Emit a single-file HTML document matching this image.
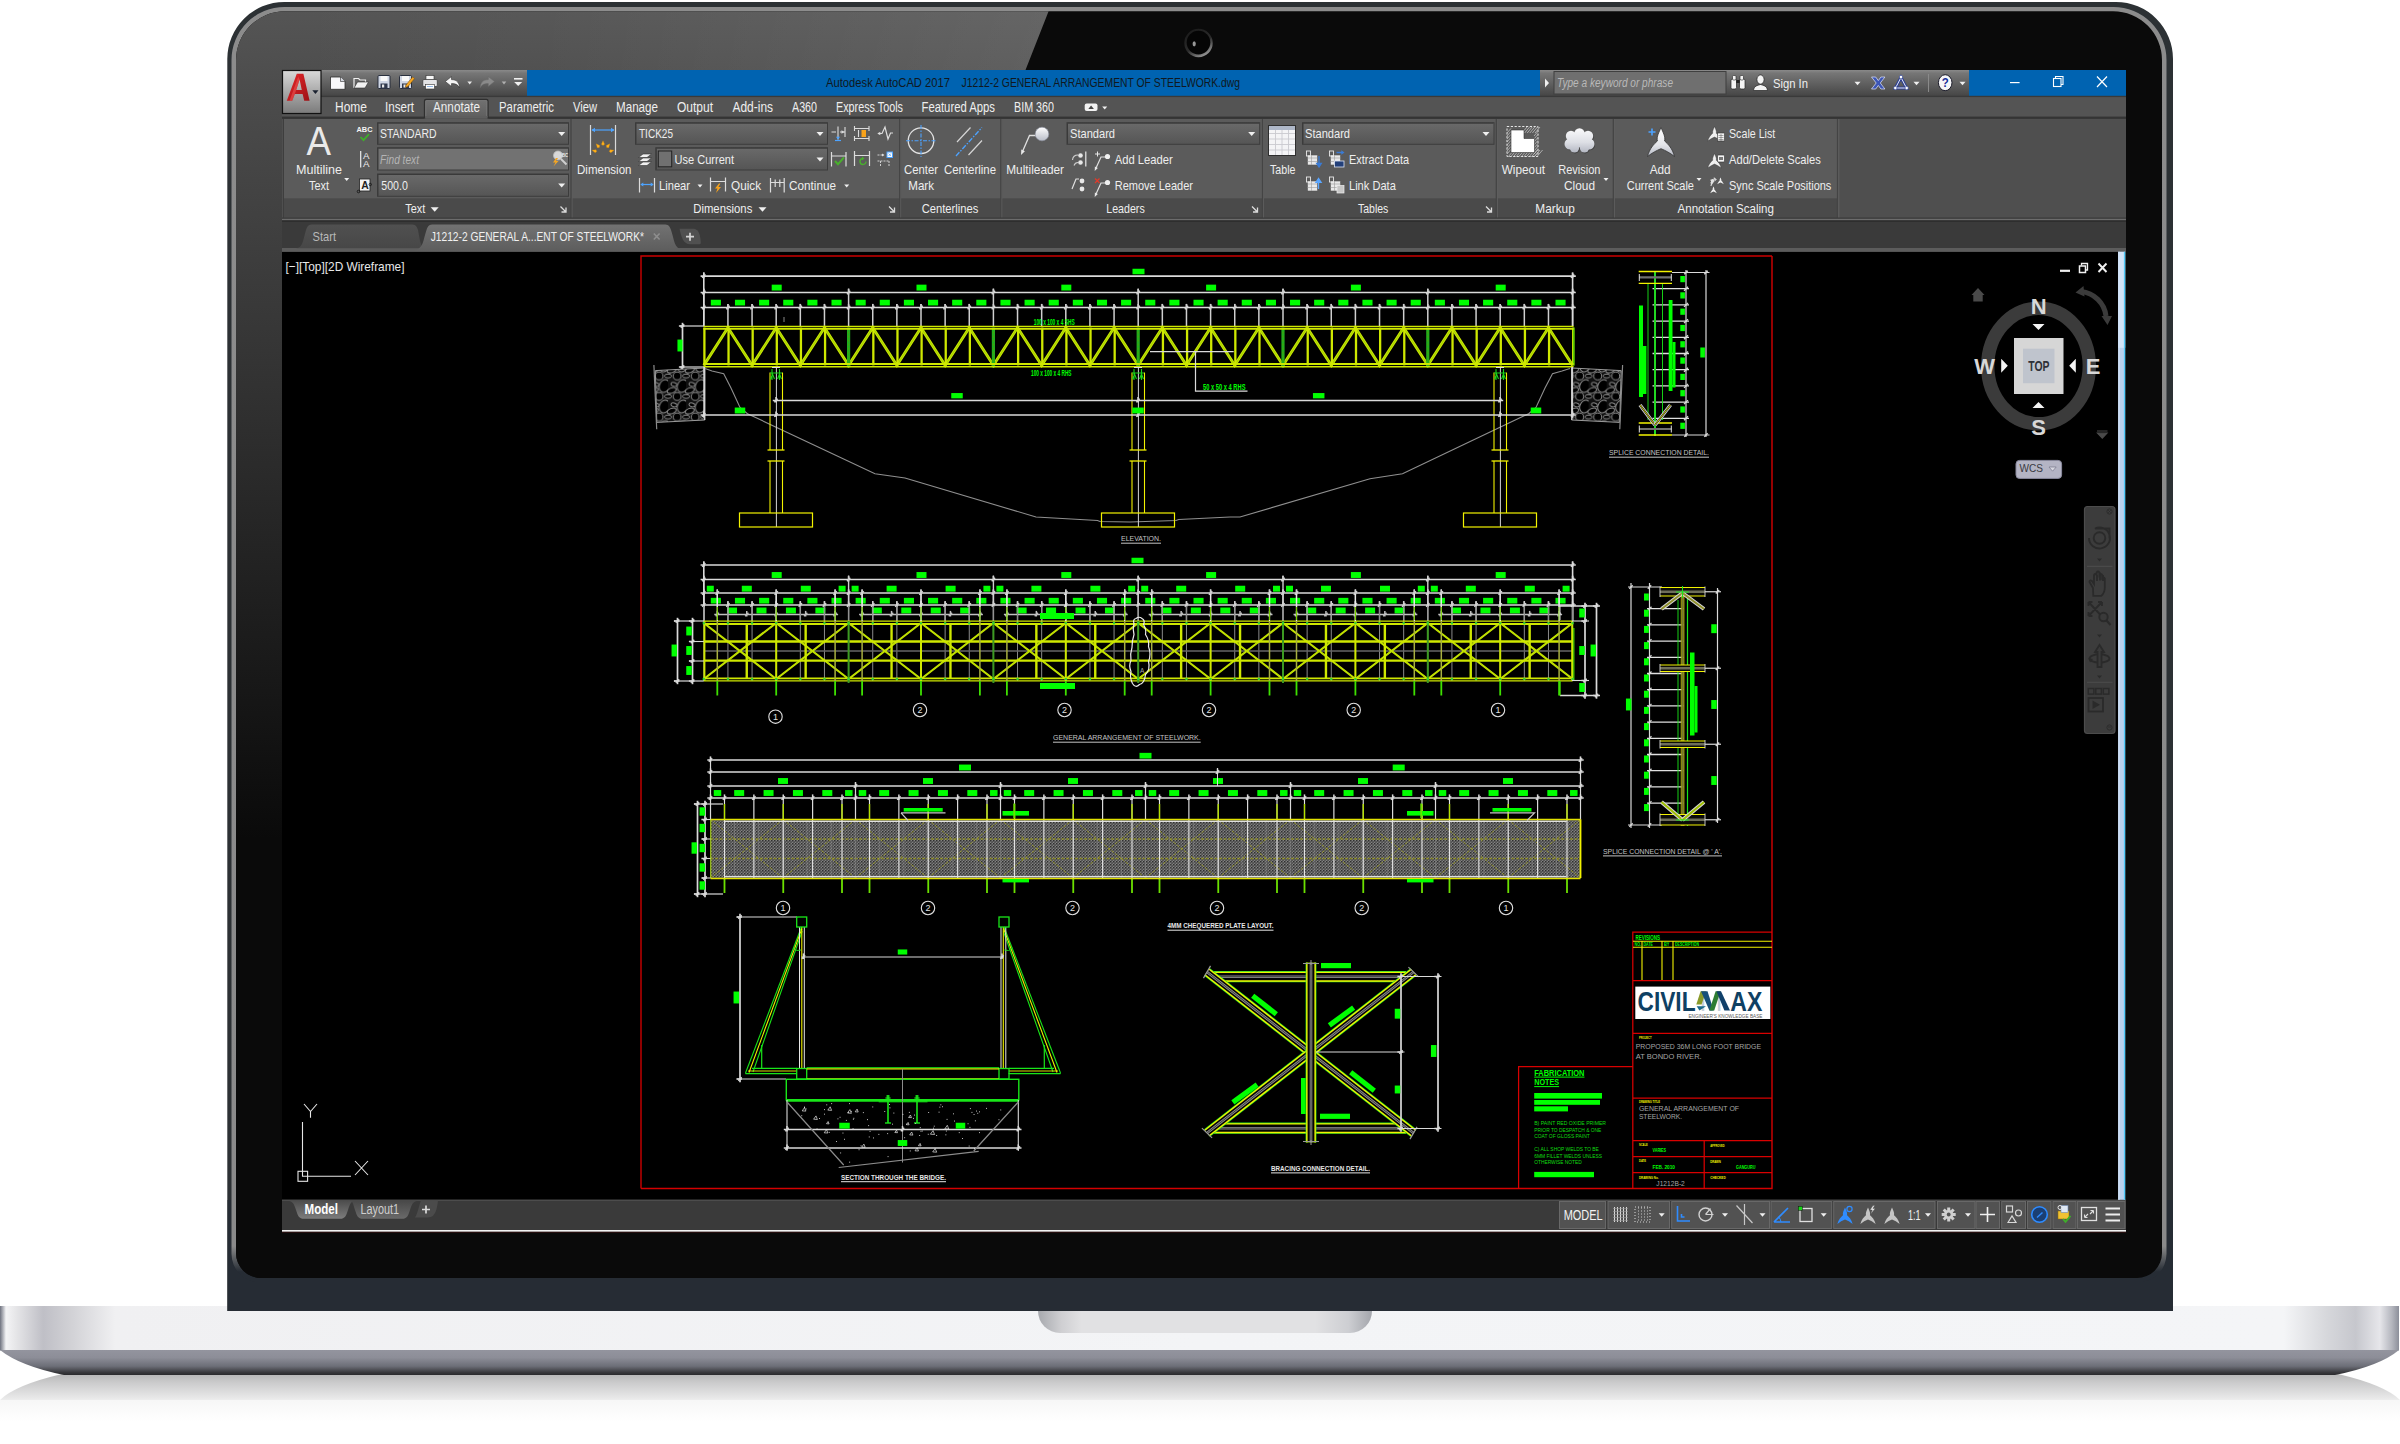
<!DOCTYPE html>
<html lang="en"><head><meta charset="utf-8"><title>Autodesk AutoCAD 2017 - J1212-2 GENERAL ARRANGEMENT OF STEELWORK.dwg</title>
<style>
html,body{margin:0;padding:0;background:#fff;}
body{width:2400px;height:1444px;overflow:hidden;}
svg{display:block;font-family:"Liberation Sans",sans-serif;}
</style></head><body>
<svg width="2400" height="1444" viewBox="0 0 2400 1444">
<defs>
<linearGradient id="gBezelL" x1="0" y1="0" x2="0" y2="1">
 <stop offset="0" stop-color="#565656"/><stop offset="0.078" stop-color="#4b4b4b"/><stop offset="0.457" stop-color="#202020"/><stop offset="0.65" stop-color="#0a0a0a"/><stop offset="1" stop-color="#0a0a0a"/>
</linearGradient>
<linearGradient id="gBaseTop" x1="0" y1="0" x2="1" y2="0">
 <stop offset="0" stop-color="#6f7380"/><stop offset="0.0025" stop-color="#f4f4f6"/><stop offset="0.006" stop-color="#e8e8ea"/><stop offset="0.018" stop-color="#bfbfc6"/><stop offset="0.03" stop-color="#d2d2d6"/><stop offset="0.048" stop-color="#f0f0f2"/>
 <stop offset="0.5" stop-color="#f3f4f6"/>
 <stop offset="0.952" stop-color="#f4f5f7"/><stop offset="0.97" stop-color="#d6d7db"/><stop offset="0.982" stop-color="#c6c7cd"/><stop offset="0.992" stop-color="#e6e6ea"/><stop offset="0.997" stop-color="#b4b6be"/><stop offset="1" stop-color="#8c8f9a"/>
</linearGradient>
<linearGradient id="gBaseBot" x1="0" y1="0" x2="0" y2="1">
 <stop offset="0" stop-color="#93949e"/><stop offset="0.3" stop-color="#8d8e98"/><stop offset="0.65" stop-color="#6c6e77"/><stop offset="0.9" stop-color="#38383c"/><stop offset="1" stop-color="#2a2a2c"/>
</linearGradient>
<linearGradient id="gRefl" x1="0" y1="0" x2="0" y2="1">
 <stop offset="0" stop-color="#b7b7b7"/><stop offset="0.13" stop-color="#cbcbcc"/><stop offset="0.385" stop-color="#ebebeb"/><stop offset="0.40" stop-color="#f7f7f7"/><stop offset="0.72" stop-color="#ffffff"/><stop offset="1" stop-color="#ffffff"/>
</linearGradient>
<linearGradient id="gNotch" x1="0" y1="0" x2="1" y2="0">
 <stop offset="0" stop-color="#a7a9ae"/><stop offset="0.07" stop-color="#cfcfd2"/><stop offset="0.13" stop-color="#e1e1e3"/><stop offset="0.83" stop-color="#e1e1e3"/><stop offset="0.93" stop-color="#cdced2"/><stop offset="1" stop-color="#a4a6ac"/>
</linearGradient>
<clipPath id="cBezel"><path d="M236,60.2 A49,49 0 0 1 285,11.2 H2113 A49,49 0 0 1 2162,60.2 V1253 A25,25 0 0 1 2137,1278 H261 A25,25 0 0 1 236,1253 Z"/></clipPath>
<linearGradient id="gBezelH" x1="0" y1="0" x2="1" y2="0"><stop offset="0" stop-color="#ffffff" stop-opacity="0"/><stop offset="0.35" stop-color="#ffffff" stop-opacity="0.02"/><stop offset="1" stop-color="#ffffff" stop-opacity="0.1"/></linearGradient>
<linearGradient id="gRing" gradientUnits="userSpaceOnUse" x1="0" y1="0" x2="0" y2="1282"><stop offset="0" stop-color="#8c8c8c"/><stop offset="0.972" stop-color="#8a8a8a"/><stop offset="0.992" stop-color="#262c34"/><stop offset="1" stop-color="#262c34"/></linearGradient>
<linearGradient id="gCam" x1="0.2" y1="0" x2="0.8" y2="1"><stop offset="0" stop-color="#1a1a1a"/><stop offset="0.55" stop-color="#2c2c2c"/><stop offset="1" stop-color="#a8a8a8"/></linearGradient>

<linearGradient id="gQat" x1="0" y1="0" x2="0" y2="1"><stop offset="0" stop-color="#8a8a8a"/><stop offset="0.12" stop-color="#767676"/><stop offset="1" stop-color="#454545"/></linearGradient>
<linearGradient id="gApp" x1="0" y1="0" x2="0" y2="1"><stop offset="0" stop-color="#d9d9d9"/><stop offset="0.5" stop-color="#a9a9a9"/><stop offset="1" stop-color="#7b7b7b"/></linearGradient>
<linearGradient id="gDrop" x1="0" y1="0" x2="0" y2="1"><stop offset="0" stop-color="#6a6a6a"/><stop offset="1" stop-color="#555555"/></linearGradient>
<linearGradient id="gTabA" x1="0" y1="0" x2="0" y2="1"><stop offset="0" stop-color="#727272"/><stop offset="1" stop-color="#5d5d5d"/></linearGradient>
<linearGradient id="gTabI" x1="0" y1="0" x2="0" y2="1"><stop offset="0" stop-color="#505050"/><stop offset="1" stop-color="#474747"/></linearGradient>
<linearGradient id="gMod" x1="0" y1="0" x2="0" y2="1"><stop offset="0" stop-color="#4c4c4c"/><stop offset="1" stop-color="#7d7d7d"/></linearGradient>
<linearGradient id="gLay" x1="0" y1="0" x2="0" y2="1"><stop offset="0" stop-color="#484848"/><stop offset="1" stop-color="#6a6a6a"/></linearGradient>
<linearGradient id="gBall" x1="0" y1="0" x2="0" y2="1"><stop offset="0" stop-color="#ffffff"/><stop offset="1" stop-color="#b9bdc8"/></linearGradient>
<linearGradient id="gCloud" gradientUnits="userSpaceOnUse" x1="0" y1="128" x2="0" y2="154"><stop offset="0" stop-color="#fbfbfc"/><stop offset="0.55" stop-color="#dddfe5"/><stop offset="1" stop-color="#aeb2be"/></linearGradient>
<linearGradient id="gAnn" gradientUnits="userSpaceOnUse" x1="0" y1="-15" x2="0" y2="14"><stop offset="0" stop-color="#ffffff"/><stop offset="0.6" stop-color="#e4e5ea"/><stop offset="1" stop-color="#b4b8c4"/></linearGradient>
<linearGradient id="gRedA" x1="0" y1="0" x2="1" y2="1"><stop offset="0" stop-color="#e8262a"/><stop offset="1" stop-color="#9c1216"/></linearGradient>

<pattern id="pStone" width="18.05" height="20.5" patternUnits="userSpaceOnUse" patternTransform="translate(650 366)">
 <rect width="18.05" height="20.5" fill="#101010"/>
 <g fill="#000" stroke="#909090" stroke-width="0.95">
 <ellipse cx="3.65" cy="4" rx="4.6" ry="2.6" transform="rotate(-20 3.65 4)"/><ellipse cx="21.7" cy="4" rx="4.6" ry="2.6" transform="rotate(-20 21.7 4)"/>
 <ellipse cx="5.85" cy="18.4" rx="3" ry="1.8" transform="rotate(15 5.85 18.4)"/><ellipse cx="5.85" cy="-2.1" rx="3" ry="1.8" transform="rotate(15 5.85 -2.1)"/>
 <ellipse cx="0" cy="10" rx="3.5" ry="1.9"/><ellipse cx="18.05" cy="10" rx="3.5" ry="1.9"/>
 <circle cx="9.1" cy="10" r="3.9"/>
 <ellipse cx="14.4" cy="20" rx="5" ry="6.5" transform="rotate(20 14.4 20)"/><ellipse cx="14.4" cy="-0.5" rx="5" ry="6.5" transform="rotate(20 14.4 -0.5)"/>
 </g>
</pattern>
<pattern id="pCheq" width="3" height="3" patternUnits="userSpaceOnUse">
 <rect width="3" height="3" fill="#565656"/><path d="M0,3 L3,0" stroke="#929292" stroke-width="0.7"/><path d="M0,0 L1.5,1.5" stroke="#242424" stroke-width="0.8"/>
</pattern>
</defs>
<g id="frame"><path d="M62,1374 H2338 Q2385,1385 2400,1400 V1440 H0 V1400 Q15,1385 62,1374 Z" fill="url(#gRefl)"/>
<rect x="0" y="1306" width="2399" height="44.5" fill="url(#gBaseTop)" />
<path d="M0,1350 H2399 Q2380,1366 2335,1375 H64 Q20,1366 0,1350 Z" fill="url(#gBaseBot)"/>
<path d="M227.3,1311 V59 A57,57 0 0 1 284.3,2 H2116 A57,57 0 0 1 2173,59 V1311 Z" fill="#2c3134"/>
<rect x="227.6" y="1200" width="1945.4" height="111" fill="#262c34" />
<path d="M231.5,1254 V60 A53,53 0 0 1 284.5,7 H2113.5 A53,53 0 0 1 2166.5,60 V1254 A28,28 0 0 1 2138.5,1282 H259.5 A28,28 0 0 1 231.5,1254 Z" fill="#262c34"/>
<path d="M231.5,1254 V60 A53,53 0 0 1 284.5,7 H2113.5 A53,53 0 0 1 2166.5,60 V1254 A28,28 0 0 1 2138.5,1282 H259.5 A28,28 0 0 1 231.5,1254 Z" fill="url(#gRing)"/>
<g clip-path="url(#cBezel)">
<rect x="230" y="0" width="1940" height="1290" fill="#0a0a0a" />
<path d="M230,0 H1053 L1025.5,70 H282 V1290 H230 Z" fill="url(#gBezelL)"/>
<path d="M282,0 H1053 L1025.5,70 H282 Z" fill="url(#gBezelH)"/>
</g>
<path d="M1038,1311 H1372 V1311 A22,22 0 0 1 1350,1333 H1060 A22,22 0 0 1 1038,1311 Z" fill="url(#gNotch)"/>
<circle cx="1198.5" cy="43" r="14.2" fill="url(#gCam)"/><circle cx="1198.5" cy="42.6" r="11.8" fill="#050505"/><ellipse cx="1194.2" cy="43.8" rx="1.6" ry="2.6" fill="#c8c8c8" opacity="0.75"/></g><g id="ui"><rect x="282" y="70" width="1844" height="1162" fill="#000000" /><rect x="282" y="70" width="1844" height="26.5" fill="#0063b1" /><rect x="320.5" y="70" width="206.5" height="26.3" fill="url(#gQat)" /><rect x="1540" y="70" width="429" height="26.3" fill="url(#gQat)" /><text x="826" y="87" font-size="13.5" fill="#101820" textLength="124" lengthAdjust="spacingAndGlyphs">Autodesk AutoCAD 2017</text><text x="961.5" y="87" font-size="13.5" fill="#101820" textLength="278.5" lengthAdjust="spacingAndGlyphs">J1212-2 GENERAL ARRANGEMENT OF STEELWORK.dwg</text><path d="M1545,78.5 l4,4.5 l-4,4.5 z" fill="#f0f0f0"/><rect x="1554" y="71.5" width="172" height="22.5" fill="#6f6f6f" stroke="#3f3f3f" stroke-width="1"/><text x="1557" y="87.3" font-size="12.5" fill="#b9b9b9" textLength="116" lengthAdjust="spacingAndGlyphs" font-style="italic">Type a keyword or phrase</text><text x="1773" y="87.7" font-size="13.5" fill="#eeeeee" textLength="35" lengthAdjust="spacingAndGlyphs">Sign In</text><path d="M1854.5,81.75 h6 l-3,3.5 z" fill="#f0f0f0"/><path d="M1913.5,81.75 h6 l-3,3.5 z" fill="#f0f0f0"/><path d="M1959.5,81.75 h6 l-3,3.5 z" fill="#f0f0f0"/><line x1="1928.5" y1="74" x2="1928.5" y2="92" stroke="#8a8a8a" stroke-width="1" /><line x1="2010" y1="82.6" x2="2019.6" y2="82.6" stroke="#ffffff" stroke-width="1.2" /><rect x="2053.5" y="78.5" width="7.5" height="8" fill="none" stroke="#fff" stroke-width="1.1"/><path d="M2055.5,78.5 v-2 h7.5 v8 h-2" fill="none" stroke="#fff" stroke-width="1.1"/><path d="M2097,76.5 l10,10.5 M2107,76.5 l-10,10.5" stroke="#fff" stroke-width="1.2" fill="none"/><rect x="282" y="96.3" width="1844" height="22" fill="#545454" /><rect x="282" y="95.8" width="1844" height="1.3" fill="#3a3a3a" /><rect x="282" y="116.6" width="1844" height="1.7" fill="#343434" /><path d="M424.5,118.5 V101 a1.5,1.5 0 0 1 1.5,-1.5 H486.5 a1.5,1.5 0 0 1 1.5,1.5 V118.5 Z" fill="url(#gTabA)" stroke="#2f2f2f" stroke-width="1.3"/><path d="M425.8,117 V101.3 a0.8,0.8 0 0 1 0.8,-0.8 H486 a0.8,0.8 0 0 1 0.8,0.8 V117" fill="none" stroke="#7a7a7a" stroke-width="0.8"/><rect x="425.2" y="116" width="62.3" height="3" fill="#5d5d5d" /><text x="335" y="112" font-size="14" fill="#eeeeee" textLength="32" lengthAdjust="spacingAndGlyphs">Home</text><text x="385" y="112" font-size="14" fill="#eeeeee" textLength="29" lengthAdjust="spacingAndGlyphs">Insert</text><text x="433" y="112" font-size="14" fill="#eeeeee" textLength="47" lengthAdjust="spacingAndGlyphs">Annotate</text><text x="499" y="112" font-size="14" fill="#eeeeee" textLength="55" lengthAdjust="spacingAndGlyphs">Parametric</text><text x="573" y="112" font-size="14" fill="#eeeeee" textLength="24" lengthAdjust="spacingAndGlyphs">View</text><text x="616" y="112" font-size="14" fill="#eeeeee" textLength="42" lengthAdjust="spacingAndGlyphs">Manage</text><text x="677" y="112" font-size="14" fill="#eeeeee" textLength="36" lengthAdjust="spacingAndGlyphs">Output</text><text x="732.5" y="112" font-size="14" fill="#eeeeee" textLength="40.5" lengthAdjust="spacingAndGlyphs">Add-ins</text><text x="792" y="112" font-size="14" fill="#eeeeee" textLength="25" lengthAdjust="spacingAndGlyphs">A360</text><text x="836" y="112" font-size="14" fill="#eeeeee" textLength="67" lengthAdjust="spacingAndGlyphs">Express Tools</text><text x="921.5" y="112" font-size="14" fill="#eeeeee" textLength="73.5" lengthAdjust="spacingAndGlyphs">Featured Apps</text><text x="1014" y="112" font-size="14" fill="#eeeeee" textLength="40" lengthAdjust="spacingAndGlyphs">BIM 360</text><rect x="1084.7" y="103.5" width="12.8" height="7.5" rx="2" fill="#f2f2f2"/><path d="M1088.3,109 h5.6 l-2.8,-3.6 z" fill="#444"/><path d="M1102.2,106.5 h5 l-2.5,3 z" fill="#f0f0f0"/><rect x="282" y="118.5" width="1844" height="100" fill="#4f4f4f" /><rect x="284" y="119" width="287" height="79.5" fill="#5b5b5b" /><rect x="284" y="198.5" width="287" height="19.5" fill="#4a4a4a" /><line x1="571" y1="119" x2="571" y2="218" stroke="#444444" stroke-width="1.2" /><line x1="572.3" y1="119" x2="572.3" y2="218" stroke="#676767" stroke-width="0.8" /><rect x="572.5" y="119" width="327.2" height="79.5" fill="#5b5b5b" /><rect x="572.5" y="198.5" width="327.2" height="19.5" fill="#4a4a4a" /><line x1="899.7" y1="119" x2="899.7" y2="218" stroke="#444444" stroke-width="1.2" /><line x1="901" y1="119" x2="901" y2="218" stroke="#676767" stroke-width="0.8" /><rect x="901.2" y="119" width="99.6" height="79.5" fill="#5b5b5b" /><rect x="901.2" y="198.5" width="99.6" height="19.5" fill="#4a4a4a" /><line x1="1000.8" y1="119" x2="1000.8" y2="218" stroke="#444444" stroke-width="1.2" /><line x1="1002.1" y1="119" x2="1002.1" y2="218" stroke="#676767" stroke-width="0.8" /><rect x="1002.3" y="119" width="260.2" height="79.5" fill="#5b5b5b" /><rect x="1002.3" y="198.5" width="260.2" height="19.5" fill="#4a4a4a" /><line x1="1262.5" y1="119" x2="1262.5" y2="218" stroke="#444444" stroke-width="1.2" /><line x1="1263.8" y1="119" x2="1263.8" y2="218" stroke="#676767" stroke-width="0.8" /><rect x="1264" y="119" width="232.3" height="79.5" fill="#5b5b5b" /><rect x="1264" y="198.5" width="232.3" height="19.5" fill="#4a4a4a" /><line x1="1496.3" y1="119" x2="1496.3" y2="218" stroke="#444444" stroke-width="1.2" /><line x1="1497.6" y1="119" x2="1497.6" y2="218" stroke="#676767" stroke-width="0.8" /><rect x="1497.8" y="119" width="115.5" height="79.5" fill="#5b5b5b" /><rect x="1497.8" y="198.5" width="115.5" height="19.5" fill="#4a4a4a" /><line x1="1613.3" y1="119" x2="1613.3" y2="218" stroke="#444444" stroke-width="1.2" /><line x1="1614.6" y1="119" x2="1614.6" y2="218" stroke="#676767" stroke-width="0.8" /><rect x="1614.8" y="119" width="222.7" height="79.5" fill="#5b5b5b" /><rect x="1614.8" y="198.5" width="222.7" height="19.5" fill="#4a4a4a" /><line x1="1837.5" y1="119" x2="1837.5" y2="218" stroke="#444444" stroke-width="1.2" /><line x1="1838.8" y1="119" x2="1838.8" y2="218" stroke="#676767" stroke-width="0.8" /><line x1="283.5" y1="119" x2="283.5" y2="218" stroke="#3e3e3e" stroke-width="1" /><rect x="282" y="217.5" width="1844" height="1.2" fill="#3a3a3a" /><rect x="282" y="218.7" width="1844" height="1.6" fill="#6c6c6c" /><rect x="282" y="220.3" width="1844" height="1.2" fill="#444444" /><text x="306.5" y="155" font-size="41" fill="#e9e9e9" textLength="24.5" lengthAdjust="spacingAndGlyphs">A</text><text x="296" y="174.3" font-size="13.5" fill="#eeeeee" textLength="46" lengthAdjust="spacingAndGlyphs">Multiline</text><text x="309" y="190.2" font-size="13.5" fill="#eeeeee" textLength="20" lengthAdjust="spacingAndGlyphs">Text</text><path d="M344.2,178 h5 l-2.5,3 z" fill="#f0f0f0"/><rect x="377.5" y="122.7" width="191" height="21.6" fill="url(#gDrop)" stroke="#3c3c3c" stroke-width="1"/><path d="M378,143.8 V123.2 H568" stroke="#3a3a3a" stroke-width="1" fill="none"/><rect x="377.5" y="147.7" width="191" height="22.3" fill="#727272" stroke="#3c3c3c" stroke-width="1"/><path d="M378,169.5 V148.2 H568" stroke="#3a3a3a" stroke-width="1" fill="none"/><rect x="377.5" y="174" width="191" height="22.3" fill="url(#gDrop)" stroke="#3c3c3c" stroke-width="1"/><path d="M378,195.8 V174.5 H568" stroke="#3a3a3a" stroke-width="1" fill="none"/><text x="380" y="137.7" font-size="13.5" fill="#eeeeee" textLength="56.5" lengthAdjust="spacingAndGlyphs">STANDARD</text><text x="380" y="163.5" font-size="13" fill="#b4b4b4" textLength="39" lengthAdjust="spacingAndGlyphs" font-style="italic">Find text</text><text x="381.3" y="189.7" font-size="13.5" fill="#eeeeee" textLength="26.5" lengthAdjust="spacingAndGlyphs">500.0</text><path d="M558.2,132 h7 l-3.5,4 z" fill="#f0f0f0"/><path d="M558.2,183.5 h7 l-3.5,4 z" fill="#f0f0f0"/><text x="356.5" y="132" font-size="7" fill="#f4f4f4" textLength="16" lengthAdjust="spacingAndGlyphs" font-weight="bold">ABC</text><path d="M360.5,137 l3,3.2 l5.5,-6" stroke="#3fae2a" stroke-width="1.8" fill="none"/><line x1="360.7" y1="151" x2="360.7" y2="167.5" stroke="#ededed" stroke-width="1.2" /><text x="363" y="158.5" font-size="8.5" fill="#ededed" textLength="6.5" lengthAdjust="spacingAndGlyphs">A</text><text x="363" y="167" font-size="8.5" fill="#ededed" textLength="6.5" lengthAdjust="spacingAndGlyphs">A</text><rect x="359.5" y="179" width="10.5" height="12" fill="#f4f4f4" stroke="#222" stroke-width="0.8"/><text x="361.2" y="189.3" font-size="10.5" fill="#222" textLength="7.5" lengthAdjust="spacingAndGlyphs" font-weight="bold">A</text><circle cx="358.5" cy="191.5" r="1.3" fill="none" stroke="#111" stroke-width="0.8"/><circle cx="370.3" cy="184.5" r="1.2" fill="none" stroke="#111" stroke-width="0.8"/><circle cx="558" cy="155.5" r="4.5" fill="#d8d8d8" stroke="#bbb" stroke-width="0.8"/><path d="M561,159 l5.5,5.5" stroke="#cfcfcf" stroke-width="2"/><path d="M556,158 l-3,4.5 h2.5 l-2,4 l5,-5.5 h-2.5 l2,-3 z" fill="#f5a623"/><text x="562" y="156.5" font-size="5.5" fill="#eee" textLength="6" lengthAdjust="spacingAndGlyphs" font-weight="bold">BC</text><text x="405.3" y="212.7" font-size="13.5" fill="#eeeeee" textLength="20" lengthAdjust="spacingAndGlyphs">Text</text><path d="M430.7,207.25 h8 l-4,4.5 z" fill="#f0f0f0"/><path d="M560.5,206.5 l5,5 M566,207.5 v4.5 h-4.5" stroke="#dcdcdc" stroke-width="1.3" fill="none"/><path d="M590.5,125 V155 M615.5,125 V155" stroke="#d9d9d9" stroke-width="1.2"/><path d="M592,130 H614" stroke="#4da3ff" stroke-width="1.2"/><path d="M591.5,130 l3.5,-2.2 v4.4 z M614.5,130 l-3.5,-2.2 v4.4 z" fill="#4da3ff"/><path d="M0,-2.8 L1.6,0.8 L0,2 L-1.6,0.8 Z" fill="#ffb11b" stroke="#d98a00" stroke-width="0.3" transform="translate(603,143.5) rotate(0)"/><path d="M0,-2.8 L1.6,0.8 L0,2 L-1.6,0.8 Z" fill="#ffb11b" stroke="#d98a00" stroke-width="0.3" transform="translate(598,146) rotate(-40)"/><path d="M0,-2.8 L1.6,0.8 L0,2 L-1.6,0.8 Z" fill="#ffb11b" stroke="#d98a00" stroke-width="0.3" transform="translate(608,146) rotate(40)"/><path d="M0,-2.8 L1.6,0.8 L0,2 L-1.6,0.8 Z" fill="#ffb11b" stroke="#d98a00" stroke-width="0.3" transform="translate(594.8,151) rotate(-75)"/><path d="M0,-2.8 L1.6,0.8 L0,2 L-1.6,0.8 Z" fill="#ffb11b" stroke="#d98a00" stroke-width="0.3" transform="translate(611.2,151) rotate(75)"/><text x="577" y="174.3" font-size="13.5" fill="#eeeeee" textLength="54.5" lengthAdjust="spacingAndGlyphs">Dimension</text><rect x="635.5" y="122.7" width="192" height="21.6" fill="url(#gDrop)" stroke="#3c3c3c" stroke-width="1"/><path d="M636,143.8 V123.2 H827" stroke="#3a3a3a" stroke-width="1" fill="none"/><text x="639" y="137.7" font-size="13.5" fill="#eeeeee" textLength="34" lengthAdjust="spacingAndGlyphs">TICK25</text><path d="M816.5,132 h7 l-3.5,4 z" fill="#f0f0f0"/><rect x="655.8" y="147.7" width="171.7" height="22.3" fill="url(#gDrop)" stroke="#3c3c3c" stroke-width="1"/><path d="M656.3,169.5 V148.2 H827" stroke="#3a3a3a" stroke-width="1" fill="none"/><path d="M816.5,157.5 h7 l-3.5,4 z" fill="#f0f0f0"/><rect x="658.3" y="151" width="13.4" height="15.8" fill="#707070" stroke="#222" stroke-width="1"/><text x="674.5" y="163.5" font-size="13.5" fill="#eeeeee" textLength="59.5" lengthAdjust="spacingAndGlyphs">Use Current</text><path d="M638.5,157.5 l4.5,-3.5 h8.5 l-4.5,3.5 z" fill="#efefef" stroke="#333" stroke-width="0.6"/><path d="M638.5,161.5 l4.5,-3.5 h8.5 l-4.5,3.5 z" fill="#efefef" stroke="#333" stroke-width="0.6"/><path d="M638.5,165.5 l4.5,-3.5 h8.5 l-4.5,3.5 z" fill="#efefef" stroke="#333" stroke-width="0.6"/><path d="M639.5,178 V192.5 M654.5,178 V192.5" stroke="#dcdcdc" stroke-width="1.2"/><path d="M641,184.5 H653" stroke="#4da3ff" stroke-width="1.2"/><path d="M640.3,184.5 l3,-2 v4 z M653.7,184.5 l-3,-2 v4 z" fill="#4da3ff"/><text x="659" y="189.7" font-size="13.5" fill="#eeeeee" textLength="31" lengthAdjust="spacingAndGlyphs">Linear</text><path d="M697.5,184.5 h5 l-2.5,3 z" fill="#f0f0f0"/><path d="M710.5,177.5 V191.5 M725.5,177.5 V191.5 M711,181.5 H725" stroke="#dcdcdc" stroke-width="1.2" fill="none"/><path d="M719,183.5 l-4,5 h2.5 l-1.5,4.5 l5,-6 h-2.6 l2,-3.5 z" fill="#f7a21b"/><text x="731" y="189.7" font-size="13.5" fill="#eeeeee" textLength="30" lengthAdjust="spacingAndGlyphs">Quick</text><path d="M770.5,178 V192.5 M784.2,178 V192.5 M775.2,179.5 V187 M779.8,179.5 V187 M771,182.5 H784" stroke="#dcdcdc" stroke-width="1.2" fill="none"/><text x="789" y="189.7" font-size="13.5" fill="#eeeeee" textLength="47" lengthAdjust="spacingAndGlyphs">Continue</text><path d="M844.2,184.5 h5 l-2.5,3 z" fill="#f0f0f0"/><path d="M831.5,132 H836 M838,126.5 V139.5 M845,127 V137 M840,132 H845" stroke="#dcdcdc" stroke-width="1.1" fill="none"/><path d="M844.5,132 l-3,-1.8 v3.6z" fill="#dcdcdc"/><path d="M835,140.5 h6" stroke="#4da3ff" stroke-width="1.2"/><path d="M838,139.8 l-2,-3 h4z" fill="#4da3ff"/><path d="M854.5,126 V131 M869,126 V131 M854.5,136 V141 M869,136 V141 M855,128.5 H868.5 M855,138.5 H868.5" stroke="#dcdcdc" stroke-width="1.1" fill="none"/><rect x="861.5" y="130" width="4.5" height="7" fill="#f7a21b"/><path d="M858.5,130 v7" stroke="#dcdcdc" stroke-width="1.1"/><path d="M878,133.5 h4 l3,-6.5 l3,12 l2.5,-6 h2.5" stroke="#dcdcdc" stroke-width="1.2" fill="none"/><path d="M877.3,133.5 l3,-1.8 v3.6z" fill="#dcdcdc"/><path d="M831.5,152 V166.5 M846,152 V166.5 M832,156 H845.5" stroke="#dcdcdc" stroke-width="1.2" fill="none"/><path d="M835,161 l3,3.2 l6,-6.8" stroke="#49b02c" stroke-width="2" fill="none"/><path d="M854.5,151 V166 M869.5,151 V166 M855,155.5 H869" stroke="#dcdcdc" stroke-width="1.2" fill="none"/><path d="M866,161.5 a3,3 0 1 1 -3,-3" stroke="#49b02c" stroke-width="1.4" fill="none"/><path d="M862,156.5 l2.5,2 l-2.5,2z" fill="#49b02c"/><path d="M877.5,155 H884 M877.5,161 H889.5 M880.5,161 V167 M889,161 V167" stroke="#cfcfcf" stroke-width="1" stroke-dasharray="2 1" fill="none"/><path d="M884.5,155 l-2.5,-1.6 v3.2z" fill="#dcdcdc"/><rect x="887" y="152" width="5.5" height="5.5" fill="#fff" stroke="#4da3ff" stroke-width="1"/><path d="M888.5,153.5 l2.5,2.5 M891,153.5 l-2.5,2.5" stroke="#4da3ff" stroke-width="0.7"/><text x="693.3" y="212.7" font-size="13.5" fill="#eeeeee" textLength="59" lengthAdjust="spacingAndGlyphs">Dimensions</text><path d="M758.5,207.25 h8 l-4,4.5 z" fill="#f0f0f0"/><path d="M889,206.5 l5,5 M894.5,207.5 v4.5 h-4.5" stroke="#dcdcdc" stroke-width="1.3" fill="none"/><circle cx="921" cy="140.7" r="12.8" fill="none" stroke="#e2e2e2" stroke-width="1.3"/><path d="M906,140.7 H936 M921,125 V157" stroke="#4da3ff" stroke-width="1.1" stroke-dasharray="4 1.5 1.5 1.5" fill="none"/><text x="904" y="174.3" font-size="13.5" fill="#eeeeee" textLength="34" lengthAdjust="spacingAndGlyphs">Center</text><text x="908.3" y="190.2" font-size="13.5" fill="#eeeeee" textLength="25.7" lengthAdjust="spacingAndGlyphs">Mark</text><path d="M957,142 L970.5,127.5 M968.5,155 L982,140.5" stroke="#d5d5d5" stroke-width="1.2"/><path d="M956,156 L982,127.5" stroke="#4da3ff" stroke-width="1.3" stroke-dasharray="5 1.5 1.5 1.5"/><text x="944" y="174.3" font-size="13.5" fill="#eeeeee" textLength="52" lengthAdjust="spacingAndGlyphs">Centerline</text><text x="921.7" y="212.7" font-size="13.5" fill="#eeeeee" textLength="56.6" lengthAdjust="spacingAndGlyphs">Centerlines</text><path d="M1037,135.5 H1029.5 L1022.5,151.5" stroke="#e0e0e0" stroke-width="1.3" fill="none"/><path d="M1021,155 l0.3,-5.5 l3.6,1.8 z" fill="#e8e8e8"/><circle cx="1042" cy="134" r="6.8" fill="url(#gBall)" stroke="#8e93a3" stroke-width="0.6"/><text x="1006.3" y="174.3" font-size="13.5" fill="#eeeeee" textLength="57.7" lengthAdjust="spacingAndGlyphs">Multileader</text><rect x="1067" y="122.7" width="192.7" height="21.6" fill="url(#gDrop)" stroke="#3c3c3c" stroke-width="1"/><path d="M1067.5,143.8 V123.2 H1259.2" stroke="#3a3a3a" stroke-width="1" fill="none"/><text x="1070" y="137.7" font-size="13.5" fill="#eeeeee" textLength="45" lengthAdjust="spacingAndGlyphs">Standard</text><path d="M1248.2,132 h7 l-3.5,4 z" fill="#f0f0f0"/><circle cx="1080.5" cy="155.5" r="2.3" fill="#e8e8e8"/><circle cx="1080.5" cy="162.5" r="2.3" fill="#e8e8e8"/><path d="M1085.8,151.5 V166.5" stroke="#e8e8e8" stroke-width="1.2"/><path d="M1078,155 q-5,0 -5.5,5 M1078,162.5 q-3,0 -4,3" stroke="#d0d0d0" stroke-width="1.1" fill="none"/><circle cx="1082" cy="181" r="2.4" fill="#e8e8e8"/><circle cx="1082" cy="189" r="2.4" fill="#e8e8e8"/><path d="M1079,179 h-3 l-4,10" stroke="#e0e0e0" stroke-width="1.2" fill="none"/><path d="M1106,157 h-5 l-5,11" stroke="#e0e0e0" stroke-width="1.2" fill="none"/><path d="M1094.7,171 l0.2,-4.5 l3,1.4z" fill="#e8e8e8"/><circle cx="1107.5" cy="156.5" r="2.6" fill="#f0f0f0"/><path d="M1095,154 h5 M1097.5,151.5 v5" stroke="#e8e8e8" stroke-width="1"/><text x="1114.7" y="163.5" font-size="13.5" fill="#eeeeee" textLength="58" lengthAdjust="spacingAndGlyphs">Add Leader</text><path d="M1106,183 h-5 l-5,11" stroke="#e0e0e0" stroke-width="1.2" fill="none"/><path d="M1094.7,197 l0.2,-4.5 l3,1.4z" fill="#e8e8e8"/><circle cx="1107.5" cy="182.5" r="2.6" fill="#f0f0f0"/><path d="M1095,178.5 l4.5,4.5 M1099.5,178.5 l-4.5,4.5" stroke="#e03a2a" stroke-width="1.2"/><text x="1114.7" y="189.7" font-size="13.5" fill="#eeeeee" textLength="78.3" lengthAdjust="spacingAndGlyphs">Remove Leader</text><text x="1106.3" y="212.7" font-size="13.5" fill="#eeeeee" textLength="38.4" lengthAdjust="spacingAndGlyphs">Leaders</text><path d="M1252,206.5 l5,5 M1257.5,207.5 v4.5 h-4.5" stroke="#dcdcdc" stroke-width="1.3" fill="none"/><rect x="1268.5" y="125.5" width="27" height="30" fill="#f4f4f6" stroke="#2e2e2e" stroke-width="1"/><rect x="1269" y="126" width="26" height="4" fill="#aeb7c8"/><path d="M1269,133.5 H1295 M1269,139 H1295 M1269,144.5 H1295 M1269,150 H1295 M1275.5,130 V155 M1282,130 V155 M1288.5,130 V155" stroke="#c9c9cf" stroke-width="0.9" fill="none"/><text x="1270" y="174.3" font-size="13.5" fill="#eeeeee" textLength="25.5" lengthAdjust="spacingAndGlyphs">Table</text><rect x="1302.5" y="122.7" width="191.5" height="21.6" fill="url(#gDrop)" stroke="#3c3c3c" stroke-width="1"/><path d="M1303,143.8 V123.2 H1493.5" stroke="#3a3a3a" stroke-width="1" fill="none"/><text x="1305" y="137.7" font-size="13.5" fill="#eeeeee" textLength="45" lengthAdjust="spacingAndGlyphs">Standard</text><path d="M1482.5,132 h7 l-3.5,4 z" fill="#f0f0f0"/><rect x="1307.5" y="155" width="10" height="10" fill="#e9e9e9" stroke="#555" stroke-width="0.6"/><path d="M1307.5,158 h10 M1307.5,161.5 h10 M1311.5,155 v10" stroke="#9a9a9a" stroke-width="0.6"/><rect x="1306.5" y="151" width="4" height="5" fill="none" stroke="#e8e8e8" stroke-width="0.9"/><path d="M1319.0,156 v10 M1319.0,167 l-2.3,-3.5 h4.6z" stroke="#3a7bd5" stroke-width="1.3" fill="#3a7bd5"/><rect x="1330.5" y="155" width="10" height="10" fill="#e9e9e9" stroke="#555" stroke-width="0.6"/><path d="M1330.5,158 h10 M1330.5,161.5 h10 M1334.5,155 v10" stroke="#9a9a9a" stroke-width="0.6"/><rect x="1329.5" y="151" width="4" height="5" fill="none" stroke="#e8e8e8" stroke-width="0.9"/><path d="M1336.5,152.5 h6" stroke="#3a7bd5" stroke-width="1.4"/><path d="M1344.5,152.5 l-3.2,-2.2 v4.4z" fill="#3a7bd5"/><rect x="1334.5" y="161" width="9.5" height="6" fill="#23407a" stroke="#dfe6f5" stroke-width="0.8"/><rect x="1307.5" y="181" width="10" height="10" fill="#e9e9e9" stroke="#555" stroke-width="0.6"/><path d="M1307.5,184 h10 M1307.5,187.5 h10 M1311.5,181 v10" stroke="#9a9a9a" stroke-width="0.6"/><rect x="1306.5" y="177" width="4" height="5" fill="none" stroke="#e8e8e8" stroke-width="0.9"/><path d="M1318.5,189 v-8 M1318.5,178.5 l-2.6,3.8 h5.2z" stroke="#5aa6ff" stroke-width="1.3" fill="#5aa6ff"/><rect x="1330.5" y="181" width="10" height="10" fill="#e9e9e9" stroke="#555" stroke-width="0.6"/><path d="M1330.5,184 h10 M1330.5,187.5 h10 M1334.5,181 v10" stroke="#9a9a9a" stroke-width="0.6"/><rect x="1329.5" y="177" width="4" height="5" fill="none" stroke="#e8e8e8" stroke-width="0.9"/><rect x="1337.0" y="185.5" width="7" height="7.5" fill="#c7c7c7" stroke="#eee" stroke-width="0.7"/><text x="1349" y="163.5" font-size="13.5" fill="#eeeeee" textLength="60" lengthAdjust="spacingAndGlyphs">Extract Data</text><text x="1349" y="189.7" font-size="13.5" fill="#eeeeee" textLength="46.8" lengthAdjust="spacingAndGlyphs">Link Data</text><text x="1358" y="212.7" font-size="13.5" fill="#eeeeee" textLength="30.3" lengthAdjust="spacingAndGlyphs">Tables</text><path d="M1486,206.5 l5,5 M1491.5,207.5 v4.5 h-4.5" stroke="#dcdcdc" stroke-width="1.3" fill="none"/><rect x="1507" y="126.5" width="31" height="30" fill="none" stroke="#e6e6e6" stroke-width="1" stroke-dasharray="2.2 1.6"/><path d="M1508,157 l6,-7" stroke="#cfcfcf" stroke-width="0.7"/><path d="M1510.6,157 l6,-7" stroke="#cfcfcf" stroke-width="0.7"/><path d="M1513.2,157 l6,-7" stroke="#cfcfcf" stroke-width="0.7"/><path d="M1515.8,157 l6,-7" stroke="#cfcfcf" stroke-width="0.7"/><path d="M1518.4,157 l6,-7" stroke="#cfcfcf" stroke-width="0.7"/><path d="M1521,157 l6,-7" stroke="#cfcfcf" stroke-width="0.7"/><path d="M1523.6,157 l6,-7" stroke="#cfcfcf" stroke-width="0.7"/><path d="M1526.2,157 l6,-7" stroke="#cfcfcf" stroke-width="0.7"/><path d="M1528.8,157 l6,-7" stroke="#cfcfcf" stroke-width="0.7"/><path d="M1531.4,157 l6,-7" stroke="#cfcfcf" stroke-width="0.7"/><path d="M1534,157 l6,-7" stroke="#cfcfcf" stroke-width="0.7"/><path d="M1536.6,157 l6,-7" stroke="#cfcfcf" stroke-width="0.7"/><path d="M1522,133 l5,-6" stroke="#cfcfcf" stroke-width="0.7"/><path d="M1524.6,133 l5,-6" stroke="#cfcfcf" stroke-width="0.7"/><path d="M1527.2,133 l5,-6" stroke="#cfcfcf" stroke-width="0.7"/><path d="M1529.8,133 l5,-6" stroke="#cfcfcf" stroke-width="0.7"/><path d="M1532.4,133 l5,-6" stroke="#cfcfcf" stroke-width="0.7"/><path d="M1535,133 l5,-6" stroke="#cfcfcf" stroke-width="0.7"/><path d="M1507,133 l4,-4.6 M1534,136 l4,-4.6" stroke="#cfcfcf" stroke-width="0.7"/><path d="M1507,136 l4,-4.6 M1534,139 l4,-4.6" stroke="#cfcfcf" stroke-width="0.7"/><path d="M1507,139 l4,-4.6 M1534,142 l4,-4.6" stroke="#cfcfcf" stroke-width="0.7"/><path d="M1507,142 l4,-4.6 M1534,145 l4,-4.6" stroke="#cfcfcf" stroke-width="0.7"/><path d="M1507,145 l4,-4.6 M1534,148 l4,-4.6" stroke="#cfcfcf" stroke-width="0.7"/><path d="M1507,148 l4,-4.6 M1534,151 l4,-4.6" stroke="#cfcfcf" stroke-width="0.7"/><path d="M1507,151 l4,-4.6 M1534,154 l4,-4.6" stroke="#cfcfcf" stroke-width="0.7"/><path d="M1507,154 l4,-4.6 M1534,157 l4,-4.6" stroke="#cfcfcf" stroke-width="0.7"/><path d="M1511,130 H1524 V138.5 H1534.5 V152.5 H1511 Z" fill="#ffffff" stroke="#333" stroke-width="0.6"/><text x="1501.7" y="174.3" font-size="13.5" fill="#eeeeee" textLength="43.3" lengthAdjust="spacingAndGlyphs">Wipeout</text><g fill="#3f3f3f" transform="translate(0.6,0.8)"><circle cx="1571" cy="136" r="5.2"/><circle cx="1579.5" cy="133.5" r="5.2"/><circle cx="1588" cy="136" r="5.2"/><circle cx="1570" cy="144" r="5.5"/><circle cx="1589" cy="144" r="5.5"/><circle cx="1574.5" cy="148" r="4.6"/><circle cx="1584.5" cy="148" r="4.6"/><circle cx="1579.5" cy="141" r="6.5"/></g><g fill="url(#gCloud)"><circle cx="1571" cy="136" r="5.2"/><circle cx="1579.5" cy="133.5" r="5.2"/><circle cx="1588" cy="136" r="5.2"/><circle cx="1570" cy="144" r="5.5"/><circle cx="1589" cy="144" r="5.5"/><circle cx="1574.5" cy="148" r="4.6"/><circle cx="1584.5" cy="148" r="4.6"/><circle cx="1579.5" cy="141" r="6.5"/></g><text x="1558.3" y="174.3" font-size="13.5" fill="#eeeeee" textLength="42.2" lengthAdjust="spacingAndGlyphs">Revision</text><text x="1564" y="190.2" font-size="13.5" fill="#eeeeee" textLength="31" lengthAdjust="spacingAndGlyphs">Cloud</text><path d="M1603.5,178 h5 l-2.5,3 z" fill="#f0f0f0"/><text x="1535.3" y="212.7" font-size="13.5" fill="#eeeeee" textLength="39.4" lengthAdjust="spacingAndGlyphs">Markup</text><g transform="translate(1661,142.5) scale(1)"><path d="M0,-15 C2,-10 4.6,-6 3.6,-1.5 C7,1.5 11.5,6 13.5,14 C9,10.5 4.5,8 0,6.2 C-4.5,8 -9,10.5 -13.5,14 C-11.5,6 -7,1.5 -3.6,-1.5 C-4.6,-6 -2,-10 0,-15 Z" fill="url(#gAnn)" stroke="#333" stroke-width="0.8"/></g><path d="M1648.5,132 h7 M1652,128.5 v7" stroke="#4da3ff" stroke-width="1.6"/><text x="1649.7" y="174.3" font-size="13.5" fill="#eeeeee" textLength="21" lengthAdjust="spacingAndGlyphs">Add</text><text x="1626.7" y="190.2" font-size="13.5" fill="#eeeeee" textLength="67.3" lengthAdjust="spacingAndGlyphs">Current Scale</text><path d="M1696.5,178 h5 l-2.5,3 z" fill="#f0f0f0"/><g transform="translate(1714.5,134) scale(0.5)"><path d="M0,-15 C2,-10 4.6,-6 3.6,-1.5 C7,1.5 11.5,6 13.5,14 C9,10.5 4.5,8 0,6.2 C-4.5,8 -9,10.5 -13.5,14 C-11.5,6 -7,1.5 -3.6,-1.5 C-4.6,-6 -2,-10 0,-15 Z" fill="#f0f0f0" stroke="#2a2a2a" stroke-width="0.8"/></g><rect x="1717.5" y="133" width="7" height="8" fill="#f4f4f4" stroke="#333" stroke-width="0.6"/><path d="M1718.5,135.5 h5 M1718.5,137.5 h5 M1718.5,139.5 h5 M1721,134 v7" stroke="#555" stroke-width="0.5"/><g transform="translate(1714.5,161) scale(0.5)"><path d="M0,-15 C2,-10 4.6,-6 3.6,-1.5 C7,1.5 11.5,6 13.5,14 C9,10.5 4.5,8 0,6.2 C-4.5,8 -9,10.5 -13.5,14 C-11.5,6 -7,1.5 -3.6,-1.5 C-4.6,-6 -2,-10 0,-15 Z" fill="#f0f0f0" stroke="#2a2a2a" stroke-width="0.8"/></g><rect x="1717.5" y="155" width="7" height="7" rx="1" fill="#f4f4f4" stroke="#333" stroke-width="0.6"/><path d="M1719,157 h4 v3 h-4z" fill="#777"/><g transform="translate(1720.5,181) scale(0.24)"><path d="M0,-15 C2,-10 4.6,-6 3.6,-1.5 C7,1.5 11.5,6 13.5,14 C9,10.5 4.5,8 0,6.2 C-4.5,8 -9,10.5 -13.5,14 C-11.5,6 -7,1.5 -3.6,-1.5 C-4.6,-6 -2,-10 0,-15 Z" fill="#f0f0f0" stroke="none" stroke-width="0.8"/></g><g transform="translate(1713.5,190) scale(0.24)"><path d="M0,-15 C2,-10 4.6,-6 3.6,-1.5 C7,1.5 11.5,6 13.5,14 C9,10.5 4.5,8 0,6.2 C-4.5,8 -9,10.5 -13.5,14 C-11.5,6 -7,1.5 -3.6,-1.5 C-4.6,-6 -2,-10 0,-15 Z" fill="#f0f0f0" stroke="none" stroke-width="0.8"/></g><path d="M1711,186 v-6.5 h4.5 M1716.5,179.5 l-2.5,-1.8 v3.6z" stroke="#e0e0e0" stroke-width="0.9" fill="#e0e0e0" stroke-dasharray="1.5 1"/><text x="1729" y="137.7" font-size="13.5" fill="#eeeeee" textLength="46.3" lengthAdjust="spacingAndGlyphs">Scale List</text><text x="1729" y="163.5" font-size="13.5" fill="#eeeeee" textLength="91.8" lengthAdjust="spacingAndGlyphs">Add/Delete Scales</text><text x="1729" y="189.7" font-size="13.5" fill="#eeeeee" textLength="102.3" lengthAdjust="spacingAndGlyphs">Sync Scale Positions</text><text x="1677.5" y="212.7" font-size="13.5" fill="#eeeeee" textLength="96.5" lengthAdjust="spacingAndGlyphs">Annotation Scaling</text><rect x="282" y="221.5" width="1844" height="30.3" fill="#3a3a3a" /><rect x="282" y="248" width="1844" height="3.8" fill="#5c5c5c" /><path d="M296,248.3 C303,248 303,240 306,230 C307.5,225.5 309,224.6 313,224.6 H411 C415,224.6 416.5,225.5 418,230 C420,240 420,248 426,248.3 Z" fill="url(#gTabI)"/><text x="312.6" y="241" font-size="13.5" fill="#b9b9b9" textLength="23.4" lengthAdjust="spacingAndGlyphs">Start</text><path d="M414,251 C424,248 423,240 426.5,230 C428,225.5 429.5,224.6 433.5,224.6 H664 C668,224.6 669.5,225.5 671,230 C674.5,240 673.5,248 683.5,251 Z" fill="url(#gTabA)"/><text x="430.7" y="241" font-size="13.5" fill="#f2f2f2" textLength="213.3" lengthAdjust="spacingAndGlyphs">J1212-2 GENERAL A...ENT OF STEELWORK*</text><path d="M653.8,233.5 l5.8,6 M659.6,233.5 l-5.8,6" stroke="#8e8e8e" stroke-width="1.6"/><path d="M679.5,228.7 H694 C699,229 700.5,236 700.8,243 Q700.8,244.3 699,244.3 H690 C683,244 681,236 679.5,228.7 Z" fill="#505050"/><path d="M686,236.7 h8 M690,232.7 v8" stroke="#d5d5d5" stroke-width="1.7"/><rect x="282.5" y="70.5" width="38.5" height="43" fill="url(#gApp)" stroke="#111" stroke-width="1.2"/><path d="M286.8,100.8 L296.8,73.8 H303.4 L309.6,100.8 H304.2 L302.6,94 H294.8 L292.2,100.8 Z M296.2,90 H301.8 L299.6,79.5 Z" fill="url(#gRedA)" fill-rule="evenodd"/><path d="M296.8,73.8 L299.6,79.5 L296.2,90 L294.8,94 L292.2,100.8 H289.5 L298.5,76 Z" fill="#f05a55" opacity="0.55"/><path d="M312.3,90.3 h6.2 l-3.1,3.6z" fill="#1b2230"/><path d="M330.5,77 H340.5 L345,81.5 V89.3 H330.5 Z" fill="#f7f7f9" stroke="#2c2c2c" stroke-width="0.8"/><path d="M340.5,77 V81.5 H345" fill="#d5d8e0" stroke="#2c2c2c" stroke-width="0.6"/><path d="M354,88 V78.5 H358.5 L360,80 H365.5 V82" fill="none" stroke="#f0f0f0" stroke-width="1.2"/><path d="M354,88 L357.5,82 H368.5 L365,88 Z" fill="#f2f2f2" stroke="#2c2c2c" stroke-width="0.6"/><rect x="378" y="75.5" width="12" height="13" rx="1" fill="#cfd6e4" stroke="#1d2433" stroke-width="0.9"/><rect x="380.5" y="76" width="7" height="5" fill="#f9f9f9"/><rect x="380.5" y="83.5" width="7" height="5" fill="#30394d"/><rect x="382" y="84.5" width="2.2" height="3" fill="#e9e9e9"/><rect x="399.5" y="75.5" width="12" height="13" rx="1" fill="#cfd6e4" stroke="#1d2433" stroke-width="0.9"/><rect x="402.0" y="76" width="7" height="5" fill="#f9f9f9"/><rect x="402.0" y="83.5" width="7" height="5" fill="#30394d"/><rect x="403.5" y="84.5" width="2.2" height="3" fill="#e9e9e9"/><path d="M406,85 l6.5,-8 l2,1.6 l-6.5,8 l-2.6,0.8z" fill="#f5a623" stroke="#7a4b00" stroke-width="0.5"/><rect x="426" y="75.5" width="8" height="4.5" fill="#f8f8f8" stroke="#333" stroke-width="0.6"/><rect x="422.8" y="79.5" width="14.5" height="7" rx="1.2" fill="#e4e4e6" stroke="#333" stroke-width="0.7"/><rect x="425.5" y="84.5" width="9" height="4.5" fill="#fdfdfd" stroke="#333" stroke-width="0.6"/><path d="M427,86.5 h6" stroke="#7aa7e0" stroke-width="0.8"/><path d="M445.3,81.5 L451.5,76.5 V79.6 C457,79.6 459.5,83 459.5,88 C458,84.8 456,83.6 451.5,83.6 V86.5 Z" fill="#f4f4f4" stroke="#333" stroke-width="0.6"/><path d="M467.4,81.6 h4.6 l-2.3,2.8 z" fill="#e8e8e8"/><path d="M494.5,81.5 L488.3,76.5 V79.6 C482.8,79.6 480.3,83 480.3,88 C481.8,84.8 483.8,83.6 488.3,83.6 V86.5 Z" fill="#8a8a8a" stroke="#666" stroke-width="0.5"/><path d="M501.7,81.6 h4.6 l-2.3,2.8 z" fill="#b0b0b0"/><path d="M514,78.8 h8.5" stroke="#f0f0f0" stroke-width="1.6"/><path d="M514.2,81.9 h8 l-4,4.2 z" fill="#f0f0f0"/><rect x="1731" y="79" width="5.5" height="10" rx="1.5" fill="#f4f4f4" stroke="#222" stroke-width="0.7"/><rect x="1739.5" y="79" width="5.5" height="10" rx="1.5" fill="#f4f4f4" stroke="#222" stroke-width="0.7"/><rect x="1732.5" y="75.5" width="3.5" height="4.5" rx="1" fill="#f4f4f4" stroke="#222" stroke-width="0.6"/><rect x="1740" y="75.5" width="3.5" height="4.5" rx="1" fill="#f4f4f4" stroke="#222" stroke-width="0.6"/><rect x="1736.3" y="80" width="3.4" height="3" fill="#222"/><path d="M1753.5,90.5 C1754,86 1757,85.5 1760.5,84.5 C1764,85.5 1767,86 1767.5,90.5 Z" fill="#f4f4f4" stroke="#222" stroke-width="0.7"/><ellipse cx="1760.5" cy="79.5" rx="3.6" ry="4.6" fill="#f4f4f4" stroke="#222" stroke-width="0.7"/><path d="M1871.5,77 h4.2 l2.6,3.6 l2.6,-3.6 h4 l-4.6,6 l4.6,6 h-4 l-2.6,-3.6 l-2.6,3.6 h-4.2 l4.7,-6z" fill="#3c55b5" stroke="#dfe5fb" stroke-width="0.7"/><path d="M1901,77.5 L1895.5,88 H1906.5 Z" fill="none" stroke="#2c3f93" stroke-width="3"/><path d="M1901,77.5 L1895.5,88 H1906.5 Z" fill="none" stroke="#e8ecfb" stroke-width="1"/><circle cx="1901" cy="77" r="1.7" fill="#fff" stroke="#2c3f93" stroke-width="0.6"/><circle cx="1895.3" cy="88" r="1.7" fill="#fff" stroke="#2c3f93" stroke-width="0.6"/><circle cx="1906.7" cy="88" r="1.7" fill="#fff" stroke="#2c3f93" stroke-width="0.6"/><ellipse cx="1945.2" cy="82.7" rx="6.8" ry="8" fill="#f6f6f8" stroke="#1c1c2a" stroke-width="1"/><text x="1941.7" y="87.3" font-size="13" fill="#16309a" textLength="7" lengthAdjust="spacingAndGlyphs" font-weight="bold">?</text><text x="285.5" y="271.2" font-size="13.5" fill="#e8e8e8" textLength="119" lengthAdjust="spacingAndGlyphs">[−][Top][2D Wireframe]</text><rect x="282" y="1199.7" width="1844" height="30.5" fill="#3a3a3a" /><rect x="282" y="1199.7" width="1844" height="1" fill="#555555" /><rect x="282" y="1230" width="1844" height="1.8" fill="#f4f4f4" /><rect x="282" y="1231.8" width="1844" height="0.8" fill="#3a1515" /><path d="M286,1200.5 C293,1200.5 294,1204 296,1210 C298,1216 299,1218.8 304,1218.8 H340 C345,1218.8 346,1216 348,1210 C350,1204 351,1200.5 356,1200.5 Z" fill="url(#gMod)"/><path d="M349,1200.5 C353,1200.5 353,1204 355,1210 C357,1216 358,1218.8 363,1218.8 H402 C407,1218.8 408,1216 410,1210 C412,1204 413,1200.5 420,1200.5 Z" fill="url(#gLay)"/><path d="M421,1200.5 H438 C437,1208 436,1217.5 428,1217.5 H415 C418,1213 419,1205 421,1200.5 Z" fill="#4b4b4b"/><text x="304.5" y="1213.7" font-size="14" fill="#ffffff" textLength="33.5" lengthAdjust="spacingAndGlyphs" font-weight="bold">Model</text><text x="360.4" y="1213.7" font-size="14" fill="#cfcfcf" textLength="38.6" lengthAdjust="spacingAndGlyphs">Layout1</text><path d="M422,1209.5 h8 M426,1205.5 v8" stroke="#dadada" stroke-width="1.7"/><rect x="1559.5" y="1201.5" width="46.0" height="27" fill="#525252" stroke="#686868" stroke-width="1"/><rect x="1608" y="1201.5" width="61.5" height="27" fill="#525252" stroke="#686868" stroke-width="1"/><rect x="1671.7" y="1201.5" width="97.79999999999995" height="27" fill="#525252" stroke="#686868" stroke-width="1"/><rect x="1771" y="1201.5" width="60.700000000000045" height="27" fill="#525252" stroke="#686868" stroke-width="1"/><rect x="1833.7" y="1201.5" width="101.29999999999995" height="27" fill="#525252" stroke="#686868" stroke-width="1"/><rect x="1937.5" y="1201.5" width="37.5" height="27" fill="#525252" stroke="#686868" stroke-width="1"/><rect x="1976" y="1201.5" width="23.5" height="27" fill="#525252" stroke="#686868" stroke-width="1"/><rect x="2001.7" y="1201.5" width="23.799999999999955" height="27" fill="#525252" stroke="#686868" stroke-width="1"/><rect x="2027.5" y="1201.5" width="23.5" height="27" fill="#525252" stroke="#686868" stroke-width="1"/><rect x="2053" y="1201.5" width="23" height="27" fill="#525252" stroke="#686868" stroke-width="1"/><rect x="2077.5" y="1201.5" width="47.5" height="27" fill="#525252" stroke="#686868" stroke-width="1"/><text x="1563.7" y="1219.5" font-size="14" fill="#f2f2f2" textLength="39" lengthAdjust="spacingAndGlyphs">MODEL</text><line x1="1614.5" y1="1207" x2="1614.5" y2="1222" stroke="#d8d8d8" stroke-width="1" /><line x1="1617.5" y1="1207" x2="1617.5" y2="1222" stroke="#d8d8d8" stroke-width="1" /><line x1="1620.5" y1="1207" x2="1620.5" y2="1222" stroke="#d8d8d8" stroke-width="1" /><line x1="1623.5" y1="1207" x2="1623.5" y2="1222" stroke="#d8d8d8" stroke-width="1" /><line x1="1626.5" y1="1207" x2="1626.5" y2="1222" stroke="#d8d8d8" stroke-width="1" /><line x1="1613" y1="1208.5" x2="1628" y2="1208.5" stroke="#9a9a9a" stroke-width="0.6" /><line x1="1613" y1="1211.5" x2="1628" y2="1211.5" stroke="#9a9a9a" stroke-width="0.6" /><line x1="1613" y1="1214.5" x2="1628" y2="1214.5" stroke="#9a9a9a" stroke-width="0.6" /><line x1="1613" y1="1217.5" x2="1628" y2="1217.5" stroke="#9a9a9a" stroke-width="0.6" /><line x1="1613" y1="1220.5" x2="1628" y2="1220.5" stroke="#9a9a9a" stroke-width="0.6" /><rect x="1635" y="1207" width="15" height="15" fill="none" stroke="#d0d0d0" stroke-width="1.1" stroke-dasharray="1 2"/><line x1="1638.5" y1="1207.5" x2="1638.5" y2="1222" stroke="#c8c8c8" stroke-width="1" stroke-dasharray="1 2"/><line x1="1641.5" y1="1207.5" x2="1641.5" y2="1222" stroke="#c8c8c8" stroke-width="1" stroke-dasharray="1 2"/><line x1="1644.5" y1="1207.5" x2="1644.5" y2="1222" stroke="#c8c8c8" stroke-width="1" stroke-dasharray="1 2"/><line x1="1647.5" y1="1207.5" x2="1647.5" y2="1222" stroke="#c8c8c8" stroke-width="1" stroke-dasharray="1 2"/><path d="M1658.7,1213.25 h6 l-3,3.5 z" fill="#f0f0f0"/><path d="M1677.5,1206 V1221 H1690 M1681.5,1214 v3 h3" stroke="#2f8cff" stroke-width="1.6" fill="none"/><circle cx="1705.5" cy="1214.5" r="6.5" fill="none" stroke="#d0d0d0" stroke-width="1.4"/><path d="M1705.5,1214.5 h8 M1705.5,1214.5 l5,-6" stroke="#d0d0d0" stroke-width="1.2"/><path d="M1722,1213.25 h6 l-3,3.5 z" fill="#f0f0f0"/><path d="M1744.5,1204 V1225 M1736.5,1205.5 L1752.5,1223" stroke="#c8c8c8" stroke-width="1.2"/><path d="M1759.5,1213.25 h6 l-3,3.5 z" fill="#f0f0f0"/><path d="M1774,1222 H1790 M1774,1222 L1788,1208" stroke="#2f8cff" stroke-width="1.7" fill="none"/><path d="M1781,1222 a8,8 0 0 0 -2.5,-5.2" stroke="#2f8cff" stroke-width="1" fill="none"/><rect x="1800" y="1208.5" width="12" height="13" fill="none" stroke="#e0e0e0" stroke-width="1.3"/><rect x="1798.3" y="1206.3" width="4" height="4" fill="#19d419" stroke="#0a0a0a" stroke-width="0.5"/><path d="M1820.7,1213.25 h6 l-3,3.5 z" fill="#f0f0f0"/><g transform="translate(1845,1216) scale(0.566667)"><path d="M0,-15 C2,-10 4.6,-6 3.6,-1.5 C7,1.5 11.5,6 13.5,14 C9,10.5 4.5,8 0,6.2 C-4.5,8 -9,10.5 -13.5,14 C-11.5,6 -7,1.5 -3.6,-1.5 C-4.6,-6 -2,-10 0,-15 Z" fill="#2f8cff" stroke="none" stroke-width="1"/></g><circle cx="1849.5" cy="1209" r="2.6" fill="#525252" stroke="#2f8cff" stroke-width="1.2"/><g transform="translate(1868,1216) scale(0.566667)"><path d="M0,-15 C2,-10 4.6,-6 3.6,-1.5 C7,1.5 11.5,6 13.5,14 C9,10.5 4.5,8 0,6.2 C-4.5,8 -9,10.5 -13.5,14 C-11.5,6 -7,1.5 -3.6,-1.5 C-4.6,-6 -2,-10 0,-15 Z" fill="#c4c4c4" stroke="none" stroke-width="1"/></g><path d="M1873,1205.5 l-3,4.5 h2.3 l-1.6,4 l4.5,-5.5 h-2.3 l1.8,-3z" fill="#e8e8e8" stroke="#525252" stroke-width="0.4"/><g transform="translate(1892,1216) scale(0.566667)"><path d="M0,-15 C2,-10 4.6,-6 3.6,-1.5 C7,1.5 11.5,6 13.5,14 C9,10.5 4.5,8 0,6.2 C-4.5,8 -9,10.5 -13.5,14 C-11.5,6 -7,1.5 -3.6,-1.5 C-4.6,-6 -2,-10 0,-15 Z" fill="#c4c4c4" stroke="none" stroke-width="1"/></g><text x="1908" y="1219.5" font-size="14" fill="#f2f2f2" textLength="12.5" lengthAdjust="spacingAndGlyphs">1:1</text><path d="M1925,1213.25 h6 l-3,3.5 z" fill="#f0f0f0"/><circle cx="1948.7" cy="1214.5" r="4.6" fill="#d0d0d0"/><rect x="-1.5" y="-7" width="3" height="3.4" fill="#d0d0d0" transform="translate(1948.7,1214.5) rotate(0)"/><rect x="-1.5" y="-7" width="3" height="3.4" fill="#d0d0d0" transform="translate(1948.7,1214.5) rotate(45)"/><rect x="-1.5" y="-7" width="3" height="3.4" fill="#d0d0d0" transform="translate(1948.7,1214.5) rotate(90)"/><rect x="-1.5" y="-7" width="3" height="3.4" fill="#d0d0d0" transform="translate(1948.7,1214.5) rotate(135)"/><rect x="-1.5" y="-7" width="3" height="3.4" fill="#d0d0d0" transform="translate(1948.7,1214.5) rotate(180)"/><rect x="-1.5" y="-7" width="3" height="3.4" fill="#d0d0d0" transform="translate(1948.7,1214.5) rotate(225)"/><rect x="-1.5" y="-7" width="3" height="3.4" fill="#d0d0d0" transform="translate(1948.7,1214.5) rotate(270)"/><rect x="-1.5" y="-7" width="3" height="3.4" fill="#d0d0d0" transform="translate(1948.7,1214.5) rotate(315)"/><circle cx="1948.7" cy="1214.5" r="1.9" fill="#525252"/><path d="M1965,1213.25 h6 l-3,3.5 z" fill="#f0f0f0"/><path d="M1980,1214.5 h15 M1987.5,1207 v15" stroke="#f0f0f0" stroke-width="1.6"/><rect x="2006.5" y="1206" width="6" height="6" fill="none" stroke="#d8d8d8" stroke-width="1.2"/><circle cx="2018.5" cy="1213" r="3" fill="none" stroke="#d8d8d8" stroke-width="1.2"/><path d="M2008,1222.5 l4,-6.5 l4,6.5z" fill="none" stroke="#d8d8d8" stroke-width="1.2"/><circle cx="2039.5" cy="1214.5" r="7.8" fill="#1b3f73" stroke="#2f8cff" stroke-width="1.6"/><path d="M2037,1217.5 l5.5,-5" stroke="#2f8cff" stroke-width="1.4"/><rect x="2058" y="1211" width="11" height="8" fill="#f1c232" stroke="#8a6d0a" stroke-width="0.5"/><rect x="2061" y="1205.5" width="7" height="7" fill="#dfe8f5" stroke="#6d87b0" stroke-width="0.6"/><circle cx="2060" cy="1207.5" r="2" fill="none" stroke="#e8e8e8" stroke-width="1"/><path d="M2063,1219 l2.5,2.8 l5,-6" stroke="#3fae2a" stroke-width="1.8" fill="none"/><rect x="2081.5" y="1207.5" width="15" height="13" fill="none" stroke="#e0e0e0" stroke-width="1.3"/><path d="M2084.5,1217.5 l3.5,-3.5 M2084.5,1217.5 v-3 M2084.5,1217.5 h3 M2093.5,1210.5 l-3.5,3.5 M2093.5,1210.5 v3 M2093.5,1210.5 h-3" stroke="#e0e0e0" stroke-width="1.1" fill="none"/><path d="M2105.5,1208.5 h14.5 M2105.5,1214.5 h14.5 M2105.5,1220.5 h14.5" stroke="#ededed" stroke-width="2"/><rect x="2118.2" y="251.8" width="7" height="948" fill="#bad0ec" /><rect x="2118.2" y="251.8" width="7" height="96" fill="#d3e4f8" /><rect x="2118.2" y="251.8" width="1.4" height="948" fill="#d2e4fb" /><rect x="2123.9" y="251.8" width="1.3" height="948" fill="#52ccfb" /></g><g id="drawing"><g shape-rendering="auto"><path d="M1772,256 H641 V1188.5" fill="none" stroke="#cc0000" stroke-width="1.4"/><path d="M641,1188.5 H1772 V256" fill="none" stroke="#d40000" stroke-width="1.4"/><path d="M1632.8,1189 V932 H1772 M1632.8,980.5 H1772 M1632.8,1033.4 H1772 M1632.8,1098 H1772 M1632.8,1140.6 H1772 M1632.8,1156.6 H1772 M1632.8,1172.6 H1772 M1704.2,1140.6 V1189 M1518.6,1189 V1066.6 H1632.8" fill="none" stroke="#d80000" stroke-width="1.25"/><text x="1635.5" y="939.5" font-size="6.5" fill="#00ff00" textLength="24.5" lengthAdjust="spacingAndGlyphs" font-weight="bold">REVISIONS</text><path d="M1633,941.3 H1772 M1633,947.2 H1772 M1642,941.3 V980 M1662,941.3 V980 M1673,941.3 V980" fill="none" stroke="#f2f200" stroke-width="1.1"/><text x="1634.5" y="946.3" font-size="4.5" fill="#00ff00" textLength="6.5" lengthAdjust="spacingAndGlyphs" font-weight="bold">NO.</text><text x="1643.5" y="946.3" font-size="4.5" fill="#00ff00" textLength="9.5" lengthAdjust="spacingAndGlyphs" font-weight="bold">DATE</text><text x="1664" y="946.3" font-size="4.5" fill="#00ff00" textLength="5.5" lengthAdjust="spacingAndGlyphs" font-weight="bold">BY</text><text x="1675" y="946.3" font-size="4.5" fill="#00ff00" textLength="24" lengthAdjust="spacingAndGlyphs" font-weight="bold">DESCRIPTION</text><rect x="1635.3" y="986.6" width="135" height="32.4" fill="#ffffff" /><text y="1010.6" font-size="27.8" font-weight="bold" fill="#0f4063"><tspan x="1637.5" textLength="58" lengthAdjust="spacingAndGlyphs">CIVIL</tspan><tspan x="1699.6" font-weight="normal" fill="#c3cfda" textLength="23" lengthAdjust="spacingAndGlyphs">M</tspan><tspan x="1730.3" textLength="32" lengthAdjust="spacingAndGlyphs">AX</tspan></text><path d="M1696.3,1004.4 L1700.6,991.2 H1706 L1701.6,1004.4 Z" fill="#8a9a2a"/><path d="M1696.7,1006.2 H1706 L1699.4,1010.6 Z" fill="#1a6a8c"/><path d="M1701,991.2 H1707.5 L1713.7,1010.6 H1709.4 Z" fill="#17507a"/><path d="M1709.4,1010.6 L1715.6,991.2 H1720.6 L1714.2,1010.6 Z" fill="#2d7d32"/><path d="M1716.5,991.2 H1721 L1730,1010.6 H1724.4 Z" fill="#10406a"/><text x="1688.4" y="1017.6" font-size="5.2" fill="#5a5a5a" textLength="74" lengthAdjust="spacingAndGlyphs">ENGINEER'S KNOWLEDGE BASE</text><text x="1639" y="1039.2" font-size="3.6" fill="#f2f200" textLength="12.6" lengthAdjust="spacingAndGlyphs" font-weight="bold">PROJECT</text><text x="1635.7" y="1048.9" font-size="7.2" fill="#a6a6a6" textLength="125.4" lengthAdjust="spacingAndGlyphs">PROPOSED 36M LONG  FOOT  BRIDGE</text><text x="1635.7" y="1058.6" font-size="7.2" fill="#a6a6a6" textLength="66" lengthAdjust="spacingAndGlyphs">AT   BONDO  RIVER.</text><text x="1639" y="1103" font-size="3.6" fill="#f2f200" textLength="21" lengthAdjust="spacingAndGlyphs" font-weight="bold">DRAWING TITLE</text><text x="1638.9" y="1110.6" font-size="7.2" fill="#a6a6a6" textLength="100.2" lengthAdjust="spacingAndGlyphs">GENERAL   ARRANGEMENT OF</text><text x="1638.9" y="1118.9" font-size="7.2" fill="#a6a6a6" textLength="43.1" lengthAdjust="spacingAndGlyphs">STEELWORK.</text><text x="1639" y="1145.6" font-size="3.6" fill="#f2f200" textLength="8.7" lengthAdjust="spacingAndGlyphs" font-weight="bold">SCALE</text><text x="1710.2" y="1146.8" font-size="3.6" fill="#f2f200" textLength="14.4" lengthAdjust="spacingAndGlyphs" font-weight="bold">APPROVED</text><text x="1639" y="1161.6" font-size="3.6" fill="#f2f200" textLength="7" lengthAdjust="spacingAndGlyphs" font-weight="bold">DATE</text><text x="1710.2" y="1162.8" font-size="3.6" fill="#f2f200" textLength="10.6" lengthAdjust="spacingAndGlyphs" font-weight="bold">DRAWN</text><text x="1639" y="1178.5" font-size="3.6" fill="#f2f200" textLength="19.5" lengthAdjust="spacingAndGlyphs" font-weight="bold">DRAWING No.</text><text x="1710.2" y="1178.8" font-size="3.6" fill="#f2f200" textLength="15.5" lengthAdjust="spacingAndGlyphs" font-weight="bold">CHECKED</text><text x="1652.6" y="1152.3" font-size="5" fill="#00ff00" textLength="13.4" lengthAdjust="spacingAndGlyphs" font-weight="bold">VARIES</text><text x="1652.6" y="1168.5" font-size="5" fill="#00ff00" textLength="22.3" lengthAdjust="spacingAndGlyphs" font-weight="bold">FEB.  2010</text><text x="1736" y="1169.4" font-size="5" fill="#00ff00" textLength="19.4" lengthAdjust="spacingAndGlyphs" font-weight="bold">GANGURU</text><text x="1656.3" y="1185.6" font-size="7.4" fill="#a6a6a6" textLength="28.5" lengthAdjust="spacingAndGlyphs">J1212B-2</text><text x="1534.2" y="1075.7" font-size="8.6" fill="#00ff00" textLength="50.3" lengthAdjust="spacingAndGlyphs" font-weight="bold">FABRICATION</text><line x1="1534.2" y1="1077.1" x2="1584.5" y2="1077.1" stroke="#00ff00" stroke-width="1" /><text x="1534.2" y="1084.6" font-size="8.6" fill="#00ff00" textLength="24.9" lengthAdjust="spacingAndGlyphs" font-weight="bold">NOTES</text><line x1="1534.2" y1="1086.6" x2="1559.1" y2="1086.6" stroke="#00ff00" stroke-width="1" /><rect x="1534.2" y="1093" width="67.8" height="5.6" fill="#00ff00" /><rect x="1534.2" y="1100" width="65.8" height="4.8" fill="#00ff00" /><rect x="1534.2" y="1106.3" width="33.8" height="5.1" fill="#00ff00" /><rect x="1534.2" y="1171.9" width="59.8" height="5.3" fill="#00ff00" /><text x="1534.2" y="1124.6" font-size="5.9" fill="#10dc10" textLength="71.8" lengthAdjust="spacingAndGlyphs">B) PAINT RED OXIDE   PRIMER</text><text x="1534.2" y="1131.9" font-size="5.9" fill="#10dc10" textLength="67.2" lengthAdjust="spacingAndGlyphs">PRIOR TO DESPATCH &amp; ONE</text><text x="1534.2" y="1138.3" font-size="5.9" fill="#10dc10" textLength="55.6" lengthAdjust="spacingAndGlyphs">COAT OF GLOSS PAINT</text><text x="1534.2" y="1151.3" font-size="5.9" fill="#10dc10" textLength="64.7" lengthAdjust="spacingAndGlyphs">C) ALL SHOP WELDS TO BE</text><text x="1534.2" y="1157.7" font-size="5.9" fill="#10dc10" textLength="67.8" lengthAdjust="spacingAndGlyphs">6MM FILLET WELDS UNLESS</text><text x="1534.2" y="1164.3" font-size="5.9" fill="#10dc10" textLength="47.6" lengthAdjust="spacingAndGlyphs">OTHERWISE NOTED</text><line x1="700.6" y1="276.2" x2="1575.8" y2="276.2" stroke="#dadada" stroke-width="1.7" /><line x1="703.8" y1="272.6" x2="703.8" y2="278.2" stroke="#dadada" stroke-width="1.5" /><path d="M702.1,277.9 L705.5,274.5" stroke="#dadada" stroke-width="1.3"/><line x1="1572.6" y1="272.6" x2="1572.6" y2="278.2" stroke="#dadada" stroke-width="1.5" /><path d="M1570.9,277.9 L1574.3,274.5" stroke="#dadada" stroke-width="1.3"/><rect x="1132.5" y="268.75" width="12" height="5.5" fill="#00ff00"/><line x1="700.6" y1="292.5" x2="1575.8" y2="292.5" stroke="#dadada" stroke-width="1.7" /><line x1="703.8" y1="288.9" x2="703.8" y2="294.5" stroke="#dadada" stroke-width="1.5" /><path d="M702.1,294.2 L705.5,290.8" stroke="#dadada" stroke-width="1.3"/><line x1="848.6" y1="288.9" x2="848.6" y2="294.5" stroke="#dadada" stroke-width="1.5" /><path d="M846.9,294.2 L850.3,290.8" stroke="#dadada" stroke-width="1.3"/><line x1="993.4" y1="288.9" x2="993.4" y2="294.5" stroke="#dadada" stroke-width="1.5" /><path d="M991.7,294.2 L995.1,290.8" stroke="#dadada" stroke-width="1.3"/><line x1="1138.2" y1="288.9" x2="1138.2" y2="294.5" stroke="#dadada" stroke-width="1.5" /><path d="M1136.5,294.2 L1139.9,290.8" stroke="#dadada" stroke-width="1.3"/><line x1="1283" y1="288.9" x2="1283" y2="294.5" stroke="#dadada" stroke-width="1.5" /><path d="M1281.3,294.2 L1284.7,290.8" stroke="#dadada" stroke-width="1.3"/><line x1="1427.8" y1="288.9" x2="1427.8" y2="294.5" stroke="#dadada" stroke-width="1.5" /><path d="M1426.1,294.2 L1429.5,290.8" stroke="#dadada" stroke-width="1.3"/><line x1="1572.6" y1="288.9" x2="1572.6" y2="294.5" stroke="#dadada" stroke-width="1.5" /><path d="M1570.9,294.2 L1574.3,290.8" stroke="#dadada" stroke-width="1.3"/><rect x="771.7" y="284.65" width="10" height="5.9" fill="#00ff00"/><rect x="916.5" y="284.65" width="10" height="5.9" fill="#00ff00"/><rect x="1061.3" y="284.65" width="10" height="5.9" fill="#00ff00"/><rect x="1206.1" y="284.65" width="10" height="5.9" fill="#00ff00"/><rect x="1350.9" y="284.65" width="10" height="5.9" fill="#00ff00"/><rect x="1495.7" y="284.65" width="10" height="5.9" fill="#00ff00"/><line x1="700.6" y1="307.5" x2="1575.8" y2="307.5" stroke="#dadada" stroke-width="1.7" /><line x1="703.8" y1="303.9" x2="703.8" y2="309.5" stroke="#dadada" stroke-width="1.5" /><path d="M702.1,309.2 L705.5,305.8" stroke="#dadada" stroke-width="1.3"/><line x1="727.933" y1="303.9" x2="727.933" y2="309.5" stroke="#dadada" stroke-width="1.5" /><path d="M726.233,309.2 L729.633,305.8" stroke="#dadada" stroke-width="1.3"/><line x1="752.067" y1="303.9" x2="752.067" y2="309.5" stroke="#dadada" stroke-width="1.5" /><path d="M750.367,309.2 L753.767,305.8" stroke="#dadada" stroke-width="1.3"/><line x1="776.2" y1="303.9" x2="776.2" y2="309.5" stroke="#dadada" stroke-width="1.5" /><path d="M774.5,309.2 L777.9,305.8" stroke="#dadada" stroke-width="1.3"/><line x1="800.333" y1="303.9" x2="800.333" y2="309.5" stroke="#dadada" stroke-width="1.5" /><path d="M798.633,309.2 L802.033,305.8" stroke="#dadada" stroke-width="1.3"/><line x1="824.467" y1="303.9" x2="824.467" y2="309.5" stroke="#dadada" stroke-width="1.5" /><path d="M822.767,309.2 L826.167,305.8" stroke="#dadada" stroke-width="1.3"/><line x1="848.6" y1="303.9" x2="848.6" y2="309.5" stroke="#dadada" stroke-width="1.5" /><path d="M846.9,309.2 L850.3,305.8" stroke="#dadada" stroke-width="1.3"/><line x1="872.733" y1="303.9" x2="872.733" y2="309.5" stroke="#dadada" stroke-width="1.5" /><path d="M871.033,309.2 L874.433,305.8" stroke="#dadada" stroke-width="1.3"/><line x1="896.867" y1="303.9" x2="896.867" y2="309.5" stroke="#dadada" stroke-width="1.5" /><path d="M895.167,309.2 L898.567,305.8" stroke="#dadada" stroke-width="1.3"/><line x1="921" y1="303.9" x2="921" y2="309.5" stroke="#dadada" stroke-width="1.5" /><path d="M919.3,309.2 L922.7,305.8" stroke="#dadada" stroke-width="1.3"/><line x1="945.133" y1="303.9" x2="945.133" y2="309.5" stroke="#dadada" stroke-width="1.5" /><path d="M943.433,309.2 L946.833,305.8" stroke="#dadada" stroke-width="1.3"/><line x1="969.267" y1="303.9" x2="969.267" y2="309.5" stroke="#dadada" stroke-width="1.5" /><path d="M967.567,309.2 L970.967,305.8" stroke="#dadada" stroke-width="1.3"/><line x1="993.4" y1="303.9" x2="993.4" y2="309.5" stroke="#dadada" stroke-width="1.5" /><path d="M991.7,309.2 L995.1,305.8" stroke="#dadada" stroke-width="1.3"/><line x1="1017.53" y1="303.9" x2="1017.53" y2="309.5" stroke="#dadada" stroke-width="1.5" /><path d="M1015.83,309.2 L1019.23,305.8" stroke="#dadada" stroke-width="1.3"/><line x1="1041.67" y1="303.9" x2="1041.67" y2="309.5" stroke="#dadada" stroke-width="1.5" /><path d="M1039.97,309.2 L1043.37,305.8" stroke="#dadada" stroke-width="1.3"/><line x1="1065.8" y1="303.9" x2="1065.8" y2="309.5" stroke="#dadada" stroke-width="1.5" /><path d="M1064.1,309.2 L1067.5,305.8" stroke="#dadada" stroke-width="1.3"/><line x1="1089.93" y1="303.9" x2="1089.93" y2="309.5" stroke="#dadada" stroke-width="1.5" /><path d="M1088.23,309.2 L1091.63,305.8" stroke="#dadada" stroke-width="1.3"/><line x1="1114.07" y1="303.9" x2="1114.07" y2="309.5" stroke="#dadada" stroke-width="1.5" /><path d="M1112.37,309.2 L1115.77,305.8" stroke="#dadada" stroke-width="1.3"/><line x1="1138.2" y1="303.9" x2="1138.2" y2="309.5" stroke="#dadada" stroke-width="1.5" /><path d="M1136.5,309.2 L1139.9,305.8" stroke="#dadada" stroke-width="1.3"/><line x1="1162.33" y1="303.9" x2="1162.33" y2="309.5" stroke="#dadada" stroke-width="1.5" /><path d="M1160.63,309.2 L1164.03,305.8" stroke="#dadada" stroke-width="1.3"/><line x1="1186.47" y1="303.9" x2="1186.47" y2="309.5" stroke="#dadada" stroke-width="1.5" /><path d="M1184.77,309.2 L1188.17,305.8" stroke="#dadada" stroke-width="1.3"/><line x1="1210.6" y1="303.9" x2="1210.6" y2="309.5" stroke="#dadada" stroke-width="1.5" /><path d="M1208.9,309.2 L1212.3,305.8" stroke="#dadada" stroke-width="1.3"/><line x1="1234.73" y1="303.9" x2="1234.73" y2="309.5" stroke="#dadada" stroke-width="1.5" /><path d="M1233.03,309.2 L1236.43,305.8" stroke="#dadada" stroke-width="1.3"/><line x1="1258.87" y1="303.9" x2="1258.87" y2="309.5" stroke="#dadada" stroke-width="1.5" /><path d="M1257.17,309.2 L1260.57,305.8" stroke="#dadada" stroke-width="1.3"/><line x1="1283" y1="303.9" x2="1283" y2="309.5" stroke="#dadada" stroke-width="1.5" /><path d="M1281.3,309.2 L1284.7,305.8" stroke="#dadada" stroke-width="1.3"/><line x1="1307.13" y1="303.9" x2="1307.13" y2="309.5" stroke="#dadada" stroke-width="1.5" /><path d="M1305.43,309.2 L1308.83,305.8" stroke="#dadada" stroke-width="1.3"/><line x1="1331.27" y1="303.9" x2="1331.27" y2="309.5" stroke="#dadada" stroke-width="1.5" /><path d="M1329.57,309.2 L1332.97,305.8" stroke="#dadada" stroke-width="1.3"/><line x1="1355.4" y1="303.9" x2="1355.4" y2="309.5" stroke="#dadada" stroke-width="1.5" /><path d="M1353.7,309.2 L1357.1,305.8" stroke="#dadada" stroke-width="1.3"/><line x1="1379.53" y1="303.9" x2="1379.53" y2="309.5" stroke="#dadada" stroke-width="1.5" /><path d="M1377.83,309.2 L1381.23,305.8" stroke="#dadada" stroke-width="1.3"/><line x1="1403.67" y1="303.9" x2="1403.67" y2="309.5" stroke="#dadada" stroke-width="1.5" /><path d="M1401.97,309.2 L1405.37,305.8" stroke="#dadada" stroke-width="1.3"/><line x1="1427.8" y1="303.9" x2="1427.8" y2="309.5" stroke="#dadada" stroke-width="1.5" /><path d="M1426.1,309.2 L1429.5,305.8" stroke="#dadada" stroke-width="1.3"/><line x1="1451.93" y1="303.9" x2="1451.93" y2="309.5" stroke="#dadada" stroke-width="1.5" /><path d="M1450.23,309.2 L1453.63,305.8" stroke="#dadada" stroke-width="1.3"/><line x1="1476.07" y1="303.9" x2="1476.07" y2="309.5" stroke="#dadada" stroke-width="1.5" /><path d="M1474.37,309.2 L1477.77,305.8" stroke="#dadada" stroke-width="1.3"/><line x1="1500.2" y1="303.9" x2="1500.2" y2="309.5" stroke="#dadada" stroke-width="1.5" /><path d="M1498.5,309.2 L1501.9,305.8" stroke="#dadada" stroke-width="1.3"/><line x1="1524.33" y1="303.9" x2="1524.33" y2="309.5" stroke="#dadada" stroke-width="1.5" /><path d="M1522.63,309.2 L1526.03,305.8" stroke="#dadada" stroke-width="1.3"/><line x1="1548.47" y1="303.9" x2="1548.47" y2="309.5" stroke="#dadada" stroke-width="1.5" /><path d="M1546.77,309.2 L1550.17,305.8" stroke="#dadada" stroke-width="1.3"/><line x1="1572.6" y1="303.9" x2="1572.6" y2="309.5" stroke="#dadada" stroke-width="1.5" /><path d="M1570.9,309.2 L1574.3,305.8" stroke="#dadada" stroke-width="1.3"/><rect x="710.817" y="299.75" width="10.1" height="5.7" fill="#00ff00"/><rect x="734.95" y="299.75" width="10.1" height="5.7" fill="#00ff00"/><rect x="759.083" y="299.75" width="10.1" height="5.7" fill="#00ff00"/><rect x="783.217" y="299.75" width="10.1" height="5.7" fill="#00ff00"/><rect x="807.35" y="299.75" width="10.1" height="5.7" fill="#00ff00"/><rect x="831.483" y="299.75" width="10.1" height="5.7" fill="#00ff00"/><rect x="855.617" y="299.75" width="10.1" height="5.7" fill="#00ff00"/><rect x="879.75" y="299.75" width="10.1" height="5.7" fill="#00ff00"/><rect x="903.883" y="299.75" width="10.1" height="5.7" fill="#00ff00"/><rect x="928.017" y="299.75" width="10.1" height="5.7" fill="#00ff00"/><rect x="952.15" y="299.75" width="10.1" height="5.7" fill="#00ff00"/><rect x="976.283" y="299.75" width="10.1" height="5.7" fill="#00ff00"/><rect x="1000.42" y="299.75" width="10.1" height="5.7" fill="#00ff00"/><rect x="1024.55" y="299.75" width="10.1" height="5.7" fill="#00ff00"/><rect x="1048.68" y="299.75" width="10.1" height="5.7" fill="#00ff00"/><rect x="1072.82" y="299.75" width="10.1" height="5.7" fill="#00ff00"/><rect x="1096.95" y="299.75" width="10.1" height="5.7" fill="#00ff00"/><rect x="1121.08" y="299.75" width="10.1" height="5.7" fill="#00ff00"/><rect x="1145.22" y="299.75" width="10.1" height="5.7" fill="#00ff00"/><rect x="1169.35" y="299.75" width="10.1" height="5.7" fill="#00ff00"/><rect x="1193.48" y="299.75" width="10.1" height="5.7" fill="#00ff00"/><rect x="1217.62" y="299.75" width="10.1" height="5.7" fill="#00ff00"/><rect x="1241.75" y="299.75" width="10.1" height="5.7" fill="#00ff00"/><rect x="1265.88" y="299.75" width="10.1" height="5.7" fill="#00ff00"/><rect x="1290.02" y="299.75" width="10.1" height="5.7" fill="#00ff00"/><rect x="1314.15" y="299.75" width="10.1" height="5.7" fill="#00ff00"/><rect x="1338.28" y="299.75" width="10.1" height="5.7" fill="#00ff00"/><rect x="1362.42" y="299.75" width="10.1" height="5.7" fill="#00ff00"/><rect x="1386.55" y="299.75" width="10.1" height="5.7" fill="#00ff00"/><rect x="1410.68" y="299.75" width="10.1" height="5.7" fill="#00ff00"/><rect x="1434.82" y="299.75" width="10.1" height="5.7" fill="#00ff00"/><rect x="1458.95" y="299.75" width="10.1" height="5.7" fill="#00ff00"/><rect x="1483.08" y="299.75" width="10.1" height="5.7" fill="#00ff00"/><rect x="1507.22" y="299.75" width="10.1" height="5.7" fill="#00ff00"/><rect x="1531.35" y="299.75" width="10.1" height="5.7" fill="#00ff00"/><rect x="1555.48" y="299.75" width="10.1" height="5.7" fill="#00ff00"/><line x1="703.8" y1="288.5" x2="703.8" y2="326" stroke="#cfcfcf" stroke-width="1.5" /><line x1="727.933" y1="304" x2="727.933" y2="326" stroke="#cfcfcf" stroke-width="1.5" /><line x1="752.067" y1="304" x2="752.067" y2="326" stroke="#cfcfcf" stroke-width="1.5" /><line x1="776.2" y1="304" x2="776.2" y2="326" stroke="#cfcfcf" stroke-width="1.5" /><line x1="800.333" y1="304" x2="800.333" y2="326" stroke="#cfcfcf" stroke-width="1.5" /><line x1="824.467" y1="304" x2="824.467" y2="326" stroke="#cfcfcf" stroke-width="1.5" /><line x1="848.6" y1="288.5" x2="848.6" y2="326" stroke="#cfcfcf" stroke-width="1.5" /><line x1="872.733" y1="304" x2="872.733" y2="326" stroke="#cfcfcf" stroke-width="1.5" /><line x1="896.867" y1="304" x2="896.867" y2="326" stroke="#cfcfcf" stroke-width="1.5" /><line x1="921" y1="304" x2="921" y2="326" stroke="#cfcfcf" stroke-width="1.5" /><line x1="945.133" y1="304" x2="945.133" y2="326" stroke="#cfcfcf" stroke-width="1.5" /><line x1="969.267" y1="304" x2="969.267" y2="326" stroke="#cfcfcf" stroke-width="1.5" /><line x1="993.4" y1="288.5" x2="993.4" y2="326" stroke="#cfcfcf" stroke-width="1.5" /><line x1="1017.53" y1="304" x2="1017.53" y2="326" stroke="#cfcfcf" stroke-width="1.5" /><line x1="1041.67" y1="304" x2="1041.67" y2="326" stroke="#cfcfcf" stroke-width="1.5" /><line x1="1065.8" y1="304" x2="1065.8" y2="326" stroke="#cfcfcf" stroke-width="1.5" /><line x1="1089.93" y1="304" x2="1089.93" y2="326" stroke="#cfcfcf" stroke-width="1.5" /><line x1="1114.07" y1="304" x2="1114.07" y2="326" stroke="#cfcfcf" stroke-width="1.5" /><line x1="1138.2" y1="288.5" x2="1138.2" y2="326" stroke="#cfcfcf" stroke-width="1.5" /><line x1="1162.33" y1="304" x2="1162.33" y2="326" stroke="#cfcfcf" stroke-width="1.5" /><line x1="1186.47" y1="304" x2="1186.47" y2="326" stroke="#cfcfcf" stroke-width="1.5" /><line x1="1210.6" y1="304" x2="1210.6" y2="326" stroke="#cfcfcf" stroke-width="1.5" /><line x1="1234.73" y1="304" x2="1234.73" y2="326" stroke="#cfcfcf" stroke-width="1.5" /><line x1="1258.87" y1="304" x2="1258.87" y2="326" stroke="#cfcfcf" stroke-width="1.5" /><line x1="1283" y1="288.5" x2="1283" y2="326" stroke="#cfcfcf" stroke-width="1.5" /><line x1="1307.13" y1="304" x2="1307.13" y2="326" stroke="#cfcfcf" stroke-width="1.5" /><line x1="1331.27" y1="304" x2="1331.27" y2="326" stroke="#cfcfcf" stroke-width="1.5" /><line x1="1355.4" y1="304" x2="1355.4" y2="326" stroke="#cfcfcf" stroke-width="1.5" /><line x1="1379.53" y1="304" x2="1379.53" y2="326" stroke="#cfcfcf" stroke-width="1.5" /><line x1="1403.67" y1="304" x2="1403.67" y2="326" stroke="#cfcfcf" stroke-width="1.5" /><line x1="1427.8" y1="288.5" x2="1427.8" y2="326" stroke="#cfcfcf" stroke-width="1.5" /><line x1="1451.93" y1="304" x2="1451.93" y2="326" stroke="#cfcfcf" stroke-width="1.5" /><line x1="1476.07" y1="304" x2="1476.07" y2="326" stroke="#cfcfcf" stroke-width="1.5" /><line x1="1500.2" y1="304" x2="1500.2" y2="326" stroke="#cfcfcf" stroke-width="1.5" /><line x1="1524.33" y1="304" x2="1524.33" y2="326" stroke="#cfcfcf" stroke-width="1.5" /><line x1="1548.47" y1="304" x2="1548.47" y2="326" stroke="#cfcfcf" stroke-width="1.5" /><line x1="1572.6" y1="288.5" x2="1572.6" y2="326" stroke="#cfcfcf" stroke-width="1.5" /><line x1="703.8" y1="272.5" x2="703.8" y2="326" stroke="#dadada" stroke-width="1.6" /><line x1="1572.6" y1="272.5" x2="1572.6" y2="326" stroke="#dadada" stroke-width="1.6" /><path d="M703.8,365.4 L727.933,327.6 L752.067,365.4 L776.2,327.6 L800.333,365.4 L824.467,327.6 L848.6,365.4 L872.733,327.6 L896.867,365.4 L921,327.6 L945.133,365.4 L969.267,327.6 L993.4,365.4 L1017.53,327.6 L1041.67,365.4 L1065.8,327.6 L1089.93,365.4 L1114.07,327.6 L1138.2,365.4 L1162.33,327.6 L1186.47,365.4 L1210.6,327.6 L1234.73,365.4 L1258.87,327.6 L1283,365.4 L1307.13,327.6 L1331.27,365.4 L1355.4,327.6 L1379.53,365.4 L1403.67,327.6 L1427.8,365.4 L1451.93,327.6 L1476.07,365.4 L1500.2,327.6 L1524.33,365.4 L1548.47,327.6 L1572.6,365.4" fill="none" stroke="#cfe800" stroke-width="2.9" stroke-linejoin="miter"/><path d="M703.8,365.4 L727.933,327.6 L752.067,365.4 L776.2,327.6 L800.333,365.4 L824.467,327.6 L848.6,365.4 L872.733,327.6 L896.867,365.4 L921,327.6 L945.133,365.4 L969.267,327.6 L993.4,365.4 L1017.53,327.6 L1041.67,365.4 L1065.8,327.6 L1089.93,365.4 L1114.07,327.6 L1138.2,365.4 L1162.33,327.6 L1186.47,365.4 L1210.6,327.6 L1234.73,365.4 L1258.87,327.6 L1283,365.4 L1307.13,327.6 L1331.27,365.4 L1355.4,327.6 L1379.53,365.4 L1403.67,327.6 L1427.8,365.4 L1451.93,327.6 L1476.07,365.4 L1500.2,327.6 L1524.33,365.4 L1548.47,327.6 L1572.6,365.4" fill="none" stroke="#a6d400" stroke-width="1.1"/><line x1="704.4" y1="327.6" x2="704.4" y2="365.4" stroke="#cfe800" stroke-width="2.3" /><line x1="728.533" y1="327.6" x2="728.533" y2="365.4" stroke="#cfe800" stroke-width="2.3" /><line x1="752.667" y1="327.6" x2="752.667" y2="365.4" stroke="#cfe800" stroke-width="2.3" /><line x1="776.8" y1="327.6" x2="776.8" y2="365.4" stroke="#cfe800" stroke-width="2.3" /><line x1="800.933" y1="327.6" x2="800.933" y2="365.4" stroke="#cfe800" stroke-width="2.3" /><line x1="825.067" y1="327.6" x2="825.067" y2="365.4" stroke="#cfe800" stroke-width="2.3" /><line x1="848.6" y1="327.6" x2="848.6" y2="367.4" stroke="#1fae1f" stroke-width="3.2" /><line x1="848.6" y1="327.6" x2="848.6" y2="365.4" stroke="#5a9a00" stroke-width="0.8" stroke-dasharray="2 2"/><line x1="873.333" y1="327.6" x2="873.333" y2="365.4" stroke="#cfe800" stroke-width="2.3" /><line x1="897.467" y1="327.6" x2="897.467" y2="365.4" stroke="#cfe800" stroke-width="2.3" /><line x1="921.6" y1="327.6" x2="921.6" y2="365.4" stroke="#cfe800" stroke-width="2.3" /><line x1="945.733" y1="327.6" x2="945.733" y2="365.4" stroke="#cfe800" stroke-width="2.3" /><line x1="969.867" y1="327.6" x2="969.867" y2="365.4" stroke="#cfe800" stroke-width="2.3" /><line x1="993.4" y1="327.6" x2="993.4" y2="367.4" stroke="#1fae1f" stroke-width="3.2" /><line x1="993.4" y1="327.6" x2="993.4" y2="365.4" stroke="#5a9a00" stroke-width="0.8" stroke-dasharray="2 2"/><line x1="1018.13" y1="327.6" x2="1018.13" y2="365.4" stroke="#cfe800" stroke-width="2.3" /><line x1="1042.27" y1="327.6" x2="1042.27" y2="365.4" stroke="#cfe800" stroke-width="2.3" /><line x1="1066.4" y1="327.6" x2="1066.4" y2="365.4" stroke="#cfe800" stroke-width="2.3" /><line x1="1090.53" y1="327.6" x2="1090.53" y2="365.4" stroke="#cfe800" stroke-width="2.3" /><line x1="1114.67" y1="327.6" x2="1114.67" y2="365.4" stroke="#cfe800" stroke-width="2.3" /><line x1="1138.2" y1="327.6" x2="1138.2" y2="367.4" stroke="#1fae1f" stroke-width="3.2" /><line x1="1138.2" y1="327.6" x2="1138.2" y2="365.4" stroke="#5a9a00" stroke-width="0.8" stroke-dasharray="2 2"/><line x1="1162.93" y1="327.6" x2="1162.93" y2="365.4" stroke="#cfe800" stroke-width="2.3" /><line x1="1187.07" y1="327.6" x2="1187.07" y2="365.4" stroke="#cfe800" stroke-width="2.3" /><line x1="1211.2" y1="327.6" x2="1211.2" y2="365.4" stroke="#cfe800" stroke-width="2.3" /><line x1="1235.33" y1="327.6" x2="1235.33" y2="365.4" stroke="#cfe800" stroke-width="2.3" /><line x1="1259.47" y1="327.6" x2="1259.47" y2="365.4" stroke="#cfe800" stroke-width="2.3" /><line x1="1283" y1="327.6" x2="1283" y2="367.4" stroke="#1fae1f" stroke-width="3.2" /><line x1="1283" y1="327.6" x2="1283" y2="365.4" stroke="#5a9a00" stroke-width="0.8" stroke-dasharray="2 2"/><line x1="1307.73" y1="327.6" x2="1307.73" y2="365.4" stroke="#cfe800" stroke-width="2.3" /><line x1="1331.87" y1="327.6" x2="1331.87" y2="365.4" stroke="#cfe800" stroke-width="2.3" /><line x1="1356" y1="327.6" x2="1356" y2="365.4" stroke="#cfe800" stroke-width="2.3" /><line x1="1380.13" y1="327.6" x2="1380.13" y2="365.4" stroke="#cfe800" stroke-width="2.3" /><line x1="1404.27" y1="327.6" x2="1404.27" y2="365.4" stroke="#cfe800" stroke-width="2.3" /><line x1="1427.8" y1="327.6" x2="1427.8" y2="367.4" stroke="#1fae1f" stroke-width="3.2" /><line x1="1427.8" y1="327.6" x2="1427.8" y2="365.4" stroke="#5a9a00" stroke-width="0.8" stroke-dasharray="2 2"/><line x1="1452.53" y1="327.6" x2="1452.53" y2="365.4" stroke="#cfe800" stroke-width="2.3" /><line x1="1476.67" y1="327.6" x2="1476.67" y2="365.4" stroke="#cfe800" stroke-width="2.3" /><line x1="1500.8" y1="327.6" x2="1500.8" y2="365.4" stroke="#cfe800" stroke-width="2.3" /><line x1="1524.93" y1="327.6" x2="1524.93" y2="365.4" stroke="#cfe800" stroke-width="2.3" /><line x1="1549.07" y1="327.6" x2="1549.07" y2="365.4" stroke="#cfe800" stroke-width="2.3" /><line x1="1573.2" y1="327.6" x2="1573.2" y2="365.4" stroke="#cfe800" stroke-width="2.3" /><line x1="1573.8" y1="327.6" x2="1573.8" y2="365.4" stroke="#4bd000" stroke-width="1.4" /><line x1="703.3" y1="326.4" x2="1573.6" y2="326.4" stroke="#cfe800" stroke-width="1.3" /><line x1="703.3" y1="328.8" x2="1573.6" y2="328.8" stroke="#cfe800" stroke-width="1.9" /><line x1="703.3" y1="364" x2="1573.6" y2="364" stroke="#cfe800" stroke-width="1.9" /><line x1="703.3" y1="366.8" x2="1573.6" y2="366.8" stroke="#cfe800" stroke-width="1.4" /><line x1="682.5" y1="322.8" x2="682.5" y2="370.2" stroke="#dadada" stroke-width="1.7" /><line x1="678.9" y1="326" x2="684.5" y2="326" stroke="#dadada" stroke-width="1.5" /><path d="M680.8,327.7 L684.2,324.3" stroke="#dadada" stroke-width="1.3"/><line x1="678.9" y1="367" x2="684.5" y2="367" stroke="#dadada" stroke-width="1.5" /><path d="M680.8,368.7 L684.2,365.3" stroke="#dadada" stroke-width="1.3"/><line x1="680" y1="326" x2="703.8" y2="326" stroke="#dadada" stroke-width="1.2" /><line x1="680" y1="367" x2="703.8" y2="367" stroke="#dadada" stroke-width="1.2" /><rect x="677.45" y="339.55" width="5.1" height="11.9" fill="#00ff00"/><path d="M655.3,370.6 L704.8,368 L704.8,420 L656.8,422.4 Z" fill="url(#pStone)" stroke="#9a9a9a" stroke-width="1"/><path d="M1571.6,368 L1621.2,370.6 L1619.7,422.4 L1571.6,420 Z" fill="url(#pStone)" stroke="#9a9a9a" stroke-width="1"/><line x1="653.9" y1="365" x2="656.7" y2="429.2" stroke="#8a8a8a" stroke-width="1.2" /><line x1="1622.6" y1="365" x2="1619.8" y2="429.2" stroke="#8a8a8a" stroke-width="1.2" /><line x1="704.6" y1="367" x2="704.6" y2="420" stroke="#d0d0d0" stroke-width="1.3" /><line x1="1571.8" y1="367" x2="1571.8" y2="420" stroke="#d0d0d0" stroke-width="1.3" /><path d="M705,368.5 L712,371 L723.7,373.7 L731,388 L740,407.5 L747.5,413.7 L875,473.7 L905,478 L1036,517 L1097.5,520.5 L1100,521.5 L1130,522 L1176,520.5 L1178.7,519.5 L1230,517 L1240,517 L1370,478.7 L1402.5,473.7 L1528.7,413.7 L1536,407.5 L1545,388 L1552.5,373.7 L1562,371 L1570,368.5" fill="none" stroke="#8f8f8f" stroke-width="1.1"/><line x1="776.4" y1="367" x2="776.4" y2="527" stroke="#d4d4d4" stroke-width="1" /><line x1="770" y1="372.5" x2="770" y2="450" stroke="#f2f200" stroke-width="1.1" /><line x1="770" y1="461" x2="770" y2="513" stroke="#f2f200" stroke-width="1.1" /><line x1="782.5" y1="372.5" x2="782.5" y2="450" stroke="#f2f200" stroke-width="1.1" /><line x1="782.5" y1="461" x2="782.5" y2="513" stroke="#f2f200" stroke-width="1.1" /><line x1="767.5" y1="450" x2="784.5" y2="450" stroke="#f2f200" stroke-width="1.3" /><line x1="767.5" y1="461" x2="784.5" y2="461" stroke="#f2f200" stroke-width="1.3" /><rect x="739.5" y="513" width="73" height="14" fill="none" stroke="#f2f200" stroke-width="1.2"/><path d="M772,369 V380 M779.5,369 V380 M770,373 H782 M770.5,379 l2,-5 l2,5 M777.5,379 l2,-5 l2,5" stroke="#19d419" stroke-width="1.1" fill="none"/><line x1="772" y1="367.5" x2="780" y2="367.5" stroke="#dadada" stroke-width="1" /><line x1="1138.4" y1="367" x2="1138.4" y2="527" stroke="#d4d4d4" stroke-width="1" /><line x1="1132" y1="372.5" x2="1132" y2="450" stroke="#f2f200" stroke-width="1.1" /><line x1="1132" y1="461" x2="1132" y2="513" stroke="#f2f200" stroke-width="1.1" /><line x1="1144.5" y1="372.5" x2="1144.5" y2="450" stroke="#f2f200" stroke-width="1.1" /><line x1="1144.5" y1="461" x2="1144.5" y2="513" stroke="#f2f200" stroke-width="1.1" /><line x1="1129.5" y1="450" x2="1146.5" y2="450" stroke="#f2f200" stroke-width="1.3" /><line x1="1129.5" y1="461" x2="1146.5" y2="461" stroke="#f2f200" stroke-width="1.3" /><rect x="1101.5" y="513" width="73" height="14" fill="none" stroke="#f2f200" stroke-width="1.2"/><path d="M1134,369 V380 M1141.5,369 V380 M1132,373 H1144 M1132.5,379 l2,-5 l2,5 M1139.5,379 l2,-5 l2,5" stroke="#19d419" stroke-width="1.1" fill="none"/><line x1="1134" y1="367.5" x2="1142" y2="367.5" stroke="#dadada" stroke-width="1" /><line x1="1500.4" y1="367" x2="1500.4" y2="527" stroke="#d4d4d4" stroke-width="1" /><line x1="1494" y1="372.5" x2="1494" y2="450" stroke="#f2f200" stroke-width="1.1" /><line x1="1494" y1="461" x2="1494" y2="513" stroke="#f2f200" stroke-width="1.1" /><line x1="1506.5" y1="372.5" x2="1506.5" y2="450" stroke="#f2f200" stroke-width="1.1" /><line x1="1506.5" y1="461" x2="1506.5" y2="513" stroke="#f2f200" stroke-width="1.1" /><line x1="1491.5" y1="450" x2="1508.5" y2="450" stroke="#f2f200" stroke-width="1.3" /><line x1="1491.5" y1="461" x2="1508.5" y2="461" stroke="#f2f200" stroke-width="1.3" /><rect x="1463.5" y="513" width="73" height="14" fill="none" stroke="#f2f200" stroke-width="1.2"/><path d="M1496,369 V380 M1503.5,369 V380 M1494,373 H1506 M1494.5,379 l2,-5 l2,5 M1501.5,379 l2,-5 l2,5" stroke="#19d419" stroke-width="1.1" fill="none"/><line x1="1496" y1="367.5" x2="1504" y2="367.5" stroke="#dadada" stroke-width="1" /><line x1="772.8" y1="400.5" x2="1503.2" y2="400.5" stroke="#dadada" stroke-width="1.7" /><line x1="776" y1="396.9" x2="776" y2="402.5" stroke="#dadada" stroke-width="1.5" /><path d="M774.3,402.2 L777.7,398.8" stroke="#dadada" stroke-width="1.3"/><line x1="1138" y1="396.9" x2="1138" y2="402.5" stroke="#dadada" stroke-width="1.5" /><path d="M1136.3,402.2 L1139.7,398.8" stroke="#dadada" stroke-width="1.3"/><line x1="1500" y1="396.9" x2="1500" y2="402.5" stroke="#dadada" stroke-width="1.5" /><path d="M1498.3,402.2 L1501.7,398.8" stroke="#dadada" stroke-width="1.3"/><rect x="951.25" y="393.05" width="11.5" height="5.3" fill="#00ff00"/><rect x="1312.95" y="393.05" width="11.5" height="5.3" fill="#00ff00"/><line x1="700.6" y1="415" x2="1575.8" y2="415" stroke="#dadada" stroke-width="1.7" /><line x1="703.8" y1="411.4" x2="703.8" y2="417" stroke="#dadada" stroke-width="1.5" /><path d="M702.1,416.7 L705.5,413.3" stroke="#dadada" stroke-width="1.3"/><line x1="776" y1="411.4" x2="776" y2="417" stroke="#dadada" stroke-width="1.5" /><path d="M774.3,416.7 L777.7,413.3" stroke="#dadada" stroke-width="1.3"/><line x1="1138" y1="411.4" x2="1138" y2="417" stroke="#dadada" stroke-width="1.5" /><path d="M1136.3,416.7 L1139.7,413.3" stroke="#dadada" stroke-width="1.3"/><line x1="1500" y1="411.4" x2="1500" y2="417" stroke="#dadada" stroke-width="1.5" /><path d="M1498.3,416.7 L1501.7,413.3" stroke="#dadada" stroke-width="1.3"/><line x1="1572.6" y1="411.4" x2="1572.6" y2="417" stroke="#dadada" stroke-width="1.5" /><path d="M1570.9,416.7 L1574.3,413.3" stroke="#dadada" stroke-width="1.3"/><rect x="734.75" y="407.55" width="10.5" height="5.9" fill="#00ff00"/><rect x="1132.25" y="407.55" width="11.5" height="5.9" fill="#00ff00"/><rect x="1530.75" y="407.55" width="10.5" height="5.9" fill="#00ff00"/><line x1="703.8" y1="367" x2="703.8" y2="418" stroke="#dadada" stroke-width="1" /><line x1="1572.6" y1="367" x2="1572.6" y2="418" stroke="#dadada" stroke-width="1" /><path d="M1150,351.7 H1233.7 M1195.5,351.7 V391.2 H1247.5" fill="none" stroke="#dadada" stroke-width="1.2"/><text x="1203" y="390" font-size="8.4" fill="#00ff00" textLength="42.5" lengthAdjust="spacingAndGlyphs" font-weight="bold">50 x 50 x 4 RHS</text><text x="1033.7" y="325" font-size="8.4" fill="#00ff00" textLength="41" lengthAdjust="spacingAndGlyphs" font-weight="bold">100 x 100 x 4 SHS</text><text x="1031" y="376.2" font-size="8.4" fill="#00ff00" textLength="40.5" lengthAdjust="spacingAndGlyphs" font-weight="bold">100 x 100 x 4 RHS</text><line x1="784" y1="317" x2="784" y2="322" stroke="#888" stroke-width="1" /><text x="1121" y="541" font-size="8" fill="#c4c4c4" textLength="40" lengthAdjust="spacingAndGlyphs">ELEVATION.</text><line x1="1121" y1="543.2" x2="1161" y2="543.2" stroke="#c4c4c4" stroke-width="1" /><line x1="1686" y1="270" x2="1686" y2="437" stroke="#dadada" stroke-width="1.2" /><line x1="1706" y1="270" x2="1706" y2="437" stroke="#dadada" stroke-width="1.2" /><line x1="1672" y1="272.5" x2="1709.5" y2="272.5" stroke="#dadada" stroke-width="1.2" /><line x1="1672" y1="435" x2="1709.5" y2="435" stroke="#dadada" stroke-width="1.2" /><path d="M1684.3,274.2 L1687.7,270.8" stroke="#dadada" stroke-width="1.3"/><path d="M1704.3,274.2 L1707.7,270.8" stroke="#dadada" stroke-width="1.3"/><path d="M1684.3,436.7 L1687.7,433.3" stroke="#dadada" stroke-width="1.3"/><path d="M1704.3,436.7 L1707.7,433.3" stroke="#dadada" stroke-width="1.3"/><line x1="1652.5" y1="288.7" x2="1689" y2="288.7" stroke="#e0e0e0" stroke-width="1.3" /><path d="M1684,290.7 L1688,286.7" stroke="#dadada" stroke-width="1.3"/><line x1="1652.5" y1="304.9" x2="1689" y2="304.9" stroke="#e0e0e0" stroke-width="1.3" /><path d="M1684,306.9 L1688,302.9" stroke="#dadada" stroke-width="1.3"/><line x1="1652.5" y1="321.1" x2="1689" y2="321.1" stroke="#e0e0e0" stroke-width="1.3" /><path d="M1684,323.1 L1688,319.1" stroke="#dadada" stroke-width="1.3"/><line x1="1652.5" y1="337.3" x2="1689" y2="337.3" stroke="#e0e0e0" stroke-width="1.3" /><path d="M1684,339.3 L1688,335.3" stroke="#dadada" stroke-width="1.3"/><line x1="1652.5" y1="353.5" x2="1689" y2="353.5" stroke="#e0e0e0" stroke-width="1.3" /><path d="M1684,355.5 L1688,351.5" stroke="#dadada" stroke-width="1.3"/><line x1="1652.5" y1="369.7" x2="1689" y2="369.7" stroke="#e0e0e0" stroke-width="1.3" /><path d="M1684,371.7 L1688,367.7" stroke="#dadada" stroke-width="1.3"/><line x1="1652.5" y1="385.9" x2="1689" y2="385.9" stroke="#e0e0e0" stroke-width="1.3" /><path d="M1684,387.9 L1688,383.9" stroke="#dadada" stroke-width="1.3"/><line x1="1652.5" y1="402.1" x2="1689" y2="402.1" stroke="#e0e0e0" stroke-width="1.3" /><path d="M1684,404.1 L1688,400.1" stroke="#dadada" stroke-width="1.3"/><line x1="1652.5" y1="418.3" x2="1689" y2="418.3" stroke="#e0e0e0" stroke-width="1.3" /><path d="M1684,420.3 L1688,416.3" stroke="#dadada" stroke-width="1.3"/><rect x="1680.3" y="276" width="4.6" height="6.2" fill="#00ff00" /><rect x="1680.3" y="292.3" width="4.6" height="6.2" fill="#00ff00" /><rect x="1680.3" y="308.6" width="4.6" height="6.2" fill="#00ff00" /><rect x="1680.3" y="324.9" width="4.6" height="6.2" fill="#00ff00" /><rect x="1680.3" y="341.2" width="4.6" height="6.2" fill="#00ff00" /><rect x="1680.3" y="357.5" width="4.6" height="6.2" fill="#00ff00" /><rect x="1680.3" y="373.8" width="4.6" height="6.2" fill="#00ff00" /><rect x="1680.3" y="390.1" width="4.6" height="6.2" fill="#00ff00" /><rect x="1680.3" y="406.4" width="4.6" height="6.2" fill="#00ff00" /><rect x="1680.3" y="422.7" width="4.6" height="6.2" fill="#00ff00" /><rect x="1700.3" y="347.5" width="4.6" height="10" fill="#00ff00" /><rect x="1639" y="305.5" width="4" height="91.5" fill="#00ff00" /><rect x="1643" y="346" width="3.4" height="48" fill="#00ff00" /><rect x="1668.7" y="300" width="3.8" height="91" fill="#00ff00" /><rect x="1672.5" y="342" width="3" height="45.5" fill="#00ff00" /><line x1="1655" y1="271" x2="1655" y2="436" stroke="#22d822" stroke-width="2" /><line x1="1648" y1="283" x2="1648" y2="420" stroke="#19e619" stroke-width="0.9" /><line x1="1662.5" y1="283" x2="1662.5" y2="420" stroke="#19e619" stroke-width="0.9" /><path d="M1638.7,271.5 H1672 M1638.7,283.3 H1672" fill="none" stroke="#f2f200" stroke-width="1.3"/><path d="M1639,277.4 H1671.5" fill="none" stroke="#707070" stroke-width="2.2"/><path d="M1639.3,274 V281 M1671.3,274 V281" fill="none" stroke="#e0e0e0" stroke-width="1"/><path d="M1638.7,423 H1672 M1638.7,435 H1672" fill="none" stroke="#f2f200" stroke-width="1.3"/><path d="M1639,429 H1671.5" fill="none" stroke="#707070" stroke-width="2.2"/><path d="M1639.3,425.5 V432.5 M1671.3,425.5 V432.5" fill="none" stroke="#e0e0e0" stroke-width="1"/><line x1="1640" y1="405" x2="1655" y2="425" stroke="#e0e0e0" stroke-width="3.6" /><line x1="1640" y1="405" x2="1655" y2="425" stroke="#111" stroke-width="1.8" /><line x1="1640" y1="405" x2="1655" y2="425" stroke="#f2f200" stroke-width="0.8" /><line x1="1670.5" y1="405" x2="1655" y2="425" stroke="#e0e0e0" stroke-width="3.6" /><line x1="1670.5" y1="405" x2="1655" y2="425" stroke="#111" stroke-width="1.8" /><line x1="1670.5" y1="405" x2="1655" y2="425" stroke="#f2f200" stroke-width="0.8" /><text x="1609" y="455" font-size="8" fill="#c4c4c4" textLength="100" lengthAdjust="spacingAndGlyphs">SPLICE  CONNECTION DETAIL.</text><line x1="1609" y1="457.2" x2="1709" y2="457.2" stroke="#c4c4c4" stroke-width="1" /><line x1="700.6" y1="565" x2="1575.8" y2="565" stroke="#dadada" stroke-width="1.7" /><line x1="703.8" y1="561.4" x2="703.8" y2="567" stroke="#dadada" stroke-width="1.5" /><path d="M702.1,566.7 L705.5,563.3" stroke="#dadada" stroke-width="1.3"/><line x1="1572.6" y1="561.4" x2="1572.6" y2="567" stroke="#dadada" stroke-width="1.5" /><path d="M1570.9,566.7 L1574.3,563.3" stroke="#dadada" stroke-width="1.3"/><rect x="1131.5" y="557.75" width="12" height="5.5" fill="#00ff00"/><line x1="700.6" y1="579.5" x2="1575.8" y2="579.5" stroke="#dadada" stroke-width="1.7" /><line x1="703.8" y1="575.9" x2="703.8" y2="581.5" stroke="#dadada" stroke-width="1.5" /><path d="M702.1,581.2 L705.5,577.8" stroke="#dadada" stroke-width="1.3"/><line x1="848.6" y1="575.9" x2="848.6" y2="581.5" stroke="#dadada" stroke-width="1.5" /><path d="M846.9,581.2 L850.3,577.8" stroke="#dadada" stroke-width="1.3"/><line x1="993.4" y1="575.9" x2="993.4" y2="581.5" stroke="#dadada" stroke-width="1.5" /><path d="M991.7,581.2 L995.1,577.8" stroke="#dadada" stroke-width="1.3"/><line x1="1138.2" y1="575.9" x2="1138.2" y2="581.5" stroke="#dadada" stroke-width="1.5" /><path d="M1136.5,581.2 L1139.9,577.8" stroke="#dadada" stroke-width="1.3"/><line x1="1283" y1="575.9" x2="1283" y2="581.5" stroke="#dadada" stroke-width="1.5" /><path d="M1281.3,581.2 L1284.7,577.8" stroke="#dadada" stroke-width="1.3"/><line x1="1427.8" y1="575.9" x2="1427.8" y2="581.5" stroke="#dadada" stroke-width="1.5" /><path d="M1426.1,581.2 L1429.5,577.8" stroke="#dadada" stroke-width="1.3"/><line x1="1572.6" y1="575.9" x2="1572.6" y2="581.5" stroke="#dadada" stroke-width="1.5" /><path d="M1570.9,581.2 L1574.3,577.8" stroke="#dadada" stroke-width="1.3"/><rect x="771.7" y="572.05" width="10" height="5.9" fill="#00ff00"/><rect x="916.5" y="572.05" width="10" height="5.9" fill="#00ff00"/><rect x="1061.3" y="572.05" width="10" height="5.9" fill="#00ff00"/><rect x="1206.1" y="572.05" width="10" height="5.9" fill="#00ff00"/><rect x="1350.9" y="572.05" width="10" height="5.9" fill="#00ff00"/><rect x="1495.7" y="572.05" width="10" height="5.9" fill="#00ff00"/><rect x="706.8" y="585.75" width="7" height="5.9" fill="#00ff00"/><rect x="741.8" y="585.75" width="10" height="5.9" fill="#00ff00"/><rect x="800.8" y="585.75" width="10" height="5.9" fill="#00ff00"/><rect x="838.6" y="585.75" width="7" height="5.9" fill="#00ff00"/><rect x="727.025" y="607.55" width="10" height="5.9" fill="#00ff00"/><rect x="756.475" y="607.55" width="10" height="5.9" fill="#00ff00"/><rect x="785.925" y="607.55" width="10" height="5.9" fill="#00ff00"/><rect x="815.375" y="607.55" width="10" height="5.9" fill="#00ff00"/><rect x="851.6" y="585.75" width="7" height="5.9" fill="#00ff00"/><rect x="886.6" y="585.75" width="10" height="5.9" fill="#00ff00"/><rect x="945.6" y="585.75" width="10" height="5.9" fill="#00ff00"/><rect x="983.4" y="585.75" width="7" height="5.9" fill="#00ff00"/><rect x="871.825" y="607.55" width="10" height="5.9" fill="#00ff00"/><rect x="901.275" y="607.55" width="10" height="5.9" fill="#00ff00"/><rect x="930.725" y="607.55" width="10" height="5.9" fill="#00ff00"/><rect x="960.175" y="607.55" width="10" height="5.9" fill="#00ff00"/><rect x="996.4" y="585.75" width="7" height="5.9" fill="#00ff00"/><rect x="1031.4" y="585.75" width="10" height="5.9" fill="#00ff00"/><rect x="1090.4" y="585.75" width="10" height="5.9" fill="#00ff00"/><rect x="1128.2" y="585.75" width="7" height="5.9" fill="#00ff00"/><rect x="1016.62" y="607.55" width="10" height="5.9" fill="#00ff00"/><rect x="1046.08" y="607.55" width="10" height="5.9" fill="#00ff00"/><rect x="1075.53" y="607.55" width="10" height="5.9" fill="#00ff00"/><rect x="1104.97" y="607.55" width="10" height="5.9" fill="#00ff00"/><rect x="1141.2" y="585.75" width="7" height="5.9" fill="#00ff00"/><rect x="1176.2" y="585.75" width="10" height="5.9" fill="#00ff00"/><rect x="1235.2" y="585.75" width="10" height="5.9" fill="#00ff00"/><rect x="1273" y="585.75" width="7" height="5.9" fill="#00ff00"/><rect x="1161.42" y="607.55" width="10" height="5.9" fill="#00ff00"/><rect x="1190.87" y="607.55" width="10" height="5.9" fill="#00ff00"/><rect x="1220.32" y="607.55" width="10" height="5.9" fill="#00ff00"/><rect x="1249.77" y="607.55" width="10" height="5.9" fill="#00ff00"/><rect x="1286" y="585.75" width="7" height="5.9" fill="#00ff00"/><rect x="1321" y="585.75" width="10" height="5.9" fill="#00ff00"/><rect x="1380" y="585.75" width="10" height="5.9" fill="#00ff00"/><rect x="1417.8" y="585.75" width="7" height="5.9" fill="#00ff00"/><rect x="1306.22" y="607.55" width="10" height="5.9" fill="#00ff00"/><rect x="1335.67" y="607.55" width="10" height="5.9" fill="#00ff00"/><rect x="1365.12" y="607.55" width="10" height="5.9" fill="#00ff00"/><rect x="1394.58" y="607.55" width="10" height="5.9" fill="#00ff00"/><rect x="1430.8" y="585.75" width="7" height="5.9" fill="#00ff00"/><rect x="1465.8" y="585.75" width="10" height="5.9" fill="#00ff00"/><rect x="1524.8" y="585.75" width="10" height="5.9" fill="#00ff00"/><rect x="1562.6" y="585.75" width="7" height="5.9" fill="#00ff00"/><rect x="1451.02" y="607.55" width="10" height="5.9" fill="#00ff00"/><rect x="1480.47" y="607.55" width="10" height="5.9" fill="#00ff00"/><rect x="1509.92" y="607.55" width="10" height="5.9" fill="#00ff00"/><rect x="1539.38" y="607.55" width="10" height="5.9" fill="#00ff00"/><line x1="700.6" y1="593" x2="1575.8" y2="593" stroke="#dadada" stroke-width="1.7" /><line x1="703.8" y1="589.4" x2="703.8" y2="595" stroke="#dadada" stroke-width="1.5" /><path d="M702.1,594.7 L705.5,591.3" stroke="#dadada" stroke-width="1.3"/><line x1="717.3" y1="589.4" x2="717.3" y2="595" stroke="#dadada" stroke-width="1.5" /><path d="M715.6,594.7 L719,591.3" stroke="#dadada" stroke-width="1.3"/><line x1="776.2" y1="589.4" x2="776.2" y2="595" stroke="#dadada" stroke-width="1.5" /><path d="M774.5,594.7 L777.9,591.3" stroke="#dadada" stroke-width="1.3"/><line x1="835.1" y1="589.4" x2="835.1" y2="595" stroke="#dadada" stroke-width="1.5" /><path d="M833.4,594.7 L836.8,591.3" stroke="#dadada" stroke-width="1.3"/><line x1="848.6" y1="589.4" x2="848.6" y2="595" stroke="#dadada" stroke-width="1.5" /><path d="M846.9,594.7 L850.3,591.3" stroke="#dadada" stroke-width="1.3"/><line x1="862.1" y1="589.4" x2="862.1" y2="595" stroke="#dadada" stroke-width="1.5" /><path d="M860.4,594.7 L863.8,591.3" stroke="#dadada" stroke-width="1.3"/><line x1="921" y1="589.4" x2="921" y2="595" stroke="#dadada" stroke-width="1.5" /><path d="M919.3,594.7 L922.7,591.3" stroke="#dadada" stroke-width="1.3"/><line x1="979.9" y1="589.4" x2="979.9" y2="595" stroke="#dadada" stroke-width="1.5" /><path d="M978.2,594.7 L981.6,591.3" stroke="#dadada" stroke-width="1.3"/><line x1="993.4" y1="589.4" x2="993.4" y2="595" stroke="#dadada" stroke-width="1.5" /><path d="M991.7,594.7 L995.1,591.3" stroke="#dadada" stroke-width="1.3"/><line x1="1006.9" y1="589.4" x2="1006.9" y2="595" stroke="#dadada" stroke-width="1.5" /><path d="M1005.2,594.7 L1008.6,591.3" stroke="#dadada" stroke-width="1.3"/><line x1="1065.8" y1="589.4" x2="1065.8" y2="595" stroke="#dadada" stroke-width="1.5" /><path d="M1064.1,594.7 L1067.5,591.3" stroke="#dadada" stroke-width="1.3"/><line x1="1124.7" y1="589.4" x2="1124.7" y2="595" stroke="#dadada" stroke-width="1.5" /><path d="M1123,594.7 L1126.4,591.3" stroke="#dadada" stroke-width="1.3"/><line x1="1138.2" y1="589.4" x2="1138.2" y2="595" stroke="#dadada" stroke-width="1.5" /><path d="M1136.5,594.7 L1139.9,591.3" stroke="#dadada" stroke-width="1.3"/><line x1="1151.7" y1="589.4" x2="1151.7" y2="595" stroke="#dadada" stroke-width="1.5" /><path d="M1150,594.7 L1153.4,591.3" stroke="#dadada" stroke-width="1.3"/><line x1="1210.6" y1="589.4" x2="1210.6" y2="595" stroke="#dadada" stroke-width="1.5" /><path d="M1208.9,594.7 L1212.3,591.3" stroke="#dadada" stroke-width="1.3"/><line x1="1269.5" y1="589.4" x2="1269.5" y2="595" stroke="#dadada" stroke-width="1.5" /><path d="M1267.8,594.7 L1271.2,591.3" stroke="#dadada" stroke-width="1.3"/><line x1="1283" y1="589.4" x2="1283" y2="595" stroke="#dadada" stroke-width="1.5" /><path d="M1281.3,594.7 L1284.7,591.3" stroke="#dadada" stroke-width="1.3"/><line x1="1296.5" y1="589.4" x2="1296.5" y2="595" stroke="#dadada" stroke-width="1.5" /><path d="M1294.8,594.7 L1298.2,591.3" stroke="#dadada" stroke-width="1.3"/><line x1="1355.4" y1="589.4" x2="1355.4" y2="595" stroke="#dadada" stroke-width="1.5" /><path d="M1353.7,594.7 L1357.1,591.3" stroke="#dadada" stroke-width="1.3"/><line x1="1414.3" y1="589.4" x2="1414.3" y2="595" stroke="#dadada" stroke-width="1.5" /><path d="M1412.6,594.7 L1416,591.3" stroke="#dadada" stroke-width="1.3"/><line x1="1427.8" y1="589.4" x2="1427.8" y2="595" stroke="#dadada" stroke-width="1.5" /><path d="M1426.1,594.7 L1429.5,591.3" stroke="#dadada" stroke-width="1.3"/><line x1="1441.3" y1="589.4" x2="1441.3" y2="595" stroke="#dadada" stroke-width="1.5" /><path d="M1439.6,594.7 L1443,591.3" stroke="#dadada" stroke-width="1.3"/><line x1="1500.2" y1="589.4" x2="1500.2" y2="595" stroke="#dadada" stroke-width="1.5" /><path d="M1498.5,594.7 L1501.9,591.3" stroke="#dadada" stroke-width="1.3"/><line x1="1559.1" y1="589.4" x2="1559.1" y2="595" stroke="#dadada" stroke-width="1.5" /><path d="M1557.4,594.7 L1560.8,591.3" stroke="#dadada" stroke-width="1.3"/><line x1="1572.6" y1="589.4" x2="1572.6" y2="595" stroke="#dadada" stroke-width="1.5" /><path d="M1570.9,594.7 L1574.3,591.3" stroke="#dadada" stroke-width="1.3"/><line x1="700.6" y1="605" x2="1575.8" y2="605" stroke="#dadada" stroke-width="1.7" /><line x1="703.8" y1="601.4" x2="703.8" y2="607" stroke="#dadada" stroke-width="1.5" /><path d="M702.1,606.7 L705.5,603.3" stroke="#dadada" stroke-width="1.3"/><line x1="727.933" y1="601.4" x2="727.933" y2="607" stroke="#dadada" stroke-width="1.5" /><path d="M726.233,606.7 L729.633,603.3" stroke="#dadada" stroke-width="1.3"/><line x1="752.067" y1="601.4" x2="752.067" y2="607" stroke="#dadada" stroke-width="1.5" /><path d="M750.367,606.7 L753.767,603.3" stroke="#dadada" stroke-width="1.3"/><line x1="776.2" y1="601.4" x2="776.2" y2="607" stroke="#dadada" stroke-width="1.5" /><path d="M774.5,606.7 L777.9,603.3" stroke="#dadada" stroke-width="1.3"/><line x1="800.333" y1="601.4" x2="800.333" y2="607" stroke="#dadada" stroke-width="1.5" /><path d="M798.633,606.7 L802.033,603.3" stroke="#dadada" stroke-width="1.3"/><line x1="824.467" y1="601.4" x2="824.467" y2="607" stroke="#dadada" stroke-width="1.5" /><path d="M822.767,606.7 L826.167,603.3" stroke="#dadada" stroke-width="1.3"/><line x1="848.6" y1="601.4" x2="848.6" y2="607" stroke="#dadada" stroke-width="1.5" /><path d="M846.9,606.7 L850.3,603.3" stroke="#dadada" stroke-width="1.3"/><line x1="872.733" y1="601.4" x2="872.733" y2="607" stroke="#dadada" stroke-width="1.5" /><path d="M871.033,606.7 L874.433,603.3" stroke="#dadada" stroke-width="1.3"/><line x1="896.867" y1="601.4" x2="896.867" y2="607" stroke="#dadada" stroke-width="1.5" /><path d="M895.167,606.7 L898.567,603.3" stroke="#dadada" stroke-width="1.3"/><line x1="921" y1="601.4" x2="921" y2="607" stroke="#dadada" stroke-width="1.5" /><path d="M919.3,606.7 L922.7,603.3" stroke="#dadada" stroke-width="1.3"/><line x1="945.133" y1="601.4" x2="945.133" y2="607" stroke="#dadada" stroke-width="1.5" /><path d="M943.433,606.7 L946.833,603.3" stroke="#dadada" stroke-width="1.3"/><line x1="969.267" y1="601.4" x2="969.267" y2="607" stroke="#dadada" stroke-width="1.5" /><path d="M967.567,606.7 L970.967,603.3" stroke="#dadada" stroke-width="1.3"/><line x1="993.4" y1="601.4" x2="993.4" y2="607" stroke="#dadada" stroke-width="1.5" /><path d="M991.7,606.7 L995.1,603.3" stroke="#dadada" stroke-width="1.3"/><line x1="1017.53" y1="601.4" x2="1017.53" y2="607" stroke="#dadada" stroke-width="1.5" /><path d="M1015.83,606.7 L1019.23,603.3" stroke="#dadada" stroke-width="1.3"/><line x1="1041.67" y1="601.4" x2="1041.67" y2="607" stroke="#dadada" stroke-width="1.5" /><path d="M1039.97,606.7 L1043.37,603.3" stroke="#dadada" stroke-width="1.3"/><line x1="1065.8" y1="601.4" x2="1065.8" y2="607" stroke="#dadada" stroke-width="1.5" /><path d="M1064.1,606.7 L1067.5,603.3" stroke="#dadada" stroke-width="1.3"/><line x1="1089.93" y1="601.4" x2="1089.93" y2="607" stroke="#dadada" stroke-width="1.5" /><path d="M1088.23,606.7 L1091.63,603.3" stroke="#dadada" stroke-width="1.3"/><line x1="1114.07" y1="601.4" x2="1114.07" y2="607" stroke="#dadada" stroke-width="1.5" /><path d="M1112.37,606.7 L1115.77,603.3" stroke="#dadada" stroke-width="1.3"/><line x1="1138.2" y1="601.4" x2="1138.2" y2="607" stroke="#dadada" stroke-width="1.5" /><path d="M1136.5,606.7 L1139.9,603.3" stroke="#dadada" stroke-width="1.3"/><line x1="1162.33" y1="601.4" x2="1162.33" y2="607" stroke="#dadada" stroke-width="1.5" /><path d="M1160.63,606.7 L1164.03,603.3" stroke="#dadada" stroke-width="1.3"/><line x1="1186.47" y1="601.4" x2="1186.47" y2="607" stroke="#dadada" stroke-width="1.5" /><path d="M1184.77,606.7 L1188.17,603.3" stroke="#dadada" stroke-width="1.3"/><line x1="1210.6" y1="601.4" x2="1210.6" y2="607" stroke="#dadada" stroke-width="1.5" /><path d="M1208.9,606.7 L1212.3,603.3" stroke="#dadada" stroke-width="1.3"/><line x1="1234.73" y1="601.4" x2="1234.73" y2="607" stroke="#dadada" stroke-width="1.5" /><path d="M1233.03,606.7 L1236.43,603.3" stroke="#dadada" stroke-width="1.3"/><line x1="1258.87" y1="601.4" x2="1258.87" y2="607" stroke="#dadada" stroke-width="1.5" /><path d="M1257.17,606.7 L1260.57,603.3" stroke="#dadada" stroke-width="1.3"/><line x1="1283" y1="601.4" x2="1283" y2="607" stroke="#dadada" stroke-width="1.5" /><path d="M1281.3,606.7 L1284.7,603.3" stroke="#dadada" stroke-width="1.3"/><line x1="1307.13" y1="601.4" x2="1307.13" y2="607" stroke="#dadada" stroke-width="1.5" /><path d="M1305.43,606.7 L1308.83,603.3" stroke="#dadada" stroke-width="1.3"/><line x1="1331.27" y1="601.4" x2="1331.27" y2="607" stroke="#dadada" stroke-width="1.5" /><path d="M1329.57,606.7 L1332.97,603.3" stroke="#dadada" stroke-width="1.3"/><line x1="1355.4" y1="601.4" x2="1355.4" y2="607" stroke="#dadada" stroke-width="1.5" /><path d="M1353.7,606.7 L1357.1,603.3" stroke="#dadada" stroke-width="1.3"/><line x1="1379.53" y1="601.4" x2="1379.53" y2="607" stroke="#dadada" stroke-width="1.5" /><path d="M1377.83,606.7 L1381.23,603.3" stroke="#dadada" stroke-width="1.3"/><line x1="1403.67" y1="601.4" x2="1403.67" y2="607" stroke="#dadada" stroke-width="1.5" /><path d="M1401.97,606.7 L1405.37,603.3" stroke="#dadada" stroke-width="1.3"/><line x1="1427.8" y1="601.4" x2="1427.8" y2="607" stroke="#dadada" stroke-width="1.5" /><path d="M1426.1,606.7 L1429.5,603.3" stroke="#dadada" stroke-width="1.3"/><line x1="1451.93" y1="601.4" x2="1451.93" y2="607" stroke="#dadada" stroke-width="1.5" /><path d="M1450.23,606.7 L1453.63,603.3" stroke="#dadada" stroke-width="1.3"/><line x1="1476.07" y1="601.4" x2="1476.07" y2="607" stroke="#dadada" stroke-width="1.5" /><path d="M1474.37,606.7 L1477.77,603.3" stroke="#dadada" stroke-width="1.3"/><line x1="1500.2" y1="601.4" x2="1500.2" y2="607" stroke="#dadada" stroke-width="1.5" /><path d="M1498.5,606.7 L1501.9,603.3" stroke="#dadada" stroke-width="1.3"/><line x1="1524.33" y1="601.4" x2="1524.33" y2="607" stroke="#dadada" stroke-width="1.5" /><path d="M1522.63,606.7 L1526.03,603.3" stroke="#dadada" stroke-width="1.3"/><line x1="1548.47" y1="601.4" x2="1548.47" y2="607" stroke="#dadada" stroke-width="1.5" /><path d="M1546.77,606.7 L1550.17,603.3" stroke="#dadada" stroke-width="1.3"/><line x1="1572.6" y1="601.4" x2="1572.6" y2="607" stroke="#dadada" stroke-width="1.5" /><path d="M1570.9,606.7 L1574.3,603.3" stroke="#dadada" stroke-width="1.3"/><rect x="710.817" y="597.85" width="10.1" height="5.7" fill="#00ff00"/><rect x="734.95" y="597.85" width="10.1" height="5.7" fill="#00ff00"/><rect x="759.083" y="597.85" width="10.1" height="5.7" fill="#00ff00"/><rect x="783.217" y="597.85" width="10.1" height="5.7" fill="#00ff00"/><rect x="807.35" y="597.85" width="10.1" height="5.7" fill="#00ff00"/><rect x="831.483" y="597.85" width="10.1" height="5.7" fill="#00ff00"/><rect x="855.617" y="597.85" width="10.1" height="5.7" fill="#00ff00"/><rect x="879.75" y="597.85" width="10.1" height="5.7" fill="#00ff00"/><rect x="903.883" y="597.85" width="10.1" height="5.7" fill="#00ff00"/><rect x="928.017" y="597.85" width="10.1" height="5.7" fill="#00ff00"/><rect x="952.15" y="597.85" width="10.1" height="5.7" fill="#00ff00"/><rect x="976.283" y="597.85" width="10.1" height="5.7" fill="#00ff00"/><rect x="1000.42" y="597.85" width="10.1" height="5.7" fill="#00ff00"/><rect x="1024.55" y="597.85" width="10.1" height="5.7" fill="#00ff00"/><rect x="1048.68" y="597.85" width="10.1" height="5.7" fill="#00ff00"/><rect x="1072.82" y="597.85" width="10.1" height="5.7" fill="#00ff00"/><rect x="1096.95" y="597.85" width="10.1" height="5.7" fill="#00ff00"/><rect x="1121.08" y="597.85" width="10.1" height="5.7" fill="#00ff00"/><rect x="1145.22" y="597.85" width="10.1" height="5.7" fill="#00ff00"/><rect x="1169.35" y="597.85" width="10.1" height="5.7" fill="#00ff00"/><rect x="1193.48" y="597.85" width="10.1" height="5.7" fill="#00ff00"/><rect x="1217.62" y="597.85" width="10.1" height="5.7" fill="#00ff00"/><rect x="1241.75" y="597.85" width="10.1" height="5.7" fill="#00ff00"/><rect x="1265.88" y="597.85" width="10.1" height="5.7" fill="#00ff00"/><rect x="1290.02" y="597.85" width="10.1" height="5.7" fill="#00ff00"/><rect x="1314.15" y="597.85" width="10.1" height="5.7" fill="#00ff00"/><rect x="1338.28" y="597.85" width="10.1" height="5.7" fill="#00ff00"/><rect x="1362.42" y="597.85" width="10.1" height="5.7" fill="#00ff00"/><rect x="1386.55" y="597.85" width="10.1" height="5.7" fill="#00ff00"/><rect x="1410.68" y="597.85" width="10.1" height="5.7" fill="#00ff00"/><rect x="1434.82" y="597.85" width="10.1" height="5.7" fill="#00ff00"/><rect x="1458.95" y="597.85" width="10.1" height="5.7" fill="#00ff00"/><rect x="1483.08" y="597.85" width="10.1" height="5.7" fill="#00ff00"/><rect x="1507.22" y="597.85" width="10.1" height="5.7" fill="#00ff00"/><rect x="1531.35" y="597.85" width="10.1" height="5.7" fill="#00ff00"/><rect x="1555.48" y="597.85" width="10.1" height="5.7" fill="#00ff00"/><line x1="714.3" y1="614.5" x2="838.1" y2="614.5" stroke="#c0c0c0" stroke-width="1.4" /><line x1="717.3" y1="610.9" x2="717.3" y2="616.5" stroke="#c0c0c0" stroke-width="1.5" /><path d="M715.6,616.2 L719,612.8" stroke="#c0c0c0" stroke-width="1.3"/><line x1="746.75" y1="610.9" x2="746.75" y2="616.5" stroke="#c0c0c0" stroke-width="1.5" /><path d="M745.05,616.2 L748.45,612.8" stroke="#c0c0c0" stroke-width="1.3"/><line x1="776.2" y1="610.9" x2="776.2" y2="616.5" stroke="#c0c0c0" stroke-width="1.5" /><path d="M774.5,616.2 L777.9,612.8" stroke="#c0c0c0" stroke-width="1.3"/><line x1="805.65" y1="610.9" x2="805.65" y2="616.5" stroke="#c0c0c0" stroke-width="1.5" /><path d="M803.95,616.2 L807.35,612.8" stroke="#c0c0c0" stroke-width="1.3"/><line x1="835.1" y1="610.9" x2="835.1" y2="616.5" stroke="#c0c0c0" stroke-width="1.5" /><path d="M833.4,616.2 L836.8,612.8" stroke="#c0c0c0" stroke-width="1.3"/><line x1="859.1" y1="614.5" x2="982.9" y2="614.5" stroke="#c0c0c0" stroke-width="1.4" /><line x1="862.1" y1="610.9" x2="862.1" y2="616.5" stroke="#c0c0c0" stroke-width="1.5" /><path d="M860.4,616.2 L863.8,612.8" stroke="#c0c0c0" stroke-width="1.3"/><line x1="891.55" y1="610.9" x2="891.55" y2="616.5" stroke="#c0c0c0" stroke-width="1.5" /><path d="M889.85,616.2 L893.25,612.8" stroke="#c0c0c0" stroke-width="1.3"/><line x1="921" y1="610.9" x2="921" y2="616.5" stroke="#c0c0c0" stroke-width="1.5" /><path d="M919.3,616.2 L922.7,612.8" stroke="#c0c0c0" stroke-width="1.3"/><line x1="950.45" y1="610.9" x2="950.45" y2="616.5" stroke="#c0c0c0" stroke-width="1.5" /><path d="M948.75,616.2 L952.15,612.8" stroke="#c0c0c0" stroke-width="1.3"/><line x1="979.9" y1="610.9" x2="979.9" y2="616.5" stroke="#c0c0c0" stroke-width="1.5" /><path d="M978.2,616.2 L981.6,612.8" stroke="#c0c0c0" stroke-width="1.3"/><line x1="1003.9" y1="614.5" x2="1127.7" y2="614.5" stroke="#c0c0c0" stroke-width="1.4" /><line x1="1006.9" y1="610.9" x2="1006.9" y2="616.5" stroke="#c0c0c0" stroke-width="1.5" /><path d="M1005.2,616.2 L1008.6,612.8" stroke="#c0c0c0" stroke-width="1.3"/><line x1="1036.35" y1="610.9" x2="1036.35" y2="616.5" stroke="#c0c0c0" stroke-width="1.5" /><path d="M1034.65,616.2 L1038.05,612.8" stroke="#c0c0c0" stroke-width="1.3"/><line x1="1065.8" y1="610.9" x2="1065.8" y2="616.5" stroke="#c0c0c0" stroke-width="1.5" /><path d="M1064.1,616.2 L1067.5,612.8" stroke="#c0c0c0" stroke-width="1.3"/><line x1="1095.25" y1="610.9" x2="1095.25" y2="616.5" stroke="#c0c0c0" stroke-width="1.5" /><path d="M1093.55,616.2 L1096.95,612.8" stroke="#c0c0c0" stroke-width="1.3"/><line x1="1124.7" y1="610.9" x2="1124.7" y2="616.5" stroke="#c0c0c0" stroke-width="1.5" /><path d="M1123,616.2 L1126.4,612.8" stroke="#c0c0c0" stroke-width="1.3"/><line x1="1148.7" y1="614.5" x2="1272.5" y2="614.5" stroke="#c0c0c0" stroke-width="1.4" /><line x1="1151.7" y1="610.9" x2="1151.7" y2="616.5" stroke="#c0c0c0" stroke-width="1.5" /><path d="M1150,616.2 L1153.4,612.8" stroke="#c0c0c0" stroke-width="1.3"/><line x1="1181.15" y1="610.9" x2="1181.15" y2="616.5" stroke="#c0c0c0" stroke-width="1.5" /><path d="M1179.45,616.2 L1182.85,612.8" stroke="#c0c0c0" stroke-width="1.3"/><line x1="1210.6" y1="610.9" x2="1210.6" y2="616.5" stroke="#c0c0c0" stroke-width="1.5" /><path d="M1208.9,616.2 L1212.3,612.8" stroke="#c0c0c0" stroke-width="1.3"/><line x1="1240.05" y1="610.9" x2="1240.05" y2="616.5" stroke="#c0c0c0" stroke-width="1.5" /><path d="M1238.35,616.2 L1241.75,612.8" stroke="#c0c0c0" stroke-width="1.3"/><line x1="1269.5" y1="610.9" x2="1269.5" y2="616.5" stroke="#c0c0c0" stroke-width="1.5" /><path d="M1267.8,616.2 L1271.2,612.8" stroke="#c0c0c0" stroke-width="1.3"/><line x1="1293.5" y1="614.5" x2="1417.3" y2="614.5" stroke="#c0c0c0" stroke-width="1.4" /><line x1="1296.5" y1="610.9" x2="1296.5" y2="616.5" stroke="#c0c0c0" stroke-width="1.5" /><path d="M1294.8,616.2 L1298.2,612.8" stroke="#c0c0c0" stroke-width="1.3"/><line x1="1325.95" y1="610.9" x2="1325.95" y2="616.5" stroke="#c0c0c0" stroke-width="1.5" /><path d="M1324.25,616.2 L1327.65,612.8" stroke="#c0c0c0" stroke-width="1.3"/><line x1="1355.4" y1="610.9" x2="1355.4" y2="616.5" stroke="#c0c0c0" stroke-width="1.5" /><path d="M1353.7,616.2 L1357.1,612.8" stroke="#c0c0c0" stroke-width="1.3"/><line x1="1384.85" y1="610.9" x2="1384.85" y2="616.5" stroke="#c0c0c0" stroke-width="1.5" /><path d="M1383.15,616.2 L1386.55,612.8" stroke="#c0c0c0" stroke-width="1.3"/><line x1="1414.3" y1="610.9" x2="1414.3" y2="616.5" stroke="#c0c0c0" stroke-width="1.5" /><path d="M1412.6,616.2 L1416,612.8" stroke="#c0c0c0" stroke-width="1.3"/><line x1="1438.3" y1="614.5" x2="1562.1" y2="614.5" stroke="#c0c0c0" stroke-width="1.4" /><line x1="1441.3" y1="610.9" x2="1441.3" y2="616.5" stroke="#c0c0c0" stroke-width="1.5" /><path d="M1439.6,616.2 L1443,612.8" stroke="#c0c0c0" stroke-width="1.3"/><line x1="1470.75" y1="610.9" x2="1470.75" y2="616.5" stroke="#c0c0c0" stroke-width="1.5" /><path d="M1469.05,616.2 L1472.45,612.8" stroke="#c0c0c0" stroke-width="1.3"/><line x1="1500.2" y1="610.9" x2="1500.2" y2="616.5" stroke="#c0c0c0" stroke-width="1.5" /><path d="M1498.5,616.2 L1501.9,612.8" stroke="#c0c0c0" stroke-width="1.3"/><line x1="1529.65" y1="610.9" x2="1529.65" y2="616.5" stroke="#c0c0c0" stroke-width="1.5" /><path d="M1527.95,616.2 L1531.35,612.8" stroke="#c0c0c0" stroke-width="1.3"/><line x1="1559.1" y1="610.9" x2="1559.1" y2="616.5" stroke="#c0c0c0" stroke-width="1.5" /><path d="M1557.4,616.2 L1560.8,612.8" stroke="#c0c0c0" stroke-width="1.3"/><line x1="703.8" y1="575.5" x2="703.8" y2="621" stroke="#cfcfcf" stroke-width="1.4" /><line x1="727.933" y1="601" x2="727.933" y2="621" stroke="#cfcfcf" stroke-width="1.4" /><line x1="752.067" y1="601" x2="752.067" y2="621" stroke="#cfcfcf" stroke-width="1.4" /><line x1="776.2" y1="601" x2="776.2" y2="621" stroke="#cfcfcf" stroke-width="1.4" /><line x1="800.333" y1="601" x2="800.333" y2="621" stroke="#cfcfcf" stroke-width="1.4" /><line x1="824.467" y1="601" x2="824.467" y2="621" stroke="#cfcfcf" stroke-width="1.4" /><line x1="848.6" y1="575.5" x2="848.6" y2="621" stroke="#cfcfcf" stroke-width="1.4" /><line x1="872.733" y1="601" x2="872.733" y2="621" stroke="#cfcfcf" stroke-width="1.4" /><line x1="896.867" y1="601" x2="896.867" y2="621" stroke="#cfcfcf" stroke-width="1.4" /><line x1="921" y1="601" x2="921" y2="621" stroke="#cfcfcf" stroke-width="1.4" /><line x1="945.133" y1="601" x2="945.133" y2="621" stroke="#cfcfcf" stroke-width="1.4" /><line x1="969.267" y1="601" x2="969.267" y2="621" stroke="#cfcfcf" stroke-width="1.4" /><line x1="993.4" y1="575.5" x2="993.4" y2="621" stroke="#cfcfcf" stroke-width="1.4" /><line x1="1017.53" y1="601" x2="1017.53" y2="621" stroke="#cfcfcf" stroke-width="1.4" /><line x1="1041.67" y1="601" x2="1041.67" y2="621" stroke="#cfcfcf" stroke-width="1.4" /><line x1="1065.8" y1="601" x2="1065.8" y2="621" stroke="#cfcfcf" stroke-width="1.4" /><line x1="1089.93" y1="601" x2="1089.93" y2="621" stroke="#cfcfcf" stroke-width="1.4" /><line x1="1114.07" y1="601" x2="1114.07" y2="621" stroke="#cfcfcf" stroke-width="1.4" /><line x1="1138.2" y1="575.5" x2="1138.2" y2="621" stroke="#cfcfcf" stroke-width="1.4" /><line x1="1162.33" y1="601" x2="1162.33" y2="621" stroke="#cfcfcf" stroke-width="1.4" /><line x1="1186.47" y1="601" x2="1186.47" y2="621" stroke="#cfcfcf" stroke-width="1.4" /><line x1="1210.6" y1="601" x2="1210.6" y2="621" stroke="#cfcfcf" stroke-width="1.4" /><line x1="1234.73" y1="601" x2="1234.73" y2="621" stroke="#cfcfcf" stroke-width="1.4" /><line x1="1258.87" y1="601" x2="1258.87" y2="621" stroke="#cfcfcf" stroke-width="1.4" /><line x1="1283" y1="575.5" x2="1283" y2="621" stroke="#cfcfcf" stroke-width="1.4" /><line x1="1307.13" y1="601" x2="1307.13" y2="621" stroke="#cfcfcf" stroke-width="1.4" /><line x1="1331.27" y1="601" x2="1331.27" y2="621" stroke="#cfcfcf" stroke-width="1.4" /><line x1="1355.4" y1="601" x2="1355.4" y2="621" stroke="#cfcfcf" stroke-width="1.4" /><line x1="1379.53" y1="601" x2="1379.53" y2="621" stroke="#cfcfcf" stroke-width="1.4" /><line x1="1403.67" y1="601" x2="1403.67" y2="621" stroke="#cfcfcf" stroke-width="1.4" /><line x1="1427.8" y1="575.5" x2="1427.8" y2="621" stroke="#cfcfcf" stroke-width="1.4" /><line x1="1451.93" y1="601" x2="1451.93" y2="621" stroke="#cfcfcf" stroke-width="1.4" /><line x1="1476.07" y1="601" x2="1476.07" y2="621" stroke="#cfcfcf" stroke-width="1.4" /><line x1="1500.2" y1="601" x2="1500.2" y2="621" stroke="#cfcfcf" stroke-width="1.4" /><line x1="1524.33" y1="601" x2="1524.33" y2="621" stroke="#cfcfcf" stroke-width="1.4" /><line x1="1548.47" y1="601" x2="1548.47" y2="621" stroke="#cfcfcf" stroke-width="1.4" /><line x1="1572.6" y1="575.5" x2="1572.6" y2="621" stroke="#cfcfcf" stroke-width="1.4" /><line x1="703.8" y1="589.5" x2="703.8" y2="607" stroke="#cfcfcf" stroke-width="1.4" /><line x1="717.3" y1="589.5" x2="717.3" y2="607" stroke="#cfcfcf" stroke-width="1.4" /><line x1="776.2" y1="589.5" x2="776.2" y2="607" stroke="#cfcfcf" stroke-width="1.4" /><line x1="835.1" y1="589.5" x2="835.1" y2="607" stroke="#cfcfcf" stroke-width="1.4" /><line x1="848.6" y1="589.5" x2="848.6" y2="607" stroke="#cfcfcf" stroke-width="1.4" /><line x1="862.1" y1="589.5" x2="862.1" y2="607" stroke="#cfcfcf" stroke-width="1.4" /><line x1="921" y1="589.5" x2="921" y2="607" stroke="#cfcfcf" stroke-width="1.4" /><line x1="979.9" y1="589.5" x2="979.9" y2="607" stroke="#cfcfcf" stroke-width="1.4" /><line x1="993.4" y1="589.5" x2="993.4" y2="607" stroke="#cfcfcf" stroke-width="1.4" /><line x1="1006.9" y1="589.5" x2="1006.9" y2="607" stroke="#cfcfcf" stroke-width="1.4" /><line x1="1065.8" y1="589.5" x2="1065.8" y2="607" stroke="#cfcfcf" stroke-width="1.4" /><line x1="1124.7" y1="589.5" x2="1124.7" y2="607" stroke="#cfcfcf" stroke-width="1.4" /><line x1="1138.2" y1="589.5" x2="1138.2" y2="607" stroke="#cfcfcf" stroke-width="1.4" /><line x1="1151.7" y1="589.5" x2="1151.7" y2="607" stroke="#cfcfcf" stroke-width="1.4" /><line x1="1210.6" y1="589.5" x2="1210.6" y2="607" stroke="#cfcfcf" stroke-width="1.4" /><line x1="1269.5" y1="589.5" x2="1269.5" y2="607" stroke="#cfcfcf" stroke-width="1.4" /><line x1="1283" y1="589.5" x2="1283" y2="607" stroke="#cfcfcf" stroke-width="1.4" /><line x1="1296.5" y1="589.5" x2="1296.5" y2="607" stroke="#cfcfcf" stroke-width="1.4" /><line x1="1355.4" y1="589.5" x2="1355.4" y2="607" stroke="#cfcfcf" stroke-width="1.4" /><line x1="1414.3" y1="589.5" x2="1414.3" y2="607" stroke="#cfcfcf" stroke-width="1.4" /><line x1="1427.8" y1="589.5" x2="1427.8" y2="607" stroke="#cfcfcf" stroke-width="1.4" /><line x1="1441.3" y1="589.5" x2="1441.3" y2="607" stroke="#cfcfcf" stroke-width="1.4" /><line x1="1500.2" y1="589.5" x2="1500.2" y2="607" stroke="#cfcfcf" stroke-width="1.4" /><line x1="1559.1" y1="589.5" x2="1559.1" y2="607" stroke="#cfcfcf" stroke-width="1.4" /><line x1="1572.6" y1="589.5" x2="1572.6" y2="607" stroke="#cfcfcf" stroke-width="1.4" /><line x1="703.8" y1="561.5" x2="703.8" y2="621" stroke="#dadada" stroke-width="1.6" /><line x1="1572.6" y1="561.5" x2="1572.6" y2="621" stroke="#dadada" stroke-width="1.6" /><line x1="703.8" y1="606" x2="703.8" y2="681" stroke="#8a8a8a" stroke-width="1" /><line x1="727.933" y1="606" x2="727.933" y2="681" stroke="#8a8a8a" stroke-width="1" /><line x1="752.067" y1="606" x2="752.067" y2="681" stroke="#8a8a8a" stroke-width="1" /><line x1="776.2" y1="606" x2="776.2" y2="681" stroke="#8a8a8a" stroke-width="1" /><line x1="800.333" y1="606" x2="800.333" y2="681" stroke="#8a8a8a" stroke-width="1" /><line x1="824.467" y1="606" x2="824.467" y2="681" stroke="#8a8a8a" stroke-width="1" /><line x1="848.6" y1="606" x2="848.6" y2="681" stroke="#8a8a8a" stroke-width="1" /><line x1="872.733" y1="606" x2="872.733" y2="681" stroke="#8a8a8a" stroke-width="1" /><line x1="896.867" y1="606" x2="896.867" y2="681" stroke="#8a8a8a" stroke-width="1" /><line x1="921" y1="606" x2="921" y2="681" stroke="#8a8a8a" stroke-width="1" /><line x1="945.133" y1="606" x2="945.133" y2="681" stroke="#8a8a8a" stroke-width="1" /><line x1="969.267" y1="606" x2="969.267" y2="681" stroke="#8a8a8a" stroke-width="1" /><line x1="993.4" y1="606" x2="993.4" y2="681" stroke="#8a8a8a" stroke-width="1" /><line x1="1017.53" y1="606" x2="1017.53" y2="681" stroke="#8a8a8a" stroke-width="1" /><line x1="1041.67" y1="606" x2="1041.67" y2="681" stroke="#8a8a8a" stroke-width="1" /><line x1="1065.8" y1="606" x2="1065.8" y2="681" stroke="#8a8a8a" stroke-width="1" /><line x1="1089.93" y1="606" x2="1089.93" y2="681" stroke="#8a8a8a" stroke-width="1" /><line x1="1114.07" y1="606" x2="1114.07" y2="681" stroke="#8a8a8a" stroke-width="1" /><line x1="1138.2" y1="606" x2="1138.2" y2="681" stroke="#8a8a8a" stroke-width="1" /><line x1="1162.33" y1="606" x2="1162.33" y2="681" stroke="#8a8a8a" stroke-width="1" /><line x1="1186.47" y1="606" x2="1186.47" y2="681" stroke="#8a8a8a" stroke-width="1" /><line x1="1210.6" y1="606" x2="1210.6" y2="681" stroke="#8a8a8a" stroke-width="1" /><line x1="1234.73" y1="606" x2="1234.73" y2="681" stroke="#8a8a8a" stroke-width="1" /><line x1="1258.87" y1="606" x2="1258.87" y2="681" stroke="#8a8a8a" stroke-width="1" /><line x1="1283" y1="606" x2="1283" y2="681" stroke="#8a8a8a" stroke-width="1" /><line x1="1307.13" y1="606" x2="1307.13" y2="681" stroke="#8a8a8a" stroke-width="1" /><line x1="1331.27" y1="606" x2="1331.27" y2="681" stroke="#8a8a8a" stroke-width="1" /><line x1="1355.4" y1="606" x2="1355.4" y2="681" stroke="#8a8a8a" stroke-width="1" /><line x1="1379.53" y1="606" x2="1379.53" y2="681" stroke="#8a8a8a" stroke-width="1" /><line x1="1403.67" y1="606" x2="1403.67" y2="681" stroke="#8a8a8a" stroke-width="1" /><line x1="1427.8" y1="606" x2="1427.8" y2="681" stroke="#8a8a8a" stroke-width="1" /><line x1="1451.93" y1="606" x2="1451.93" y2="681" stroke="#8a8a8a" stroke-width="1" /><line x1="1476.07" y1="606" x2="1476.07" y2="681" stroke="#8a8a8a" stroke-width="1" /><line x1="1500.2" y1="606" x2="1500.2" y2="681" stroke="#8a8a8a" stroke-width="1" /><line x1="1524.33" y1="606" x2="1524.33" y2="681" stroke="#8a8a8a" stroke-width="1" /><line x1="1548.47" y1="606" x2="1548.47" y2="681" stroke="#8a8a8a" stroke-width="1" /><line x1="1572.6" y1="606" x2="1572.6" y2="681" stroke="#8a8a8a" stroke-width="1" /><line x1="703.8" y1="651" x2="1572.6" y2="651" stroke="#666666" stroke-width="1.6" /><line x1="703.8" y1="623" x2="776.2" y2="679" stroke="#cfe800" stroke-width="2.1" /><line x1="703.8" y1="623" x2="776.2" y2="679" stroke="#b0dc00" stroke-width="0.8" /><line x1="703.8" y1="679" x2="776.2" y2="623" stroke="#cfe800" stroke-width="2.1" /><line x1="703.8" y1="679" x2="776.2" y2="623" stroke="#b0dc00" stroke-width="0.8" /><line x1="776.2" y1="623" x2="848.6" y2="679" stroke="#cfe800" stroke-width="2.1" /><line x1="776.2" y1="623" x2="848.6" y2="679" stroke="#b0dc00" stroke-width="0.8" /><line x1="776.2" y1="679" x2="848.6" y2="623" stroke="#cfe800" stroke-width="2.1" /><line x1="776.2" y1="679" x2="848.6" y2="623" stroke="#b0dc00" stroke-width="0.8" /><line x1="848.6" y1="623" x2="921" y2="679" stroke="#cfe800" stroke-width="2.1" /><line x1="848.6" y1="623" x2="921" y2="679" stroke="#b0dc00" stroke-width="0.8" /><line x1="848.6" y1="679" x2="921" y2="623" stroke="#cfe800" stroke-width="2.1" /><line x1="848.6" y1="679" x2="921" y2="623" stroke="#b0dc00" stroke-width="0.8" /><line x1="921" y1="623" x2="993.4" y2="679" stroke="#cfe800" stroke-width="2.1" /><line x1="921" y1="623" x2="993.4" y2="679" stroke="#b0dc00" stroke-width="0.8" /><line x1="921" y1="679" x2="993.4" y2="623" stroke="#cfe800" stroke-width="2.1" /><line x1="921" y1="679" x2="993.4" y2="623" stroke="#b0dc00" stroke-width="0.8" /><line x1="993.4" y1="623" x2="1065.8" y2="679" stroke="#cfe800" stroke-width="2.1" /><line x1="993.4" y1="623" x2="1065.8" y2="679" stroke="#b0dc00" stroke-width="0.8" /><line x1="993.4" y1="679" x2="1065.8" y2="623" stroke="#cfe800" stroke-width="2.1" /><line x1="993.4" y1="679" x2="1065.8" y2="623" stroke="#b0dc00" stroke-width="0.8" /><line x1="1065.8" y1="623" x2="1138.2" y2="679" stroke="#cfe800" stroke-width="2.1" /><line x1="1065.8" y1="623" x2="1138.2" y2="679" stroke="#b0dc00" stroke-width="0.8" /><line x1="1065.8" y1="679" x2="1138.2" y2="623" stroke="#cfe800" stroke-width="2.1" /><line x1="1065.8" y1="679" x2="1138.2" y2="623" stroke="#b0dc00" stroke-width="0.8" /><line x1="1138.2" y1="623" x2="1210.6" y2="679" stroke="#cfe800" stroke-width="2.1" /><line x1="1138.2" y1="623" x2="1210.6" y2="679" stroke="#b0dc00" stroke-width="0.8" /><line x1="1138.2" y1="679" x2="1210.6" y2="623" stroke="#cfe800" stroke-width="2.1" /><line x1="1138.2" y1="679" x2="1210.6" y2="623" stroke="#b0dc00" stroke-width="0.8" /><line x1="1210.6" y1="623" x2="1283" y2="679" stroke="#cfe800" stroke-width="2.1" /><line x1="1210.6" y1="623" x2="1283" y2="679" stroke="#b0dc00" stroke-width="0.8" /><line x1="1210.6" y1="679" x2="1283" y2="623" stroke="#cfe800" stroke-width="2.1" /><line x1="1210.6" y1="679" x2="1283" y2="623" stroke="#b0dc00" stroke-width="0.8" /><line x1="1283" y1="623" x2="1355.4" y2="679" stroke="#cfe800" stroke-width="2.1" /><line x1="1283" y1="623" x2="1355.4" y2="679" stroke="#b0dc00" stroke-width="0.8" /><line x1="1283" y1="679" x2="1355.4" y2="623" stroke="#cfe800" stroke-width="2.1" /><line x1="1283" y1="679" x2="1355.4" y2="623" stroke="#b0dc00" stroke-width="0.8" /><line x1="1355.4" y1="623" x2="1427.8" y2="679" stroke="#cfe800" stroke-width="2.1" /><line x1="1355.4" y1="623" x2="1427.8" y2="679" stroke="#b0dc00" stroke-width="0.8" /><line x1="1355.4" y1="679" x2="1427.8" y2="623" stroke="#cfe800" stroke-width="2.1" /><line x1="1355.4" y1="679" x2="1427.8" y2="623" stroke="#b0dc00" stroke-width="0.8" /><line x1="1427.8" y1="623" x2="1500.2" y2="679" stroke="#cfe800" stroke-width="2.1" /><line x1="1427.8" y1="623" x2="1500.2" y2="679" stroke="#b0dc00" stroke-width="0.8" /><line x1="1427.8" y1="679" x2="1500.2" y2="623" stroke="#cfe800" stroke-width="2.1" /><line x1="1427.8" y1="679" x2="1500.2" y2="623" stroke="#b0dc00" stroke-width="0.8" /><line x1="1500.2" y1="623" x2="1572.6" y2="679" stroke="#cfe800" stroke-width="2.1" /><line x1="1500.2" y1="623" x2="1572.6" y2="679" stroke="#b0dc00" stroke-width="0.8" /><line x1="1500.2" y1="679" x2="1572.6" y2="623" stroke="#cfe800" stroke-width="2.1" /><line x1="1500.2" y1="679" x2="1572.6" y2="623" stroke="#b0dc00" stroke-width="0.8" /><line x1="746.75" y1="625" x2="746.75" y2="678" stroke="#cfe800" stroke-width="2.4" /><line x1="805.65" y1="625" x2="805.65" y2="678" stroke="#cfe800" stroke-width="2.4" /><line x1="891.55" y1="625" x2="891.55" y2="678" stroke="#cfe800" stroke-width="2.4" /><line x1="950.45" y1="625" x2="950.45" y2="678" stroke="#cfe800" stroke-width="2.4" /><line x1="1036.35" y1="625" x2="1036.35" y2="678" stroke="#cfe800" stroke-width="2.4" /><line x1="1095.25" y1="625" x2="1095.25" y2="678" stroke="#cfe800" stroke-width="2.4" /><line x1="1181.15" y1="625" x2="1181.15" y2="678" stroke="#cfe800" stroke-width="2.4" /><line x1="1240.05" y1="625" x2="1240.05" y2="678" stroke="#cfe800" stroke-width="2.4" /><line x1="1325.95" y1="625" x2="1325.95" y2="678" stroke="#cfe800" stroke-width="2.4" /><line x1="1384.85" y1="625" x2="1384.85" y2="678" stroke="#cfe800" stroke-width="2.4" /><line x1="1470.75" y1="625" x2="1470.75" y2="678" stroke="#cfe800" stroke-width="2.4" /><line x1="1529.65" y1="625" x2="1529.65" y2="678" stroke="#cfe800" stroke-width="2.4" /><line x1="703.8" y1="621.1" x2="1572.6" y2="621.1" stroke="#cfe800" stroke-width="1.2" /><line x1="703.8" y1="624" x2="1572.6" y2="624" stroke="#cfe800" stroke-width="1.8" /><line x1="703.8" y1="641.5" x2="1572.6" y2="641.5" stroke="#cfe800" stroke-width="2.4" /><line x1="703.8" y1="660.6" x2="1572.6" y2="660.6" stroke="#cfe800" stroke-width="2.4" /><line x1="703.8" y1="678.3" x2="1572.6" y2="678.3" stroke="#cfe800" stroke-width="1.8" /><line x1="703.8" y1="680.8" x2="1572.6" y2="680.8" stroke="#cfe800" stroke-width="1.2" /><line x1="704.4" y1="621" x2="704.4" y2="681" stroke="#cfe800" stroke-width="2" /><line x1="1572.2" y1="621" x2="1572.2" y2="681" stroke="#cfe800" stroke-width="2" /><line x1="1573.8" y1="628" x2="1573.8" y2="681" stroke="#4bd000" stroke-width="1.3" /><line x1="717.3" y1="594" x2="717.3" y2="621" stroke="#e8e8e8" stroke-width="1.2" /><line x1="717.3" y1="621" x2="717.3" y2="681" stroke="#a8b040" stroke-width="1.5" /><line x1="717.3" y1="681" x2="717.3" y2="695.5" stroke="#3ee000" stroke-width="1.8" /><line x1="717.3" y1="607" x2="717.3" y2="620" stroke="#7ad000" stroke-width="1.2" /><line x1="776.2" y1="594" x2="776.2" y2="621" stroke="#e8e8e8" stroke-width="1.2" /><line x1="776.2" y1="621" x2="776.2" y2="681" stroke="#cfe800" stroke-width="2" /><line x1="776.2" y1="681" x2="776.2" y2="695.5" stroke="#3ee000" stroke-width="1.8" /><line x1="776.2" y1="607" x2="776.2" y2="620" stroke="#7ad000" stroke-width="1.2" /><line x1="835.1" y1="594" x2="835.1" y2="621" stroke="#e8e8e8" stroke-width="1.2" /><line x1="835.1" y1="621" x2="835.1" y2="681" stroke="#a8b040" stroke-width="1.5" /><line x1="835.1" y1="681" x2="835.1" y2="695.5" stroke="#3ee000" stroke-width="1.8" /><line x1="835.1" y1="607" x2="835.1" y2="620" stroke="#7ad000" stroke-width="1.2" /><line x1="862.1" y1="594" x2="862.1" y2="621" stroke="#e8e8e8" stroke-width="1.2" /><line x1="862.1" y1="621" x2="862.1" y2="681" stroke="#a8b040" stroke-width="1.5" /><line x1="862.1" y1="681" x2="862.1" y2="695.5" stroke="#3ee000" stroke-width="1.8" /><line x1="862.1" y1="607" x2="862.1" y2="620" stroke="#7ad000" stroke-width="1.2" /><line x1="921" y1="594" x2="921" y2="621" stroke="#e8e8e8" stroke-width="1.2" /><line x1="921" y1="621" x2="921" y2="681" stroke="#cfe800" stroke-width="2" /><line x1="921" y1="681" x2="921" y2="695.5" stroke="#3ee000" stroke-width="1.8" /><line x1="921" y1="607" x2="921" y2="620" stroke="#7ad000" stroke-width="1.2" /><line x1="979.9" y1="594" x2="979.9" y2="621" stroke="#e8e8e8" stroke-width="1.2" /><line x1="979.9" y1="621" x2="979.9" y2="681" stroke="#a8b040" stroke-width="1.5" /><line x1="979.9" y1="681" x2="979.9" y2="695.5" stroke="#3ee000" stroke-width="1.8" /><line x1="979.9" y1="607" x2="979.9" y2="620" stroke="#7ad000" stroke-width="1.2" /><line x1="1006.9" y1="594" x2="1006.9" y2="621" stroke="#e8e8e8" stroke-width="1.2" /><line x1="1006.9" y1="621" x2="1006.9" y2="681" stroke="#a8b040" stroke-width="1.5" /><line x1="1006.9" y1="681" x2="1006.9" y2="695.5" stroke="#3ee000" stroke-width="1.8" /><line x1="1006.9" y1="607" x2="1006.9" y2="620" stroke="#7ad000" stroke-width="1.2" /><line x1="1065.8" y1="594" x2="1065.8" y2="621" stroke="#e8e8e8" stroke-width="1.2" /><line x1="1065.8" y1="621" x2="1065.8" y2="681" stroke="#cfe800" stroke-width="2" /><line x1="1065.8" y1="681" x2="1065.8" y2="695.5" stroke="#3ee000" stroke-width="1.8" /><line x1="1065.8" y1="607" x2="1065.8" y2="620" stroke="#7ad000" stroke-width="1.2" /><line x1="1124.7" y1="594" x2="1124.7" y2="621" stroke="#e8e8e8" stroke-width="1.2" /><line x1="1124.7" y1="621" x2="1124.7" y2="681" stroke="#a8b040" stroke-width="1.5" /><line x1="1124.7" y1="681" x2="1124.7" y2="695.5" stroke="#3ee000" stroke-width="1.8" /><line x1="1124.7" y1="607" x2="1124.7" y2="620" stroke="#7ad000" stroke-width="1.2" /><line x1="1151.7" y1="594" x2="1151.7" y2="621" stroke="#e8e8e8" stroke-width="1.2" /><line x1="1151.7" y1="621" x2="1151.7" y2="681" stroke="#a8b040" stroke-width="1.5" /><line x1="1151.7" y1="681" x2="1151.7" y2="695.5" stroke="#3ee000" stroke-width="1.8" /><line x1="1151.7" y1="607" x2="1151.7" y2="620" stroke="#7ad000" stroke-width="1.2" /><line x1="1210.6" y1="594" x2="1210.6" y2="621" stroke="#e8e8e8" stroke-width="1.2" /><line x1="1210.6" y1="621" x2="1210.6" y2="681" stroke="#cfe800" stroke-width="2" /><line x1="1210.6" y1="681" x2="1210.6" y2="695.5" stroke="#3ee000" stroke-width="1.8" /><line x1="1210.6" y1="607" x2="1210.6" y2="620" stroke="#7ad000" stroke-width="1.2" /><line x1="1269.5" y1="594" x2="1269.5" y2="621" stroke="#e8e8e8" stroke-width="1.2" /><line x1="1269.5" y1="621" x2="1269.5" y2="681" stroke="#a8b040" stroke-width="1.5" /><line x1="1269.5" y1="681" x2="1269.5" y2="695.5" stroke="#3ee000" stroke-width="1.8" /><line x1="1269.5" y1="607" x2="1269.5" y2="620" stroke="#7ad000" stroke-width="1.2" /><line x1="1296.5" y1="594" x2="1296.5" y2="621" stroke="#e8e8e8" stroke-width="1.2" /><line x1="1296.5" y1="621" x2="1296.5" y2="681" stroke="#a8b040" stroke-width="1.5" /><line x1="1296.5" y1="681" x2="1296.5" y2="695.5" stroke="#3ee000" stroke-width="1.8" /><line x1="1296.5" y1="607" x2="1296.5" y2="620" stroke="#7ad000" stroke-width="1.2" /><line x1="1355.4" y1="594" x2="1355.4" y2="621" stroke="#e8e8e8" stroke-width="1.2" /><line x1="1355.4" y1="621" x2="1355.4" y2="681" stroke="#cfe800" stroke-width="2" /><line x1="1355.4" y1="681" x2="1355.4" y2="695.5" stroke="#3ee000" stroke-width="1.8" /><line x1="1355.4" y1="607" x2="1355.4" y2="620" stroke="#7ad000" stroke-width="1.2" /><line x1="1414.3" y1="594" x2="1414.3" y2="621" stroke="#e8e8e8" stroke-width="1.2" /><line x1="1414.3" y1="621" x2="1414.3" y2="681" stroke="#a8b040" stroke-width="1.5" /><line x1="1414.3" y1="681" x2="1414.3" y2="695.5" stroke="#3ee000" stroke-width="1.8" /><line x1="1414.3" y1="607" x2="1414.3" y2="620" stroke="#7ad000" stroke-width="1.2" /><line x1="1441.3" y1="594" x2="1441.3" y2="621" stroke="#e8e8e8" stroke-width="1.2" /><line x1="1441.3" y1="621" x2="1441.3" y2="681" stroke="#a8b040" stroke-width="1.5" /><line x1="1441.3" y1="681" x2="1441.3" y2="695.5" stroke="#3ee000" stroke-width="1.8" /><line x1="1441.3" y1="607" x2="1441.3" y2="620" stroke="#7ad000" stroke-width="1.2" /><line x1="1500.2" y1="594" x2="1500.2" y2="621" stroke="#e8e8e8" stroke-width="1.2" /><line x1="1500.2" y1="621" x2="1500.2" y2="681" stroke="#cfe800" stroke-width="2" /><line x1="1500.2" y1="681" x2="1500.2" y2="695.5" stroke="#3ee000" stroke-width="1.8" /><line x1="1500.2" y1="607" x2="1500.2" y2="620" stroke="#7ad000" stroke-width="1.2" /><line x1="1559.1" y1="594" x2="1559.1" y2="621" stroke="#e8e8e8" stroke-width="1.2" /><line x1="1559.1" y1="621" x2="1559.1" y2="681" stroke="#a8b040" stroke-width="1.5" /><line x1="1559.1" y1="681" x2="1559.1" y2="695.5" stroke="#3ee000" stroke-width="1.8" /><line x1="1559.1" y1="607" x2="1559.1" y2="620" stroke="#7ad000" stroke-width="1.2" /><line x1="848.6" y1="621" x2="848.6" y2="683" stroke="#3c9a22" stroke-width="2" /><line x1="993.4" y1="621" x2="993.4" y2="683" stroke="#3c9a22" stroke-width="2" /><line x1="1138.2" y1="621" x2="1138.2" y2="683" stroke="#3c9a22" stroke-width="2" /><line x1="1283" y1="621" x2="1283" y2="683" stroke="#3c9a22" stroke-width="2" /><line x1="1427.8" y1="621" x2="1427.8" y2="683" stroke="#3c9a22" stroke-width="2" /><rect x="702.7" y="622.1" width="2.2" height="2.2" fill="#35d435" /><rect x="702.7" y="677.9" width="2.2" height="2.2" fill="#35d435" /><rect x="726.833" y="622.1" width="2.2" height="2.2" fill="#35d435" /><rect x="726.833" y="677.9" width="2.2" height="2.2" fill="#35d435" /><rect x="750.967" y="622.1" width="2.2" height="2.2" fill="#35d435" /><rect x="750.967" y="677.9" width="2.2" height="2.2" fill="#35d435" /><rect x="775.1" y="622.1" width="2.2" height="2.2" fill="#35d435" /><rect x="775.1" y="677.9" width="2.2" height="2.2" fill="#35d435" /><rect x="799.233" y="622.1" width="2.2" height="2.2" fill="#35d435" /><rect x="799.233" y="677.9" width="2.2" height="2.2" fill="#35d435" /><rect x="823.367" y="622.1" width="2.2" height="2.2" fill="#35d435" /><rect x="823.367" y="677.9" width="2.2" height="2.2" fill="#35d435" /><rect x="847.5" y="622.1" width="2.2" height="2.2" fill="#35d435" /><rect x="847.5" y="677.9" width="2.2" height="2.2" fill="#35d435" /><rect x="871.633" y="622.1" width="2.2" height="2.2" fill="#35d435" /><rect x="871.633" y="677.9" width="2.2" height="2.2" fill="#35d435" /><rect x="895.767" y="622.1" width="2.2" height="2.2" fill="#35d435" /><rect x="895.767" y="677.9" width="2.2" height="2.2" fill="#35d435" /><rect x="919.9" y="622.1" width="2.2" height="2.2" fill="#35d435" /><rect x="919.9" y="677.9" width="2.2" height="2.2" fill="#35d435" /><rect x="944.033" y="622.1" width="2.2" height="2.2" fill="#35d435" /><rect x="944.033" y="677.9" width="2.2" height="2.2" fill="#35d435" /><rect x="968.167" y="622.1" width="2.2" height="2.2" fill="#35d435" /><rect x="968.167" y="677.9" width="2.2" height="2.2" fill="#35d435" /><rect x="992.3" y="622.1" width="2.2" height="2.2" fill="#35d435" /><rect x="992.3" y="677.9" width="2.2" height="2.2" fill="#35d435" /><rect x="1016.43" y="622.1" width="2.2" height="2.2" fill="#35d435" /><rect x="1016.43" y="677.9" width="2.2" height="2.2" fill="#35d435" /><rect x="1040.57" y="622.1" width="2.2" height="2.2" fill="#35d435" /><rect x="1040.57" y="677.9" width="2.2" height="2.2" fill="#35d435" /><rect x="1064.7" y="622.1" width="2.2" height="2.2" fill="#35d435" /><rect x="1064.7" y="677.9" width="2.2" height="2.2" fill="#35d435" /><rect x="1088.83" y="622.1" width="2.2" height="2.2" fill="#35d435" /><rect x="1088.83" y="677.9" width="2.2" height="2.2" fill="#35d435" /><rect x="1112.97" y="622.1" width="2.2" height="2.2" fill="#35d435" /><rect x="1112.97" y="677.9" width="2.2" height="2.2" fill="#35d435" /><rect x="1137.1" y="622.1" width="2.2" height="2.2" fill="#35d435" /><rect x="1137.1" y="677.9" width="2.2" height="2.2" fill="#35d435" /><rect x="1161.23" y="622.1" width="2.2" height="2.2" fill="#35d435" /><rect x="1161.23" y="677.9" width="2.2" height="2.2" fill="#35d435" /><rect x="1185.37" y="622.1" width="2.2" height="2.2" fill="#35d435" /><rect x="1185.37" y="677.9" width="2.2" height="2.2" fill="#35d435" /><rect x="1209.5" y="622.1" width="2.2" height="2.2" fill="#35d435" /><rect x="1209.5" y="677.9" width="2.2" height="2.2" fill="#35d435" /><rect x="1233.63" y="622.1" width="2.2" height="2.2" fill="#35d435" /><rect x="1233.63" y="677.9" width="2.2" height="2.2" fill="#35d435" /><rect x="1257.77" y="622.1" width="2.2" height="2.2" fill="#35d435" /><rect x="1257.77" y="677.9" width="2.2" height="2.2" fill="#35d435" /><rect x="1281.9" y="622.1" width="2.2" height="2.2" fill="#35d435" /><rect x="1281.9" y="677.9" width="2.2" height="2.2" fill="#35d435" /><rect x="1306.03" y="622.1" width="2.2" height="2.2" fill="#35d435" /><rect x="1306.03" y="677.9" width="2.2" height="2.2" fill="#35d435" /><rect x="1330.17" y="622.1" width="2.2" height="2.2" fill="#35d435" /><rect x="1330.17" y="677.9" width="2.2" height="2.2" fill="#35d435" /><rect x="1354.3" y="622.1" width="2.2" height="2.2" fill="#35d435" /><rect x="1354.3" y="677.9" width="2.2" height="2.2" fill="#35d435" /><rect x="1378.43" y="622.1" width="2.2" height="2.2" fill="#35d435" /><rect x="1378.43" y="677.9" width="2.2" height="2.2" fill="#35d435" /><rect x="1402.57" y="622.1" width="2.2" height="2.2" fill="#35d435" /><rect x="1402.57" y="677.9" width="2.2" height="2.2" fill="#35d435" /><rect x="1426.7" y="622.1" width="2.2" height="2.2" fill="#35d435" /><rect x="1426.7" y="677.9" width="2.2" height="2.2" fill="#35d435" /><rect x="1450.83" y="622.1" width="2.2" height="2.2" fill="#35d435" /><rect x="1450.83" y="677.9" width="2.2" height="2.2" fill="#35d435" /><rect x="1474.97" y="622.1" width="2.2" height="2.2" fill="#35d435" /><rect x="1474.97" y="677.9" width="2.2" height="2.2" fill="#35d435" /><rect x="1499.1" y="622.1" width="2.2" height="2.2" fill="#35d435" /><rect x="1499.1" y="677.9" width="2.2" height="2.2" fill="#35d435" /><rect x="1523.23" y="622.1" width="2.2" height="2.2" fill="#35d435" /><rect x="1523.23" y="677.9" width="2.2" height="2.2" fill="#35d435" /><rect x="1547.37" y="622.1" width="2.2" height="2.2" fill="#35d435" /><rect x="1547.37" y="677.9" width="2.2" height="2.2" fill="#35d435" /><rect x="1571.5" y="622.1" width="2.2" height="2.2" fill="#35d435" /><rect x="1571.5" y="677.9" width="2.2" height="2.2" fill="#35d435" /><line x1="677.5" y1="617.8" x2="677.5" y2="684.2" stroke="#dadada" stroke-width="1.7" /><line x1="673.9" y1="621" x2="679.5" y2="621" stroke="#dadada" stroke-width="1.5" /><path d="M675.8,622.7 L679.2,619.3" stroke="#dadada" stroke-width="1.3"/><line x1="673.9" y1="681" x2="679.5" y2="681" stroke="#dadada" stroke-width="1.5" /><path d="M675.8,682.7 L679.2,679.3" stroke="#dadada" stroke-width="1.3"/><line x1="692.5" y1="617.8" x2="692.5" y2="684.2" stroke="#dadada" stroke-width="1.7" /><line x1="688.9" y1="621" x2="694.5" y2="621" stroke="#dadada" stroke-width="1.5" /><path d="M690.8,622.7 L694.2,619.3" stroke="#dadada" stroke-width="1.3"/><line x1="688.9" y1="641.5" x2="694.5" y2="641.5" stroke="#dadada" stroke-width="1.5" /><path d="M690.8,643.2 L694.2,639.8" stroke="#dadada" stroke-width="1.3"/><line x1="688.9" y1="661" x2="694.5" y2="661" stroke="#dadada" stroke-width="1.5" /><path d="M690.8,662.7 L694.2,659.3" stroke="#dadada" stroke-width="1.3"/><line x1="688.9" y1="681" x2="694.5" y2="681" stroke="#dadada" stroke-width="1.5" /><path d="M690.8,682.7 L694.2,679.3" stroke="#dadada" stroke-width="1.3"/><line x1="674" y1="621" x2="703.8" y2="621" stroke="#dadada" stroke-width="1.2" /><line x1="674" y1="681" x2="703.8" y2="681" stroke="#dadada" stroke-width="1.2" /><line x1="689" y1="641.5" x2="703.8" y2="641.5" stroke="#dadada" stroke-width="1.1" /><line x1="689" y1="661" x2="703.8" y2="661" stroke="#dadada" stroke-width="1.1" /><rect x="686.25" y="626.55" width="5.5" height="8.9" fill="#00ff00"/><rect x="686.25" y="646.05" width="5.5" height="8.9" fill="#00ff00"/><rect x="686.25" y="666.05" width="5.5" height="8.9" fill="#00ff00"/><rect x="671.55" y="644.55" width="5.5" height="11.9" fill="#00ff00"/><line x1="1585" y1="602.8" x2="1585" y2="698.7" stroke="#dadada" stroke-width="1.7" /><line x1="1581.4" y1="606" x2="1587" y2="606" stroke="#dadada" stroke-width="1.5" /><path d="M1583.3,607.7 L1586.7,604.3" stroke="#dadada" stroke-width="1.3"/><line x1="1581.4" y1="621" x2="1587" y2="621" stroke="#dadada" stroke-width="1.5" /><path d="M1583.3,622.7 L1586.7,619.3" stroke="#dadada" stroke-width="1.3"/><line x1="1581.4" y1="680.5" x2="1587" y2="680.5" stroke="#dadada" stroke-width="1.5" /><path d="M1583.3,682.2 L1586.7,678.8" stroke="#dadada" stroke-width="1.3"/><line x1="1581.4" y1="695.5" x2="1587" y2="695.5" stroke="#dadada" stroke-width="1.5" /><path d="M1583.3,697.2 L1586.7,693.8" stroke="#dadada" stroke-width="1.3"/><line x1="1596.5" y1="602.8" x2="1596.5" y2="698.7" stroke="#dadada" stroke-width="1.7" /><line x1="1592.9" y1="606" x2="1598.5" y2="606" stroke="#dadada" stroke-width="1.5" /><path d="M1594.8,607.7 L1598.2,604.3" stroke="#dadada" stroke-width="1.3"/><line x1="1592.9" y1="695.5" x2="1598.5" y2="695.5" stroke="#dadada" stroke-width="1.5" /><path d="M1594.8,697.2 L1598.2,693.8" stroke="#dadada" stroke-width="1.3"/><line x1="1560" y1="606" x2="1600" y2="606" stroke="#dadada" stroke-width="1.3" /><line x1="1560" y1="695.5" x2="1600" y2="695.5" stroke="#dadada" stroke-width="1.3" /><line x1="1572" y1="621" x2="1589" y2="621" stroke="#dadada" stroke-width="1.1" /><line x1="1572" y1="680.5" x2="1589" y2="680.5" stroke="#dadada" stroke-width="1.1" /><line x1="1560" y1="606" x2="1560" y2="620" stroke="#dadada" stroke-width="1" /><line x1="1560" y1="681" x2="1560" y2="695.5" stroke="#3ee000" stroke-width="1.4" /><rect x="1579.25" y="608.55" width="5.5" height="8.9" fill="#00ff00"/><rect x="1579.25" y="646.05" width="5.5" height="8.9" fill="#00ff00"/><rect x="1579.25" y="683.05" width="5.5" height="8.9" fill="#00ff00"/><rect x="1590.55" y="644.55" width="5.5" height="11.9" fill="#00ff00"/><rect x="1040" y="613" width="34" height="6" fill="#00ff00" /><rect x="1046" y="608" width="9" height="5.5" fill="#00ff00" /><rect x="1040" y="683" width="35" height="6" fill="#00ff00" /><path d="M1136,618.5 q3,-2.5 6,0 q3.5,2 1.5,6 q3,5 2,10 q4,6 3,12 q3,8 0,15 q2,8 -3,13 q-1,9 -6,10 q-4,4 -7,-1 q-3,-6 -1.5,-12 q-2.5,-6 0,-11 q-1,-7 1,-13 q0,-7 2,-13 q-1.5,-6 0,-11 q-1.5,-4 2,-5 z" fill="none" stroke="#ececec" stroke-width="1.2"/><text x="1140" y="673" font-size="6.5" fill="#aaa">A</text><circle cx="775.5" cy="716.7" r="6.7" fill="none" stroke="#e0e0e0" stroke-width="1.1"/><text x="775.5" y="719.9" font-size="9" fill="#e0e0e0" text-anchor="middle">1</text><circle cx="920" cy="710" r="6.7" fill="none" stroke="#e0e0e0" stroke-width="1.1"/><text x="920" y="713.2" font-size="9" fill="#e0e0e0" text-anchor="middle">2</text><circle cx="1064.5" cy="710" r="6.7" fill="none" stroke="#e0e0e0" stroke-width="1.1"/><text x="1064.5" y="713.2" font-size="9" fill="#e0e0e0" text-anchor="middle">2</text><circle cx="1209" cy="710" r="6.7" fill="none" stroke="#e0e0e0" stroke-width="1.1"/><text x="1209" y="713.2" font-size="9" fill="#e0e0e0" text-anchor="middle">2</text><circle cx="1353.7" cy="710" r="6.7" fill="none" stroke="#e0e0e0" stroke-width="1.1"/><text x="1353.7" y="713.2" font-size="9" fill="#e0e0e0" text-anchor="middle">2</text><circle cx="1498" cy="710" r="6.7" fill="none" stroke="#e0e0e0" stroke-width="1.1"/><text x="1498" y="713.2" font-size="9" fill="#e0e0e0" text-anchor="middle">1</text><text x="1053" y="740" font-size="8" fill="#c4c4c4" textLength="147.7" lengthAdjust="spacingAndGlyphs">GENERAL  ARRANGEMENT  OF  STEELWORK.</text><line x1="1053" y1="742.2" x2="1200.7" y2="742.2" stroke="#c4c4c4" stroke-width="1" /><line x1="1631" y1="583" x2="1631" y2="828" stroke="#dadada" stroke-width="1.2" /><line x1="1649.5" y1="583" x2="1649.5" y2="828" stroke="#dadada" stroke-width="1.2" /><line x1="1717.5" y1="588" x2="1717.5" y2="823" stroke="#dadada" stroke-width="1.2" /><line x1="1628" y1="587" x2="1662" y2="587" stroke="#dadada" stroke-width="1.2" /><line x1="1628" y1="825" x2="1662" y2="825" stroke="#dadada" stroke-width="1.2" /><path d="M1629.3,588.7 L1632.7,585.3" stroke="#dadada" stroke-width="1.3"/><path d="M1647.8,588.7 L1651.2,585.3" stroke="#dadada" stroke-width="1.3"/><path d="M1629.3,826.7 L1632.7,823.3" stroke="#dadada" stroke-width="1.3"/><path d="M1647.8,826.7 L1651.2,823.3" stroke="#dadada" stroke-width="1.3"/><line x1="1647" y1="608.7" x2="1684" y2="608.7" stroke="#e0e0e0" stroke-width="1.3" /><path d="M1647.5,610.7 L1651.5,606.7" stroke="#dadada" stroke-width="1.3"/><line x1="1647" y1="624.9" x2="1684" y2="624.9" stroke="#e0e0e0" stroke-width="1.3" /><path d="M1647.5,626.9 L1651.5,622.9" stroke="#dadada" stroke-width="1.3"/><line x1="1647" y1="641.1" x2="1684" y2="641.1" stroke="#e0e0e0" stroke-width="1.3" /><path d="M1647.5,643.1 L1651.5,639.1" stroke="#dadada" stroke-width="1.3"/><line x1="1647" y1="657.3" x2="1684" y2="657.3" stroke="#e0e0e0" stroke-width="1.3" /><path d="M1647.5,659.3 L1651.5,655.3" stroke="#dadada" stroke-width="1.3"/><line x1="1647" y1="673.5" x2="1684" y2="673.5" stroke="#e0e0e0" stroke-width="1.3" /><path d="M1647.5,675.5 L1651.5,671.5" stroke="#dadada" stroke-width="1.3"/><line x1="1647" y1="689.7" x2="1684" y2="689.7" stroke="#e0e0e0" stroke-width="1.3" /><path d="M1647.5,691.7 L1651.5,687.7" stroke="#dadada" stroke-width="1.3"/><line x1="1647" y1="705.9" x2="1684" y2="705.9" stroke="#e0e0e0" stroke-width="1.3" /><path d="M1647.5,707.9 L1651.5,703.9" stroke="#dadada" stroke-width="1.3"/><line x1="1647" y1="722.1" x2="1684" y2="722.1" stroke="#e0e0e0" stroke-width="1.3" /><path d="M1647.5,724.1 L1651.5,720.1" stroke="#dadada" stroke-width="1.3"/><line x1="1647" y1="738.3" x2="1684" y2="738.3" stroke="#e0e0e0" stroke-width="1.3" /><path d="M1647.5,740.3 L1651.5,736.3" stroke="#dadada" stroke-width="1.3"/><line x1="1647" y1="754.5" x2="1684" y2="754.5" stroke="#e0e0e0" stroke-width="1.3" /><path d="M1647.5,756.5 L1651.5,752.5" stroke="#dadada" stroke-width="1.3"/><line x1="1647" y1="770.7" x2="1684" y2="770.7" stroke="#e0e0e0" stroke-width="1.3" /><path d="M1647.5,772.7 L1651.5,768.7" stroke="#dadada" stroke-width="1.3"/><line x1="1647" y1="786.9" x2="1684" y2="786.9" stroke="#e0e0e0" stroke-width="1.3" /><path d="M1647.5,788.9 L1651.5,784.9" stroke="#dadada" stroke-width="1.3"/><line x1="1647" y1="803.1" x2="1684" y2="803.1" stroke="#e0e0e0" stroke-width="1.3" /><path d="M1647.5,805.1 L1651.5,801.1" stroke="#dadada" stroke-width="1.3"/><rect x="1644" y="593.5" width="4.8" height="7" fill="#00ff00" /><rect x="1644" y="609.7" width="4.8" height="7" fill="#00ff00" /><rect x="1644" y="625.9" width="4.8" height="7" fill="#00ff00" /><rect x="1644" y="642.1" width="4.8" height="7" fill="#00ff00" /><rect x="1644" y="658.3" width="4.8" height="7" fill="#00ff00" /><rect x="1644" y="674.5" width="4.8" height="7" fill="#00ff00" /><rect x="1644" y="690.7" width="4.8" height="7" fill="#00ff00" /><rect x="1644" y="706.9" width="4.8" height="7" fill="#00ff00" /><rect x="1644" y="723.1" width="4.8" height="7" fill="#00ff00" /><rect x="1644" y="739.3" width="4.8" height="7" fill="#00ff00" /><rect x="1644" y="755.5" width="4.8" height="7" fill="#00ff00" /><rect x="1644" y="771.7" width="4.8" height="7" fill="#00ff00" /><rect x="1644" y="787.9" width="4.8" height="7" fill="#00ff00" /><rect x="1644" y="804.1" width="4.8" height="7" fill="#00ff00" /><line x1="1682.6" y1="590" x2="1682.6" y2="826" stroke="#77772e" stroke-width="2.6" /><line x1="1681.2" y1="590" x2="1681.2" y2="826" stroke="#b4b400" stroke-width="0.8" /><line x1="1684" y1="590" x2="1684" y2="826" stroke="#b4b400" stroke-width="0.8" /><line x1="1678" y1="600" x2="1678" y2="815" stroke="#19e619" stroke-width="0.9" /><line x1="1687.5" y1="590" x2="1687.5" y2="826" stroke="#19e619" stroke-width="1.2" /><rect x="1660" y="587.5" width="45" height="8.5" fill="#0c0c08" /><path d="M1660,587.5 H1705 M1660,596 H1705" fill="none" stroke="#f2f200" stroke-width="1.2"/><path d="M1660,591.75 H1705" fill="none" stroke="#6e6e5a" stroke-width="2.4"/><path d="M1660,586.5 V597 M1705,586.5 V597" fill="none" stroke="#d8d8d8" stroke-width="0.9"/><line x1="1705" y1="591.75" x2="1721" y2="591.75" stroke="#dadada" stroke-width="1.2" /><path d="M1715.8,593.45 L1719.2,590.05" stroke="#dadada" stroke-width="1.3"/><rect x="1660" y="665" width="45" height="6.5" fill="#0c0c08" /><path d="M1660,665 H1705 M1660,671.5 H1705" fill="none" stroke="#f2f200" stroke-width="1.2"/><path d="M1660,668.25 H1705" fill="none" stroke="#6e6e5a" stroke-width="2.4"/><path d="M1660,664 V672.5 M1705,664 V672.5" fill="none" stroke="#d8d8d8" stroke-width="0.9"/><line x1="1705" y1="668.25" x2="1721" y2="668.25" stroke="#dadada" stroke-width="1.2" /><path d="M1715.8,669.95 L1719.2,666.55" stroke="#dadada" stroke-width="1.3"/><rect x="1660" y="741" width="45" height="6.5" fill="#0c0c08" /><path d="M1660,741 H1705 M1660,747.5 H1705" fill="none" stroke="#f2f200" stroke-width="1.2"/><path d="M1660,744.25 H1705" fill="none" stroke="#6e6e5a" stroke-width="2.4"/><path d="M1660,740 V748.5 M1705,740 V748.5" fill="none" stroke="#d8d8d8" stroke-width="0.9"/><line x1="1705" y1="744.25" x2="1721" y2="744.25" stroke="#dadada" stroke-width="1.2" /><path d="M1715.8,745.95 L1719.2,742.55" stroke="#dadada" stroke-width="1.3"/><rect x="1660" y="814.5" width="45" height="10.5" fill="#0c0c08" /><path d="M1660,814.5 H1705 M1660,825 H1705" fill="none" stroke="#f2f200" stroke-width="1.2"/><path d="M1660,819.75 H1705" fill="none" stroke="#6e6e5a" stroke-width="2.4"/><path d="M1660,813.5 V826 M1705,813.5 V826" fill="none" stroke="#d8d8d8" stroke-width="0.9"/><line x1="1705" y1="819.75" x2="1721" y2="819.75" stroke="#dadada" stroke-width="1.2" /><path d="M1715.8,821.45 L1719.2,818.05" stroke="#dadada" stroke-width="1.3"/><line x1="1682.5" y1="593" x2="1661.5" y2="609" stroke="#d8d8d8" stroke-width="4" /><line x1="1682.5" y1="593" x2="1661.5" y2="609" stroke="#8f8f2a" stroke-width="2" /><line x1="1682.5" y1="820" x2="1661.5" y2="802" stroke="#d8d8d8" stroke-width="4" /><line x1="1682.5" y1="820" x2="1661.5" y2="802" stroke="#9fbf00" stroke-width="2" /><line x1="1682.5" y1="593" x2="1704" y2="609" stroke="#d8d8d8" stroke-width="4" /><line x1="1682.5" y1="593" x2="1704" y2="609" stroke="#8f8f2a" stroke-width="2" /><line x1="1682.5" y1="820" x2="1704" y2="802" stroke="#d8d8d8" stroke-width="4" /><line x1="1682.5" y1="820" x2="1704" y2="802" stroke="#9fbf00" stroke-width="2" /><path d="M1676,592 h13 M1682.5,586 v12 M1676,820 h13" fill="none" stroke="#19e619" stroke-width="1"/><rect x="1690" y="652.5" width="4.5" height="83" fill="#00ff00" /><rect x="1694.5" y="686" width="3" height="46.5" fill="#00ff00" /><rect x="1711.25" y="624.25" width="5.5" height="8.9" fill="#00ff00"/><rect x="1711.25" y="700.05" width="5.5" height="8.9" fill="#00ff00"/><rect x="1711.25" y="776.05" width="5.5" height="8.9" fill="#00ff00"/><rect x="1625.95" y="698.55" width="5.5" height="11.9" fill="#00ff00"/><text x="1603" y="853.7" font-size="8" fill="#c4c4c4" textLength="119" lengthAdjust="spacingAndGlyphs">SPLICE  CONNECTION DETAIL @ ' A'.</text><line x1="1603" y1="855.9" x2="1722" y2="855.9" stroke="#c4c4c4" stroke-width="1" /><line x1="707.3" y1="760" x2="1583.7" y2="760" stroke="#dadada" stroke-width="1.7" /><line x1="710.5" y1="756.4" x2="710.5" y2="762" stroke="#dadada" stroke-width="1.5" /><path d="M708.8,761.7 L712.2,758.3" stroke="#dadada" stroke-width="1.3"/><line x1="1580.5" y1="756.4" x2="1580.5" y2="762" stroke="#dadada" stroke-width="1.5" /><path d="M1578.8,761.7 L1582.2,758.3" stroke="#dadada" stroke-width="1.3"/><rect x="1139.5" y="752.85" width="12" height="5.7" fill="#00ff00"/><line x1="707.3" y1="772" x2="1583.7" y2="772" stroke="#dadada" stroke-width="1.7" /><line x1="710.5" y1="768.4" x2="710.5" y2="774" stroke="#dadada" stroke-width="1.5" /><path d="M708.8,773.7 L712.2,770.3" stroke="#dadada" stroke-width="1.3"/><line x1="1217.5" y1="768.4" x2="1217.5" y2="774" stroke="#dadada" stroke-width="1.5" /><path d="M1215.8,773.7 L1219.2,770.3" stroke="#dadada" stroke-width="1.3"/><line x1="1580.5" y1="768.4" x2="1580.5" y2="774" stroke="#dadada" stroke-width="1.5" /><path d="M1578.8,773.7 L1582.2,770.3" stroke="#dadada" stroke-width="1.3"/><rect x="959" y="764.55" width="12" height="5.9" fill="#00ff00"/><rect x="1392.7" y="764.55" width="12" height="5.9" fill="#00ff00"/><line x1="707.3" y1="786" x2="1583.7" y2="786" stroke="#dadada" stroke-width="1.7" /><line x1="710.5" y1="782.4" x2="710.5" y2="788" stroke="#dadada" stroke-width="1.5" /><path d="M708.8,787.7 L712.2,784.3" stroke="#dadada" stroke-width="1.3"/><line x1="855.5" y1="782.4" x2="855.5" y2="788" stroke="#dadada" stroke-width="1.5" /><path d="M853.8,787.7 L857.2,784.3" stroke="#dadada" stroke-width="1.3"/><line x1="1000.5" y1="782.4" x2="1000.5" y2="788" stroke="#dadada" stroke-width="1.5" /><path d="M998.8,787.7 L1002.2,784.3" stroke="#dadada" stroke-width="1.3"/><line x1="1145.5" y1="782.4" x2="1145.5" y2="788" stroke="#dadada" stroke-width="1.5" /><path d="M1143.8,787.7 L1147.2,784.3" stroke="#dadada" stroke-width="1.3"/><line x1="1290.5" y1="782.4" x2="1290.5" y2="788" stroke="#dadada" stroke-width="1.5" /><path d="M1288.8,787.7 L1292.2,784.3" stroke="#dadada" stroke-width="1.3"/><line x1="1435.5" y1="782.4" x2="1435.5" y2="788" stroke="#dadada" stroke-width="1.5" /><path d="M1433.8,787.7 L1437.2,784.3" stroke="#dadada" stroke-width="1.3"/><line x1="1580.5" y1="782.4" x2="1580.5" y2="788" stroke="#dadada" stroke-width="1.5" /><path d="M1578.8,787.7 L1582.2,784.3" stroke="#dadada" stroke-width="1.3"/><rect x="778" y="778.05" width="10" height="5.9" fill="#00ff00"/><rect x="923" y="778.05" width="10" height="5.9" fill="#00ff00"/><rect x="1068" y="778.05" width="10" height="5.9" fill="#00ff00"/><rect x="1213" y="778.05" width="10" height="5.9" fill="#00ff00"/><rect x="1358" y="778.05" width="10" height="5.9" fill="#00ff00"/><rect x="1503" y="778.05" width="10" height="5.9" fill="#00ff00"/><rect x="713.75" y="790.05" width="7.5" height="5.9" fill="#00ff00"/><rect x="845.05" y="790.05" width="7.5" height="5.9" fill="#00ff00"/><rect x="734.188" y="790.05" width="10" height="5.9" fill="#00ff00"/><rect x="763.562" y="790.05" width="10" height="5.9" fill="#00ff00"/><rect x="792.938" y="790.05" width="10" height="5.9" fill="#00ff00"/><rect x="822.312" y="790.05" width="10" height="5.9" fill="#00ff00"/><rect x="858.75" y="790.05" width="7.5" height="5.9" fill="#00ff00"/><rect x="990.05" y="790.05" width="7.5" height="5.9" fill="#00ff00"/><rect x="879.188" y="790.05" width="10" height="5.9" fill="#00ff00"/><rect x="908.562" y="790.05" width="10" height="5.9" fill="#00ff00"/><rect x="937.938" y="790.05" width="10" height="5.9" fill="#00ff00"/><rect x="967.312" y="790.05" width="10" height="5.9" fill="#00ff00"/><rect x="1003.75" y="790.05" width="7.5" height="5.9" fill="#00ff00"/><rect x="1135.05" y="790.05" width="7.5" height="5.9" fill="#00ff00"/><rect x="1024.19" y="790.05" width="10" height="5.9" fill="#00ff00"/><rect x="1053.56" y="790.05" width="10" height="5.9" fill="#00ff00"/><rect x="1082.94" y="790.05" width="10" height="5.9" fill="#00ff00"/><rect x="1112.31" y="790.05" width="10" height="5.9" fill="#00ff00"/><rect x="1148.75" y="790.05" width="7.5" height="5.9" fill="#00ff00"/><rect x="1280.05" y="790.05" width="7.5" height="5.9" fill="#00ff00"/><rect x="1169.19" y="790.05" width="10" height="5.9" fill="#00ff00"/><rect x="1198.56" y="790.05" width="10" height="5.9" fill="#00ff00"/><rect x="1227.94" y="790.05" width="10" height="5.9" fill="#00ff00"/><rect x="1257.31" y="790.05" width="10" height="5.9" fill="#00ff00"/><rect x="1293.75" y="790.05" width="7.5" height="5.9" fill="#00ff00"/><rect x="1425.05" y="790.05" width="7.5" height="5.9" fill="#00ff00"/><rect x="1314.19" y="790.05" width="10" height="5.9" fill="#00ff00"/><rect x="1343.56" y="790.05" width="10" height="5.9" fill="#00ff00"/><rect x="1372.94" y="790.05" width="10" height="5.9" fill="#00ff00"/><rect x="1402.31" y="790.05" width="10" height="5.9" fill="#00ff00"/><rect x="1438.75" y="790.05" width="7.5" height="5.9" fill="#00ff00"/><rect x="1570.05" y="790.05" width="7.5" height="5.9" fill="#00ff00"/><rect x="1459.19" y="790.05" width="10" height="5.9" fill="#00ff00"/><rect x="1488.56" y="790.05" width="10" height="5.9" fill="#00ff00"/><rect x="1517.94" y="790.05" width="10" height="5.9" fill="#00ff00"/><rect x="1547.31" y="790.05" width="10" height="5.9" fill="#00ff00"/><line x1="707.3" y1="798" x2="1583.7" y2="798" stroke="#dadada" stroke-width="1.7" /><line x1="710.5" y1="794.4" x2="710.5" y2="800" stroke="#dadada" stroke-width="1.5" /><path d="M708.8,799.7 L712.2,796.3" stroke="#dadada" stroke-width="1.3"/><line x1="724.5" y1="794.4" x2="724.5" y2="800" stroke="#dadada" stroke-width="1.5" /><path d="M722.8,799.7 L726.2,796.3" stroke="#dadada" stroke-width="1.3"/><line x1="753.875" y1="794.4" x2="753.875" y2="800" stroke="#dadada" stroke-width="1.5" /><path d="M752.175,799.7 L755.575,796.3" stroke="#dadada" stroke-width="1.3"/><line x1="783.25" y1="794.4" x2="783.25" y2="800" stroke="#dadada" stroke-width="1.5" /><path d="M781.55,799.7 L784.95,796.3" stroke="#dadada" stroke-width="1.3"/><line x1="812.625" y1="794.4" x2="812.625" y2="800" stroke="#dadada" stroke-width="1.5" /><path d="M810.925,799.7 L814.325,796.3" stroke="#dadada" stroke-width="1.3"/><line x1="842" y1="794.4" x2="842" y2="800" stroke="#dadada" stroke-width="1.5" /><path d="M840.3,799.7 L843.7,796.3" stroke="#dadada" stroke-width="1.3"/><line x1="855.5" y1="794.4" x2="855.5" y2="800" stroke="#dadada" stroke-width="1.5" /><path d="M853.8,799.7 L857.2,796.3" stroke="#dadada" stroke-width="1.3"/><line x1="869.5" y1="794.4" x2="869.5" y2="800" stroke="#dadada" stroke-width="1.5" /><path d="M867.8,799.7 L871.2,796.3" stroke="#dadada" stroke-width="1.3"/><line x1="898.875" y1="794.4" x2="898.875" y2="800" stroke="#dadada" stroke-width="1.5" /><path d="M897.175,799.7 L900.575,796.3" stroke="#dadada" stroke-width="1.3"/><line x1="928.25" y1="794.4" x2="928.25" y2="800" stroke="#dadada" stroke-width="1.5" /><path d="M926.55,799.7 L929.95,796.3" stroke="#dadada" stroke-width="1.3"/><line x1="957.625" y1="794.4" x2="957.625" y2="800" stroke="#dadada" stroke-width="1.5" /><path d="M955.925,799.7 L959.325,796.3" stroke="#dadada" stroke-width="1.3"/><line x1="987" y1="794.4" x2="987" y2="800" stroke="#dadada" stroke-width="1.5" /><path d="M985.3,799.7 L988.7,796.3" stroke="#dadada" stroke-width="1.3"/><line x1="1000.5" y1="794.4" x2="1000.5" y2="800" stroke="#dadada" stroke-width="1.5" /><path d="M998.8,799.7 L1002.2,796.3" stroke="#dadada" stroke-width="1.3"/><line x1="1014.5" y1="794.4" x2="1014.5" y2="800" stroke="#dadada" stroke-width="1.5" /><path d="M1012.8,799.7 L1016.2,796.3" stroke="#dadada" stroke-width="1.3"/><line x1="1043.88" y1="794.4" x2="1043.88" y2="800" stroke="#dadada" stroke-width="1.5" /><path d="M1042.17,799.7 L1045.58,796.3" stroke="#dadada" stroke-width="1.3"/><line x1="1073.25" y1="794.4" x2="1073.25" y2="800" stroke="#dadada" stroke-width="1.5" /><path d="M1071.55,799.7 L1074.95,796.3" stroke="#dadada" stroke-width="1.3"/><line x1="1102.62" y1="794.4" x2="1102.62" y2="800" stroke="#dadada" stroke-width="1.5" /><path d="M1100.92,799.7 L1104.33,796.3" stroke="#dadada" stroke-width="1.3"/><line x1="1132" y1="794.4" x2="1132" y2="800" stroke="#dadada" stroke-width="1.5" /><path d="M1130.3,799.7 L1133.7,796.3" stroke="#dadada" stroke-width="1.3"/><line x1="1145.5" y1="794.4" x2="1145.5" y2="800" stroke="#dadada" stroke-width="1.5" /><path d="M1143.8,799.7 L1147.2,796.3" stroke="#dadada" stroke-width="1.3"/><line x1="1159.5" y1="794.4" x2="1159.5" y2="800" stroke="#dadada" stroke-width="1.5" /><path d="M1157.8,799.7 L1161.2,796.3" stroke="#dadada" stroke-width="1.3"/><line x1="1188.88" y1="794.4" x2="1188.88" y2="800" stroke="#dadada" stroke-width="1.5" /><path d="M1187.17,799.7 L1190.58,796.3" stroke="#dadada" stroke-width="1.3"/><line x1="1218.25" y1="794.4" x2="1218.25" y2="800" stroke="#dadada" stroke-width="1.5" /><path d="M1216.55,799.7 L1219.95,796.3" stroke="#dadada" stroke-width="1.3"/><line x1="1247.62" y1="794.4" x2="1247.62" y2="800" stroke="#dadada" stroke-width="1.5" /><path d="M1245.92,799.7 L1249.33,796.3" stroke="#dadada" stroke-width="1.3"/><line x1="1277" y1="794.4" x2="1277" y2="800" stroke="#dadada" stroke-width="1.5" /><path d="M1275.3,799.7 L1278.7,796.3" stroke="#dadada" stroke-width="1.3"/><line x1="1290.5" y1="794.4" x2="1290.5" y2="800" stroke="#dadada" stroke-width="1.5" /><path d="M1288.8,799.7 L1292.2,796.3" stroke="#dadada" stroke-width="1.3"/><line x1="1304.5" y1="794.4" x2="1304.5" y2="800" stroke="#dadada" stroke-width="1.5" /><path d="M1302.8,799.7 L1306.2,796.3" stroke="#dadada" stroke-width="1.3"/><line x1="1333.88" y1="794.4" x2="1333.88" y2="800" stroke="#dadada" stroke-width="1.5" /><path d="M1332.17,799.7 L1335.58,796.3" stroke="#dadada" stroke-width="1.3"/><line x1="1363.25" y1="794.4" x2="1363.25" y2="800" stroke="#dadada" stroke-width="1.5" /><path d="M1361.55,799.7 L1364.95,796.3" stroke="#dadada" stroke-width="1.3"/><line x1="1392.62" y1="794.4" x2="1392.62" y2="800" stroke="#dadada" stroke-width="1.5" /><path d="M1390.92,799.7 L1394.33,796.3" stroke="#dadada" stroke-width="1.3"/><line x1="1422" y1="794.4" x2="1422" y2="800" stroke="#dadada" stroke-width="1.5" /><path d="M1420.3,799.7 L1423.7,796.3" stroke="#dadada" stroke-width="1.3"/><line x1="1435.5" y1="794.4" x2="1435.5" y2="800" stroke="#dadada" stroke-width="1.5" /><path d="M1433.8,799.7 L1437.2,796.3" stroke="#dadada" stroke-width="1.3"/><line x1="1449.5" y1="794.4" x2="1449.5" y2="800" stroke="#dadada" stroke-width="1.5" /><path d="M1447.8,799.7 L1451.2,796.3" stroke="#dadada" stroke-width="1.3"/><line x1="1478.88" y1="794.4" x2="1478.88" y2="800" stroke="#dadada" stroke-width="1.5" /><path d="M1477.17,799.7 L1480.58,796.3" stroke="#dadada" stroke-width="1.3"/><line x1="1508.25" y1="794.4" x2="1508.25" y2="800" stroke="#dadada" stroke-width="1.5" /><path d="M1506.55,799.7 L1509.95,796.3" stroke="#dadada" stroke-width="1.3"/><line x1="1537.62" y1="794.4" x2="1537.62" y2="800" stroke="#dadada" stroke-width="1.5" /><path d="M1535.92,799.7 L1539.33,796.3" stroke="#dadada" stroke-width="1.3"/><line x1="1567" y1="794.4" x2="1567" y2="800" stroke="#dadada" stroke-width="1.5" /><path d="M1565.3,799.7 L1568.7,796.3" stroke="#dadada" stroke-width="1.3"/><line x1="1580.5" y1="794.4" x2="1580.5" y2="800" stroke="#dadada" stroke-width="1.5" /><path d="M1578.8,799.7 L1582.2,796.3" stroke="#dadada" stroke-width="1.3"/><line x1="710.5" y1="757" x2="710.5" y2="820" stroke="#dadada" stroke-width="1.2" /><line x1="1580.5" y1="757" x2="1580.5" y2="820" stroke="#dadada" stroke-width="1.2" /><line x1="1217.5" y1="768" x2="1217.5" y2="786" stroke="#dadada" stroke-width="1" /><line x1="855.5" y1="782" x2="855.5" y2="820" stroke="#dadada" stroke-width="1.2" /><line x1="1000.5" y1="782" x2="1000.5" y2="820" stroke="#dadada" stroke-width="1.2" /><line x1="1145.5" y1="782" x2="1145.5" y2="820" stroke="#dadada" stroke-width="1.2" /><line x1="1290.5" y1="782" x2="1290.5" y2="820" stroke="#dadada" stroke-width="1.2" /><line x1="1435.5" y1="782" x2="1435.5" y2="820" stroke="#dadada" stroke-width="1.2" /><rect x="710.5" y="819.5" width="870" height="58.5" fill="url(#pCheq)" /><line x1="710.5" y1="819.5" x2="783" y2="878" stroke="#b8b800" stroke-width="1" opacity="0.55" stroke-dasharray="3 1.5"/><line x1="710.5" y1="878" x2="783" y2="819.5" stroke="#b8b800" stroke-width="1" opacity="0.55" stroke-dasharray="3 1.5"/><line x1="783" y1="819.5" x2="855.5" y2="878" stroke="#b8b800" stroke-width="1" opacity="0.55" stroke-dasharray="3 1.5"/><line x1="783" y1="878" x2="855.5" y2="819.5" stroke="#b8b800" stroke-width="1" opacity="0.55" stroke-dasharray="3 1.5"/><line x1="855.5" y1="819.5" x2="928" y2="878" stroke="#b8b800" stroke-width="1" opacity="0.55" stroke-dasharray="3 1.5"/><line x1="855.5" y1="878" x2="928" y2="819.5" stroke="#b8b800" stroke-width="1" opacity="0.55" stroke-dasharray="3 1.5"/><line x1="928" y1="819.5" x2="1000.5" y2="878" stroke="#b8b800" stroke-width="1" opacity="0.55" stroke-dasharray="3 1.5"/><line x1="928" y1="878" x2="1000.5" y2="819.5" stroke="#b8b800" stroke-width="1" opacity="0.55" stroke-dasharray="3 1.5"/><line x1="1000.5" y1="819.5" x2="1073" y2="878" stroke="#b8b800" stroke-width="1" opacity="0.55" stroke-dasharray="3 1.5"/><line x1="1000.5" y1="878" x2="1073" y2="819.5" stroke="#b8b800" stroke-width="1" opacity="0.55" stroke-dasharray="3 1.5"/><line x1="1073" y1="819.5" x2="1145.5" y2="878" stroke="#b8b800" stroke-width="1" opacity="0.55" stroke-dasharray="3 1.5"/><line x1="1073" y1="878" x2="1145.5" y2="819.5" stroke="#b8b800" stroke-width="1" opacity="0.55" stroke-dasharray="3 1.5"/><line x1="1145.5" y1="819.5" x2="1218" y2="878" stroke="#b8b800" stroke-width="1" opacity="0.55" stroke-dasharray="3 1.5"/><line x1="1145.5" y1="878" x2="1218" y2="819.5" stroke="#b8b800" stroke-width="1" opacity="0.55" stroke-dasharray="3 1.5"/><line x1="1218" y1="819.5" x2="1290.5" y2="878" stroke="#b8b800" stroke-width="1" opacity="0.55" stroke-dasharray="3 1.5"/><line x1="1218" y1="878" x2="1290.5" y2="819.5" stroke="#b8b800" stroke-width="1" opacity="0.55" stroke-dasharray="3 1.5"/><line x1="1290.5" y1="819.5" x2="1363" y2="878" stroke="#b8b800" stroke-width="1" opacity="0.55" stroke-dasharray="3 1.5"/><line x1="1290.5" y1="878" x2="1363" y2="819.5" stroke="#b8b800" stroke-width="1" opacity="0.55" stroke-dasharray="3 1.5"/><line x1="1363" y1="819.5" x2="1435.5" y2="878" stroke="#b8b800" stroke-width="1" opacity="0.55" stroke-dasharray="3 1.5"/><line x1="1363" y1="878" x2="1435.5" y2="819.5" stroke="#b8b800" stroke-width="1" opacity="0.55" stroke-dasharray="3 1.5"/><line x1="1435.5" y1="819.5" x2="1508" y2="878" stroke="#b8b800" stroke-width="1" opacity="0.55" stroke-dasharray="3 1.5"/><line x1="1435.5" y1="878" x2="1508" y2="819.5" stroke="#b8b800" stroke-width="1" opacity="0.55" stroke-dasharray="3 1.5"/><line x1="1508" y1="819.5" x2="1580.5" y2="878" stroke="#b8b800" stroke-width="1" opacity="0.55" stroke-dasharray="3 1.5"/><line x1="1508" y1="878" x2="1580.5" y2="819.5" stroke="#b8b800" stroke-width="1" opacity="0.55" stroke-dasharray="3 1.5"/><line x1="710.5" y1="839" x2="1580.5" y2="839" stroke="#b8b800" stroke-width="1.6" opacity="0.5" stroke-dasharray="3 1.5"/><line x1="710.5" y1="858.5" x2="1580.5" y2="858.5" stroke="#b8b800" stroke-width="1.6" opacity="0.5" stroke-dasharray="3 1.5"/><line x1="710.5" y1="819.5" x2="710.5" y2="878" stroke="#8a8a8a" stroke-width="0.8" opacity="0.7"/><line x1="734.667" y1="819.5" x2="734.667" y2="878" stroke="#8a8a8a" stroke-width="0.8" opacity="0.7"/><line x1="758.833" y1="819.5" x2="758.833" y2="878" stroke="#8a8a8a" stroke-width="0.8" opacity="0.7"/><line x1="783" y1="819.5" x2="783" y2="878" stroke="#8a8a8a" stroke-width="0.8" opacity="0.7"/><line x1="807.167" y1="819.5" x2="807.167" y2="878" stroke="#8a8a8a" stroke-width="0.8" opacity="0.7"/><line x1="831.333" y1="819.5" x2="831.333" y2="878" stroke="#8a8a8a" stroke-width="0.8" opacity="0.7"/><line x1="855.5" y1="819.5" x2="855.5" y2="878" stroke="#8a8a8a" stroke-width="0.8" opacity="0.7"/><line x1="879.667" y1="819.5" x2="879.667" y2="878" stroke="#8a8a8a" stroke-width="0.8" opacity="0.7"/><line x1="903.833" y1="819.5" x2="903.833" y2="878" stroke="#8a8a8a" stroke-width="0.8" opacity="0.7"/><line x1="928" y1="819.5" x2="928" y2="878" stroke="#8a8a8a" stroke-width="0.8" opacity="0.7"/><line x1="952.167" y1="819.5" x2="952.167" y2="878" stroke="#8a8a8a" stroke-width="0.8" opacity="0.7"/><line x1="976.333" y1="819.5" x2="976.333" y2="878" stroke="#8a8a8a" stroke-width="0.8" opacity="0.7"/><line x1="1000.5" y1="819.5" x2="1000.5" y2="878" stroke="#8a8a8a" stroke-width="0.8" opacity="0.7"/><line x1="1024.67" y1="819.5" x2="1024.67" y2="878" stroke="#8a8a8a" stroke-width="0.8" opacity="0.7"/><line x1="1048.83" y1="819.5" x2="1048.83" y2="878" stroke="#8a8a8a" stroke-width="0.8" opacity="0.7"/><line x1="1073" y1="819.5" x2="1073" y2="878" stroke="#8a8a8a" stroke-width="0.8" opacity="0.7"/><line x1="1097.17" y1="819.5" x2="1097.17" y2="878" stroke="#8a8a8a" stroke-width="0.8" opacity="0.7"/><line x1="1121.33" y1="819.5" x2="1121.33" y2="878" stroke="#8a8a8a" stroke-width="0.8" opacity="0.7"/><line x1="1145.5" y1="819.5" x2="1145.5" y2="878" stroke="#8a8a8a" stroke-width="0.8" opacity="0.7"/><line x1="1169.67" y1="819.5" x2="1169.67" y2="878" stroke="#8a8a8a" stroke-width="0.8" opacity="0.7"/><line x1="1193.83" y1="819.5" x2="1193.83" y2="878" stroke="#8a8a8a" stroke-width="0.8" opacity="0.7"/><line x1="1218" y1="819.5" x2="1218" y2="878" stroke="#8a8a8a" stroke-width="0.8" opacity="0.7"/><line x1="1242.17" y1="819.5" x2="1242.17" y2="878" stroke="#8a8a8a" stroke-width="0.8" opacity="0.7"/><line x1="1266.33" y1="819.5" x2="1266.33" y2="878" stroke="#8a8a8a" stroke-width="0.8" opacity="0.7"/><line x1="1290.5" y1="819.5" x2="1290.5" y2="878" stroke="#8a8a8a" stroke-width="0.8" opacity="0.7"/><line x1="1314.67" y1="819.5" x2="1314.67" y2="878" stroke="#8a8a8a" stroke-width="0.8" opacity="0.7"/><line x1="1338.83" y1="819.5" x2="1338.83" y2="878" stroke="#8a8a8a" stroke-width="0.8" opacity="0.7"/><line x1="1363" y1="819.5" x2="1363" y2="878" stroke="#8a8a8a" stroke-width="0.8" opacity="0.7"/><line x1="1387.17" y1="819.5" x2="1387.17" y2="878" stroke="#8a8a8a" stroke-width="0.8" opacity="0.7"/><line x1="1411.33" y1="819.5" x2="1411.33" y2="878" stroke="#8a8a8a" stroke-width="0.8" opacity="0.7"/><line x1="1435.5" y1="819.5" x2="1435.5" y2="878" stroke="#8a8a8a" stroke-width="0.8" opacity="0.7"/><line x1="1459.67" y1="819.5" x2="1459.67" y2="878" stroke="#8a8a8a" stroke-width="0.8" opacity="0.7"/><line x1="1483.83" y1="819.5" x2="1483.83" y2="878" stroke="#8a8a8a" stroke-width="0.8" opacity="0.7"/><line x1="1508" y1="819.5" x2="1508" y2="878" stroke="#8a8a8a" stroke-width="0.8" opacity="0.7"/><line x1="1532.17" y1="819.5" x2="1532.17" y2="878" stroke="#8a8a8a" stroke-width="0.8" opacity="0.7"/><line x1="1556.33" y1="819.5" x2="1556.33" y2="878" stroke="#8a8a8a" stroke-width="0.8" opacity="0.7"/><line x1="1580.5" y1="819.5" x2="1580.5" y2="878" stroke="#8a8a8a" stroke-width="0.8" opacity="0.7"/><line x1="724.5" y1="799" x2="724.5" y2="878" stroke="#e4e4e4" stroke-width="1.15" /><line x1="724.5" y1="804" x2="724.5" y2="820" stroke="#b4e000" stroke-width="1.4" /><line x1="724.5" y1="878" x2="724.5" y2="893" stroke="#6be000" stroke-width="1.8" /><line x1="753.875" y1="799" x2="753.875" y2="878" stroke="#e4e4e4" stroke-width="1.15" /><line x1="783.25" y1="799" x2="783.25" y2="878" stroke="#e4e4e4" stroke-width="1.15" /><line x1="783.25" y1="804" x2="783.25" y2="820" stroke="#b4e000" stroke-width="1.4" /><line x1="783.25" y1="878" x2="783.25" y2="893" stroke="#6be000" stroke-width="1.8" /><line x1="812.625" y1="799" x2="812.625" y2="878" stroke="#e4e4e4" stroke-width="1.15" /><line x1="842" y1="799" x2="842" y2="878" stroke="#e4e4e4" stroke-width="1.15" /><line x1="842" y1="804" x2="842" y2="820" stroke="#b4e000" stroke-width="1.4" /><line x1="842" y1="878" x2="842" y2="893" stroke="#6be000" stroke-width="1.8" /><line x1="869.5" y1="799" x2="869.5" y2="878" stroke="#e4e4e4" stroke-width="1.15" /><line x1="869.5" y1="804" x2="869.5" y2="820" stroke="#b4e000" stroke-width="1.4" /><line x1="869.5" y1="878" x2="869.5" y2="893" stroke="#6be000" stroke-width="1.8" /><line x1="898.875" y1="799" x2="898.875" y2="878" stroke="#e4e4e4" stroke-width="1.15" /><line x1="928.25" y1="799" x2="928.25" y2="878" stroke="#e4e4e4" stroke-width="1.15" /><line x1="928.25" y1="804" x2="928.25" y2="820" stroke="#b4e000" stroke-width="1.4" /><line x1="928.25" y1="878" x2="928.25" y2="893" stroke="#6be000" stroke-width="1.8" /><line x1="957.625" y1="799" x2="957.625" y2="878" stroke="#e4e4e4" stroke-width="1.15" /><line x1="987" y1="799" x2="987" y2="878" stroke="#e4e4e4" stroke-width="1.15" /><line x1="987" y1="804" x2="987" y2="820" stroke="#b4e000" stroke-width="1.4" /><line x1="987" y1="878" x2="987" y2="893" stroke="#6be000" stroke-width="1.8" /><line x1="1014.5" y1="799" x2="1014.5" y2="878" stroke="#e4e4e4" stroke-width="1.15" /><line x1="1014.5" y1="804" x2="1014.5" y2="820" stroke="#b4e000" stroke-width="1.4" /><line x1="1014.5" y1="878" x2="1014.5" y2="893" stroke="#6be000" stroke-width="1.8" /><line x1="1043.88" y1="799" x2="1043.88" y2="878" stroke="#e4e4e4" stroke-width="1.15" /><line x1="1073.25" y1="799" x2="1073.25" y2="878" stroke="#e4e4e4" stroke-width="1.15" /><line x1="1073.25" y1="804" x2="1073.25" y2="820" stroke="#b4e000" stroke-width="1.4" /><line x1="1073.25" y1="878" x2="1073.25" y2="893" stroke="#6be000" stroke-width="1.8" /><line x1="1102.62" y1="799" x2="1102.62" y2="878" stroke="#e4e4e4" stroke-width="1.15" /><line x1="1132" y1="799" x2="1132" y2="878" stroke="#e4e4e4" stroke-width="1.15" /><line x1="1132" y1="804" x2="1132" y2="820" stroke="#b4e000" stroke-width="1.4" /><line x1="1132" y1="878" x2="1132" y2="893" stroke="#6be000" stroke-width="1.8" /><line x1="1159.5" y1="799" x2="1159.5" y2="878" stroke="#e4e4e4" stroke-width="1.15" /><line x1="1159.5" y1="804" x2="1159.5" y2="820" stroke="#b4e000" stroke-width="1.4" /><line x1="1159.5" y1="878" x2="1159.5" y2="893" stroke="#6be000" stroke-width="1.8" /><line x1="1188.88" y1="799" x2="1188.88" y2="878" stroke="#e4e4e4" stroke-width="1.15" /><line x1="1218.25" y1="799" x2="1218.25" y2="878" stroke="#e4e4e4" stroke-width="1.15" /><line x1="1218.25" y1="804" x2="1218.25" y2="820" stroke="#b4e000" stroke-width="1.4" /><line x1="1218.25" y1="878" x2="1218.25" y2="893" stroke="#6be000" stroke-width="1.8" /><line x1="1247.62" y1="799" x2="1247.62" y2="878" stroke="#e4e4e4" stroke-width="1.15" /><line x1="1277" y1="799" x2="1277" y2="878" stroke="#e4e4e4" stroke-width="1.15" /><line x1="1277" y1="804" x2="1277" y2="820" stroke="#b4e000" stroke-width="1.4" /><line x1="1277" y1="878" x2="1277" y2="893" stroke="#6be000" stroke-width="1.8" /><line x1="1304.5" y1="799" x2="1304.5" y2="878" stroke="#e4e4e4" stroke-width="1.15" /><line x1="1304.5" y1="804" x2="1304.5" y2="820" stroke="#b4e000" stroke-width="1.4" /><line x1="1304.5" y1="878" x2="1304.5" y2="893" stroke="#6be000" stroke-width="1.8" /><line x1="1333.88" y1="799" x2="1333.88" y2="878" stroke="#e4e4e4" stroke-width="1.15" /><line x1="1363.25" y1="799" x2="1363.25" y2="878" stroke="#e4e4e4" stroke-width="1.15" /><line x1="1363.25" y1="804" x2="1363.25" y2="820" stroke="#b4e000" stroke-width="1.4" /><line x1="1363.25" y1="878" x2="1363.25" y2="893" stroke="#6be000" stroke-width="1.8" /><line x1="1392.62" y1="799" x2="1392.62" y2="878" stroke="#e4e4e4" stroke-width="1.15" /><line x1="1422" y1="799" x2="1422" y2="878" stroke="#e4e4e4" stroke-width="1.15" /><line x1="1422" y1="804" x2="1422" y2="820" stroke="#b4e000" stroke-width="1.4" /><line x1="1422" y1="878" x2="1422" y2="893" stroke="#6be000" stroke-width="1.8" /><line x1="1449.5" y1="799" x2="1449.5" y2="878" stroke="#e4e4e4" stroke-width="1.15" /><line x1="1449.5" y1="804" x2="1449.5" y2="820" stroke="#b4e000" stroke-width="1.4" /><line x1="1449.5" y1="878" x2="1449.5" y2="893" stroke="#6be000" stroke-width="1.8" /><line x1="1478.88" y1="799" x2="1478.88" y2="878" stroke="#e4e4e4" stroke-width="1.15" /><line x1="1508.25" y1="799" x2="1508.25" y2="878" stroke="#e4e4e4" stroke-width="1.15" /><line x1="1508.25" y1="804" x2="1508.25" y2="820" stroke="#b4e000" stroke-width="1.4" /><line x1="1508.25" y1="878" x2="1508.25" y2="893" stroke="#6be000" stroke-width="1.8" /><line x1="1537.62" y1="799" x2="1537.62" y2="878" stroke="#e4e4e4" stroke-width="1.15" /><line x1="1567" y1="799" x2="1567" y2="878" stroke="#e4e4e4" stroke-width="1.15" /><line x1="1567" y1="804" x2="1567" y2="820" stroke="#b4e000" stroke-width="1.4" /><line x1="1567" y1="878" x2="1567" y2="893" stroke="#6be000" stroke-width="1.8" /><line x1="710.5" y1="819.5" x2="1580.5" y2="819.5" stroke="#e2e200" stroke-width="1.3" /><line x1="710.5" y1="878.5" x2="1580.5" y2="878.5" stroke="#e2e200" stroke-width="1.6" /><line x1="724.5" y1="821.3" x2="1566.5" y2="821.3" stroke="#e0e0e0" stroke-width="1.2" /><line x1="724.5" y1="876.6" x2="1566.5" y2="876.6" stroke="#e0e0e0" stroke-width="1.2" /><line x1="710.8" y1="819.5" x2="710.8" y2="878" stroke="#a8d800" stroke-width="1" /><line x1="1580.5" y1="819.5" x2="1580.5" y2="878" stroke="#f2f200" stroke-width="1.8" /><line x1="697.5" y1="800.8" x2="697.5" y2="897.2" stroke="#dadada" stroke-width="1.7" /><line x1="693.9" y1="804" x2="699.5" y2="804" stroke="#dadada" stroke-width="1.5" /><path d="M695.8,805.7 L699.2,802.3" stroke="#dadada" stroke-width="1.3"/><line x1="693.9" y1="894" x2="699.5" y2="894" stroke="#dadada" stroke-width="1.5" /><path d="M695.8,895.7 L699.2,892.3" stroke="#dadada" stroke-width="1.3"/><line x1="705" y1="800.8" x2="705" y2="897.2" stroke="#dadada" stroke-width="1.7" /><line x1="701.4" y1="804" x2="707" y2="804" stroke="#dadada" stroke-width="1.5" /><path d="M703.3,805.7 L706.7,802.3" stroke="#dadada" stroke-width="1.3"/><line x1="701.4" y1="819.5" x2="707" y2="819.5" stroke="#dadada" stroke-width="1.5" /><path d="M703.3,821.2 L706.7,817.8" stroke="#dadada" stroke-width="1.3"/><line x1="701.4" y1="839" x2="707" y2="839" stroke="#dadada" stroke-width="1.5" /><path d="M703.3,840.7 L706.7,837.3" stroke="#dadada" stroke-width="1.3"/><line x1="701.4" y1="858.5" x2="707" y2="858.5" stroke="#dadada" stroke-width="1.5" /><path d="M703.3,860.2 L706.7,856.8" stroke="#dadada" stroke-width="1.3"/><line x1="701.4" y1="878" x2="707" y2="878" stroke="#dadada" stroke-width="1.5" /><path d="M703.3,879.7 L706.7,876.3" stroke="#dadada" stroke-width="1.3"/><line x1="701.4" y1="894" x2="707" y2="894" stroke="#dadada" stroke-width="1.5" /><path d="M703.3,895.7 L706.7,892.3" stroke="#dadada" stroke-width="1.3"/><line x1="694" y1="804" x2="723" y2="804" stroke="#dadada" stroke-width="1.2" /><line x1="694" y1="894" x2="723" y2="894" stroke="#dadada" stroke-width="1.2" /><line x1="702" y1="819.5" x2="710.5" y2="819.5" stroke="#dadada" stroke-width="1.1" /><line x1="702" y1="839" x2="710.5" y2="839" stroke="#dadada" stroke-width="1.1" /><line x1="702" y1="858.5" x2="710.5" y2="858.5" stroke="#dadada" stroke-width="1.1" /><line x1="702" y1="878" x2="710.5" y2="878" stroke="#dadada" stroke-width="1.1" /><rect x="699.55" y="807.3" width="5.5" height="8.4" fill="#00ff00"/><rect x="699.55" y="823.8" width="5.5" height="8.4" fill="#00ff00"/><rect x="699.55" y="843.8" width="5.5" height="8.4" fill="#00ff00"/><rect x="699.55" y="863.3" width="5.5" height="8.4" fill="#00ff00"/><rect x="699.55" y="881.3" width="5.5" height="8.4" fill="#00ff00"/><rect x="691.55" y="842.3" width="5.5" height="11.4" fill="#00ff00"/><rect x="903.7" y="808" width="39" height="3.6" fill="#00ff00" /><path d="M901,812.8 H945.5 M901,812.8 L908,820.5" fill="none" stroke="#c8c8c8" stroke-width="1.2"/><rect x="1492.5" y="808" width="39" height="3.6" fill="#00ff00" /><path d="M1490,812.8 H1534.5 L1527,820.5" fill="none" stroke="#c8c8c8" stroke-width="1.2"/><rect x="1002.5" y="811" width="26.5" height="4.6" fill="#00ff00" /><line x1="1014.3" y1="803.5" x2="1014.3" y2="818" stroke="#6be000" stroke-width="1.8" /><rect x="1002.5" y="879" width="26.5" height="3.4" fill="#00ff00" /><rect x="1407" y="811" width="26.5" height="4.6" fill="#00ff00" /><line x1="1421.2" y1="803.5" x2="1421.2" y2="818" stroke="#6be000" stroke-width="1.8" /><rect x="1407" y="879" width="26.5" height="3.4" fill="#00ff00" /><circle cx="783" cy="908" r="6.7" fill="none" stroke="#e0e0e0" stroke-width="1.1"/><text x="783" y="911.2" font-size="9" fill="#e0e0e0" text-anchor="middle">1</text><circle cx="928" cy="908" r="6.7" fill="none" stroke="#e0e0e0" stroke-width="1.1"/><text x="928" y="911.2" font-size="9" fill="#e0e0e0" text-anchor="middle">2</text><circle cx="1072.5" cy="908" r="6.7" fill="none" stroke="#e0e0e0" stroke-width="1.1"/><text x="1072.5" y="911.2" font-size="9" fill="#e0e0e0" text-anchor="middle">2</text><circle cx="1217" cy="908" r="6.7" fill="none" stroke="#e0e0e0" stroke-width="1.1"/><text x="1217" y="911.2" font-size="9" fill="#e0e0e0" text-anchor="middle">2</text><circle cx="1361.7" cy="908" r="6.7" fill="none" stroke="#e0e0e0" stroke-width="1.1"/><text x="1361.7" y="911.2" font-size="9" fill="#e0e0e0" text-anchor="middle">2</text><circle cx="1506" cy="908" r="6.7" fill="none" stroke="#e0e0e0" stroke-width="1.1"/><text x="1506" y="911.2" font-size="9" fill="#e0e0e0" text-anchor="middle">1</text><text x="1167.5" y="928" font-size="8" fill="#e6e6e6" textLength="106" lengthAdjust="spacingAndGlyphs" font-weight="bold">4MM CHEQUERED PLATE LAYOUT.</text><line x1="1167.5" y1="930.2" x2="1273.5" y2="930.2" stroke="#e6e6e6" stroke-width="1" /><line x1="740" y1="913.8" x2="740" y2="1082.2" stroke="#dadada" stroke-width="1.7" /><line x1="736.4" y1="917" x2="742" y2="917" stroke="#dadada" stroke-width="1.5" /><path d="M738.3,918.7 L741.7,915.3" stroke="#dadada" stroke-width="1.3"/><line x1="736.4" y1="1079" x2="742" y2="1079" stroke="#dadada" stroke-width="1.5" /><path d="M738.3,1080.7 L741.7,1077.3" stroke="#dadada" stroke-width="1.3"/><line x1="737" y1="917" x2="797" y2="917" stroke="#dadada" stroke-width="1.2" /><line x1="737" y1="1079" x2="786" y2="1079" stroke="#dadada" stroke-width="1.2" /><rect x="733.55" y="991.55" width="5.5" height="11.9" fill="#00ff00"/><line x1="801.5" y1="927" x2="745.5" y2="1073" stroke="#19e619" stroke-width="1.1" /><line x1="801.82" y1="928.92" x2="749.02" y2="1072.52" stroke="#f2f200" stroke-width="1.1" /><line x1="802.18" y1="931.08" x2="752.98" y2="1071.98" stroke="#19e619" stroke-width="1.1" /><line x1="745.5" y1="1073.5" x2="797" y2="1073.5" stroke="#19e619" stroke-width="1.2" /><line x1="1004" y1="927" x2="1060.5" y2="1073" stroke="#19e619" stroke-width="1.1" /><line x1="1003.68" y1="928.92" x2="1056.98" y2="1072.52" stroke="#f2f200" stroke-width="1.1" /><line x1="1003.32" y1="931.08" x2="1053.02" y2="1071.98" stroke="#19e619" stroke-width="1.1" /><line x1="1060.5" y1="1073.5" x2="1008.5" y2="1073.5" stroke="#19e619" stroke-width="1.2" /><path d="M745.5,1073.7 H797 M752,1068.3 H797 M761.7,1045 V1068" fill="none" stroke="#19e619" stroke-width="1.2"/><path d="M1060.5,1073.7 H1009 M1054,1068.3 H1009 M1044.3,1045 V1068" fill="none" stroke="#19e619" stroke-width="1.2"/><path d="M748,1071 H797 M1058,1071 H1009" fill="none" stroke="#f2f200" stroke-width="0.9"/><line x1="799.5" y1="927" x2="799.5" y2="1069" stroke="#e8e8e8" stroke-width="1" /><line x1="801.8" y1="927" x2="801.8" y2="1069" stroke="#f2f200" stroke-width="1.1" /><line x1="804.3" y1="927" x2="804.3" y2="1069" stroke="#e8e8e8" stroke-width="1" /><line x1="1001" y1="927" x2="1001" y2="1069" stroke="#e8e8e8" stroke-width="1" /><line x1="1003.3" y1="927" x2="1003.3" y2="1069" stroke="#f2f200" stroke-width="1.1" /><line x1="1005.8" y1="927" x2="1005.8" y2="1069" stroke="#e8e8e8" stroke-width="1" /><rect x="796.7" y="917" width="10" height="10" fill="none" stroke="#19e619" stroke-width="1.3"/><rect x="796.7" y="1068.5" width="10" height="10.5" fill="none" stroke="#19e619" stroke-width="1.3"/><rect x="999" y="917" width="10" height="10" fill="none" stroke="#19e619" stroke-width="1.3"/><rect x="999" y="1068.5" width="10" height="10.5" fill="none" stroke="#19e619" stroke-width="1.3"/><path d="M793,948 q4,4 8,2 M1012.5,948 q-4,4 -8,2" fill="none" stroke="#19e619" stroke-width="0.9"/><line x1="801.5" y1="957" x2="1004" y2="957" stroke="#d8d8d8" stroke-width="1.2" /><line x1="803.5" y1="953.4" x2="803.5" y2="959" stroke="#d8d8d8" stroke-width="1.5" /><path d="M801.8,958.7 L805.2,955.3" stroke="#d8d8d8" stroke-width="1.3"/><line x1="1002" y1="953.4" x2="1002" y2="959" stroke="#d8d8d8" stroke-width="1.5" /><path d="M1000.3,958.7 L1003.7,955.3" stroke="#d8d8d8" stroke-width="1.3"/><rect x="897.75" y="949.45" width="9.5" height="5.1" fill="#00ff00"/><line x1="806.7" y1="1068.8" x2="999" y2="1068.8" stroke="#f2f200" stroke-width="1.3" /><line x1="806.7" y1="1078.8" x2="999" y2="1078.8" stroke="#f2f200" stroke-width="1.3" /><line x1="806.7" y1="1067.6" x2="999" y2="1067.6" stroke="#19e619" stroke-width="0.9" /><rect x="786.3" y="1079.3" width="232.5" height="20.7" fill="none" stroke="#19e619" stroke-width="1.4"/><line x1="786" y1="1100.3" x2="1019" y2="1100.3" stroke="#19e619" stroke-width="2.8" /><line x1="902.5" y1="1069" x2="902.5" y2="1162.5" stroke="#8c8c8c" stroke-width="1" /><line x1="787" y1="1100" x2="787" y2="1151" stroke="#dadada" stroke-width="1.1" /><line x1="1018.3" y1="1100" x2="1018.3" y2="1151" stroke="#dadada" stroke-width="1.1" /><line x1="783.8" y1="1129.5" x2="1021.5" y2="1129.5" stroke="#dadada" stroke-width="1.7" /><line x1="787" y1="1125.9" x2="787" y2="1131.5" stroke="#dadada" stroke-width="1.5" /><path d="M785.3,1131.2 L788.7,1127.8" stroke="#dadada" stroke-width="1.3"/><line x1="902.5" y1="1125.9" x2="902.5" y2="1131.5" stroke="#dadada" stroke-width="1.5" /><path d="M900.8,1131.2 L904.2,1127.8" stroke="#dadada" stroke-width="1.3"/><line x1="1018.3" y1="1125.9" x2="1018.3" y2="1131.5" stroke="#dadada" stroke-width="1.5" /><path d="M1016.6,1131.2 L1020,1127.8" stroke="#dadada" stroke-width="1.3"/><line x1="783.8" y1="1148" x2="1021.5" y2="1148" stroke="#dadada" stroke-width="1.7" /><line x1="787" y1="1144.4" x2="787" y2="1150" stroke="#dadada" stroke-width="1.5" /><path d="M785.3,1149.7 L788.7,1146.3" stroke="#dadada" stroke-width="1.3"/><line x1="1018.3" y1="1144.4" x2="1018.3" y2="1150" stroke="#dadada" stroke-width="1.5" /><path d="M1016.6,1149.7 L1020,1146.3" stroke="#dadada" stroke-width="1.3"/><path d="M787,1102 L843.7,1165 M1018.3,1102 L973.7,1151 M838.7,1167.5 L978.7,1151.3" fill="none" stroke="#8c8c8c" stroke-width="1.2"/><line x1="878.7" y1="1101.8" x2="927.5" y2="1101.8" stroke="#19e619" stroke-width="1" /><line x1="888" y1="1095" x2="888" y2="1123" stroke="#19e619" stroke-width="1.6" /><line x1="885" y1="1123" x2="891" y2="1123" stroke="#19e619" stroke-width="1.4" /><line x1="885.5" y1="1098" x2="890.5" y2="1098" stroke="#19e619" stroke-width="1.4" /><line x1="886.2" y1="1096" x2="889.8" y2="1096" stroke="#19e619" stroke-width="1" /><line x1="917" y1="1095" x2="917" y2="1123" stroke="#19e619" stroke-width="1.6" /><line x1="914" y1="1123" x2="920" y2="1123" stroke="#19e619" stroke-width="1.4" /><line x1="914.5" y1="1098" x2="919.5" y2="1098" stroke="#19e619" stroke-width="1.4" /><line x1="915.2" y1="1096" x2="918.8" y2="1096" stroke="#19e619" stroke-width="1" /><rect x="839.25" y="1122.75" width="10.5" height="5.9" fill="#00ff00"/><rect x="955.75" y="1122.75" width="9.5" height="5.9" fill="#00ff00"/><rect x="897.75" y="1140.05" width="9.5" height="5.9" fill="#00ff00"/><rect x="862.9" y="1112.2" width="0.9" height="0.9" fill="#e8e8e8"/><rect x="872.3" y="1106.5" width="0.9" height="0.9" fill="#e8e8e8"/><rect x="805.7" y="1108.5" width="0.9" height="0.9" fill="#e8e8e8"/><rect x="976.0" y="1110.6" width="0.9" height="0.9" fill="#e8e8e8"/><rect x="919.8" y="1127.2" width="0.9" height="0.9" fill="#e8e8e8"/><path d="M855.2,1111.8 l1.9,-2.7 l1.1,2.9 z" fill="none" stroke="#e8e8e8" stroke-width="0.7"/><rect x="973.6" y="1114.0" width="0.9" height="0.9" fill="#e8e8e8"/><rect x="933.8" y="1125.7" width="0.9" height="0.9" fill="#e8e8e8"/><rect x="804.1" y="1106.6" width="0.9" height="0.9" fill="#e8e8e8"/><rect x="943.1" y="1129.1" width="0.9" height="0.9" fill="#e8e8e8"/><rect x="921.8" y="1130.6" width="0.9" height="0.9" fill="#e8e8e8"/><rect x="968.7" y="1145.6" width="0.9" height="0.9" fill="#e8e8e8"/><rect x="919.2" y="1135.0" width="0.9" height="0.9" fill="#e8e8e8"/><rect x="954.1" y="1120.6" width="0.9" height="0.9" fill="#e8e8e8"/><rect x="816.6" y="1128.5" width="0.9" height="0.9" fill="#e8e8e8"/><path d="M824.2,1132.8 l2.3,-3.2 l1.4,3.4 z" fill="none" stroke="#e8e8e8" stroke-width="0.7"/><rect x="962.0" y="1138.0" width="0.9" height="0.9" fill="#e8e8e8"/><rect x="860.6" y="1145.4" width="0.9" height="0.9" fill="#e8e8e8"/><rect x="920.5" y="1130.8" width="0.9" height="0.9" fill="#e8e8e8"/><rect x="939.4" y="1106.7" width="0.9" height="0.9" fill="#e8e8e8"/><rect x="974.9" y="1120.4" width="0.9" height="0.9" fill="#e8e8e8"/><rect x="940.4" y="1104.4" width="0.9" height="0.9" fill="#e8e8e8"/><path d="M827.8,1110.1 l2.4,-3.3 l1.4,3.6 z" fill="none" stroke="#e8e8e8" stroke-width="0.7"/><rect x="819.1" y="1118.1" width="0.9" height="0.9" fill="#e8e8e8"/><rect x="986.1" y="1107.9" width="0.9" height="0.9" fill="#e8e8e8"/><rect x="852.6" y="1128.3" width="0.9" height="0.9" fill="#e8e8e8"/><rect x="824.0" y="1113.7" width="0.9" height="0.9" fill="#e8e8e8"/><rect x="842.5" y="1132.6" width="0.9" height="0.9" fill="#e8e8e8"/><rect x="849.1" y="1103.2" width="0.9" height="0.9" fill="#e8e8e8"/><rect x="873.1" y="1137.5" width="0.9" height="0.9" fill="#e8e8e8"/><rect x="945.4" y="1134.4" width="0.9" height="0.9" fill="#e8e8e8"/><rect x="942.1" y="1106.3" width="0.9" height="0.9" fill="#e8e8e8"/><rect x="969.5" y="1126.9" width="0.9" height="0.9" fill="#e8e8e8"/><rect x="804.0" y="1107.1" width="0.9" height="0.9" fill="#e8e8e8"/><path d="M826.5,1123.7 l1.6,-2.2 l1.0,2.4 z" fill="none" stroke="#e8e8e8" stroke-width="0.7"/><rect x="824.0" y="1109.2" width="0.9" height="0.9" fill="#e8e8e8"/><rect x="928.2" y="1112.1" width="0.9" height="0.9" fill="#e8e8e8"/><rect x="868.2" y="1125.2" width="0.9" height="0.9" fill="#e8e8e8"/><path d="M894.8,1132.5 l1.7,-2.4 l1.0,2.6 z" fill="none" stroke="#e8e8e8" stroke-width="0.7"/><rect x="867.1" y="1119.2" width="0.9" height="0.9" fill="#e8e8e8"/><rect x="826.3" y="1104.4" width="0.9" height="0.9" fill="#e8e8e8"/><rect x="908.9" y="1111.9" width="0.9" height="0.9" fill="#e8e8e8"/><rect x="946.6" y="1118.9" width="0.9" height="0.9" fill="#e8e8e8"/><rect x="909.8" y="1150.5" width="0.9" height="0.9" fill="#e8e8e8"/><rect x="840.2" y="1152.5" width="0.9" height="0.9" fill="#e8e8e8"/><rect x="974.1" y="1148.1" width="0.9" height="0.9" fill="#e8e8e8"/><path d="M906.5,1124.7 l1.6,-2.3 l1.0,2.4 z" fill="none" stroke="#e8e8e8" stroke-width="0.7"/><rect x="852.9" y="1118.8" width="0.9" height="0.9" fill="#e8e8e8"/><rect x="839.6" y="1116.8" width="0.9" height="0.9" fill="#e8e8e8"/><rect x="836.0" y="1141.1" width="0.9" height="0.9" fill="#e8e8e8"/><rect x="979.1" y="1132.2" width="0.9" height="0.9" fill="#e8e8e8"/><rect x="969.9" y="1108.2" width="0.9" height="0.9" fill="#e8e8e8"/><rect x="958.8" y="1132.2" width="0.9" height="0.9" fill="#e8e8e8"/><rect x="967.6" y="1123.3" width="0.9" height="0.9" fill="#e8e8e8"/><rect x="953.1" y="1113.4" width="0.9" height="0.9" fill="#e8e8e8"/><rect x="971.5" y="1111.9" width="0.9" height="0.9" fill="#e8e8e8"/><rect x="868.8" y="1136.5" width="0.9" height="0.9" fill="#e8e8e8"/><rect x="936.2" y="1135.1" width="0.9" height="0.9" fill="#e8e8e8"/><rect x="887.6" y="1156.2" width="0.9" height="0.9" fill="#e8e8e8"/><rect x="837.5" y="1118.4" width="0.9" height="0.9" fill="#e8e8e8"/><rect x="844.1" y="1138.8" width="0.9" height="0.9" fill="#e8e8e8"/><rect x="884.3" y="1111.0" width="0.9" height="0.9" fill="#e8e8e8"/><rect x="869.6" y="1130.9" width="0.9" height="0.9" fill="#e8e8e8"/><path d="M909.7,1134.9 l2.0,-2.9 l1.2,3.1 z" fill="none" stroke="#e8e8e8" stroke-width="0.7"/><rect x="831.2" y="1103.2" width="0.9" height="0.9" fill="#e8e8e8"/><rect x="828.8" y="1131.9" width="0.9" height="0.9" fill="#e8e8e8"/><rect x="915.2" y="1122.9" width="0.9" height="0.9" fill="#e8e8e8"/><path d="M915.0,1150.8 l2.2,-3.0 l1.3,3.2 z" fill="none" stroke="#e8e8e8" stroke-width="0.7"/><rect x="845.9" y="1119.9" width="0.9" height="0.9" fill="#e8e8e8"/><rect x="904.2" y="1137.3" width="0.9" height="0.9" fill="#e8e8e8"/><rect x="927.8" y="1133.8" width="0.9" height="0.9" fill="#e8e8e8"/><rect x="945.9" y="1130.6" width="0.9" height="0.9" fill="#e8e8e8"/><rect x="979.0" y="1111.4" width="0.9" height="0.9" fill="#e8e8e8"/><rect x="889.5" y="1107.4" width="0.9" height="0.9" fill="#e8e8e8"/><rect x="938.6" y="1111.7" width="0.9" height="0.9" fill="#e8e8e8"/><rect x="977.3" y="1112.8" width="0.9" height="0.9" fill="#e8e8e8"/><rect x="906.0" y="1123.7" width="0.9" height="0.9" fill="#e8e8e8"/><path d="M861.7,1147.1 l2.2,-3.0 l1.3,3.2 z" fill="none" stroke="#e8e8e8" stroke-width="0.7"/><rect x="889.1" y="1104.1" width="0.9" height="0.9" fill="#e8e8e8"/><path d="M930.4,1134.2 l2.6,-3.6 l1.6,3.9 z" fill="none" stroke="#e8e8e8" stroke-width="0.7"/><path d="M813.6,1119.2 l2.4,-3.3 l1.4,3.6 z" fill="none" stroke="#e8e8e8" stroke-width="0.7"/><rect x="850.9" y="1110.9" width="0.9" height="0.9" fill="#e8e8e8"/><rect x="848.2" y="1112.1" width="0.9" height="0.9" fill="#e8e8e8"/><path d="M918.4,1145.7 l1.7,-2.3 l1.0,2.5 z" fill="none" stroke="#e8e8e8" stroke-width="0.7"/><path d="M944.8,1128.9 l2.5,-3.6 l1.5,3.8 z" fill="none" stroke="#e8e8e8" stroke-width="0.7"/><path d="M932.7,1151.9 l2.5,-3.4 l1.5,3.7 z" fill="none" stroke="#e8e8e8" stroke-width="0.7"/><rect x="892.1" y="1123.7" width="0.9" height="0.9" fill="#e8e8e8"/><rect x="998.5" y="1119.3" width="0.9" height="0.9" fill="#e8e8e8"/><path d="M908.6,1117.5 l1.8,-2.5 l1.1,2.6 z" fill="none" stroke="#e8e8e8" stroke-width="0.7"/><rect x="801.3" y="1115.3" width="0.9" height="0.9" fill="#e8e8e8"/><rect x="858.6" y="1149.3" width="0.9" height="0.9" fill="#e8e8e8"/><rect x="902.5" y="1113.9" width="0.9" height="0.9" fill="#e8e8e8"/><rect x="914.0" y="1114.6" width="0.9" height="0.9" fill="#e8e8e8"/><rect x="1000.3" y="1109.5" width="0.9" height="0.9" fill="#e8e8e8"/><rect x="887.2" y="1133.2" width="0.9" height="0.9" fill="#e8e8e8"/><rect x="878.4" y="1133.9" width="0.9" height="0.9" fill="#e8e8e8"/><rect x="933.1" y="1127.7" width="0.9" height="0.9" fill="#e8e8e8"/><path d="M802.2,1110.9 l2.3,-3.3 l1.4,3.5 z" fill="none" stroke="#e8e8e8" stroke-width="0.7"/><path d="M847.5,1113.0 l2.4,-3.4 l1.5,3.7 z" fill="none" stroke="#e8e8e8" stroke-width="0.7"/><rect x="853.4" y="1117.8" width="0.9" height="0.9" fill="#e8e8e8"/><rect x="893.4" y="1112.6" width="0.9" height="0.9" fill="#e8e8e8"/><rect x="849.2" y="1161.7" width="0.9" height="0.9" fill="#e8e8e8"/><rect x="913.1" y="1117.9" width="0.9" height="0.9" fill="#e8e8e8"/><text x="841" y="1179.5" font-size="7.5" fill="#e6e6e6" textLength="105" lengthAdjust="spacingAndGlyphs" font-weight="bold">SECTION  THROUGH  THE  BRIDGE.</text><line x1="841" y1="1181.7" x2="946" y2="1181.7" stroke="#e6e6e6" stroke-width="1" /><line x1="1214" y1="976.7" x2="1406" y2="976.7" stroke="#22e222" stroke-width="11.2" /><line x1="1214" y1="976.7" x2="1406" y2="976.7" stroke="#f2f200" stroke-width="10" /><line x1="1214" y1="976.7" x2="1406" y2="976.7" stroke="#050505" stroke-width="7.2" /><line x1="1214" y1="976.7" x2="1406" y2="976.7" stroke="#8c8c8c" stroke-width="2.6" /><line x1="1214" y1="976.7" x2="1406" y2="976.7" stroke="#1a1a1a" stroke-width="0.7" /><line x1="1214" y1="1128.2" x2="1406" y2="1128.2" stroke="#22e222" stroke-width="11.2" /><line x1="1214" y1="1128.2" x2="1406" y2="1128.2" stroke="#f2f200" stroke-width="10" /><line x1="1214" y1="1128.2" x2="1406" y2="1128.2" stroke="#050505" stroke-width="7.2" /><line x1="1214" y1="1128.2" x2="1406" y2="1128.2" stroke="#8c8c8c" stroke-width="2.6" /><line x1="1214" y1="1128.2" x2="1406" y2="1128.2" stroke="#1a1a1a" stroke-width="0.7" /><line x1="1207" y1="972" x2="1413.5" y2="1133" stroke="#22e222" stroke-width="9.6" /><line x1="1207" y1="972" x2="1413.5" y2="1133" stroke="#f2f200" stroke-width="8.4" /><line x1="1207" y1="972" x2="1413.5" y2="1133" stroke="#050505" stroke-width="5.6" /><line x1="1207" y1="972" x2="1413.5" y2="1133" stroke="#8c8c8c" stroke-width="2.6" /><line x1="1207" y1="972" x2="1413.5" y2="1133" stroke="#1a1a1a" stroke-width="0.7" /><line x1="1207" y1="1133" x2="1413.5" y2="972" stroke="#22e222" stroke-width="9.6" /><line x1="1207" y1="1133" x2="1413.5" y2="972" stroke="#f2f200" stroke-width="8.4" /><line x1="1207" y1="1133" x2="1413.5" y2="972" stroke="#050505" stroke-width="5.6" /><line x1="1207" y1="1133" x2="1413.5" y2="972" stroke="#8c8c8c" stroke-width="2.6" /><line x1="1207" y1="1133" x2="1413.5" y2="972" stroke="#1a1a1a" stroke-width="0.7" /><path d="M-1,-7 L1,7" stroke="#9a9a9a" stroke-width="1.2" transform="translate(1207,972) rotate(38)"/><path d="M-1,-7 L1,7" stroke="#9a9a9a" stroke-width="1.2" transform="translate(1413.5,1133) rotate(38)"/><path d="M-1,-7 L1,7" stroke="#9a9a9a" stroke-width="1.2" transform="translate(1207,1133) rotate(-38)"/><path d="M-1,-7 L1,7" stroke="#9a9a9a" stroke-width="1.2" transform="translate(1413.5,972) rotate(-38)"/><line x1="1311" y1="962.5" x2="1311" y2="1142.5" stroke="#22e222" stroke-width="10.8" /><line x1="1311" y1="962.5" x2="1311" y2="1142.5" stroke="#f2f200" stroke-width="9.6" /><line x1="1311" y1="962.5" x2="1311" y2="1142.5" stroke="#050505" stroke-width="6.8" /><line x1="1311" y1="962.5" x2="1311" y2="1142.5" stroke="#8c8c8c" stroke-width="2.6" /><line x1="1311" y1="962.5" x2="1311" y2="1142.5" stroke="#1a1a1a" stroke-width="0.7" /><path d="M1303,963.5 h16 M1303,1141.5 h16 M1311,960 v5 M1311,1140 v5" fill="none" stroke="#9a9a9a" stroke-width="1"/><rect x="1321" y="963" width="30" height="5.2" fill="#00ff00" /><rect x="1320" y="1113.7" width="30" height="5.2" fill="#00ff00" /><rect x="1301" y="1078" width="4.7" height="36" fill="#00ff00" /><rect x="-15" y="-2.6" width="30" height="5.2" fill="#00ff00" transform="translate(1264.5,1005) rotate(38)"/><rect x="-15" y="-2.6" width="30" height="5.2" fill="#00ff00" transform="translate(1341.5,1016.5) rotate(-36)"/><rect x="-15" y="-2.6" width="30" height="5.2" fill="#00ff00" transform="translate(1245,1093.5) rotate(-36)"/><rect x="-15" y="-2.6" width="30" height="5.2" fill="#00ff00" transform="translate(1362.5,1081.5) rotate(38)"/><line x1="1401" y1="973.3" x2="1401" y2="1131.7" stroke="#dadada" stroke-width="1.7" /><line x1="1397.4" y1="976.5" x2="1403" y2="976.5" stroke="#dadada" stroke-width="1.5" /><path d="M1399.3,978.2 L1402.7,974.8" stroke="#dadada" stroke-width="1.3"/><line x1="1397.4" y1="1052" x2="1403" y2="1052" stroke="#dadada" stroke-width="1.5" /><path d="M1399.3,1053.7 L1402.7,1050.3" stroke="#dadada" stroke-width="1.3"/><line x1="1397.4" y1="1128.5" x2="1403" y2="1128.5" stroke="#dadada" stroke-width="1.5" /><path d="M1399.3,1130.2 L1402.7,1126.8" stroke="#dadada" stroke-width="1.3"/><line x1="1438" y1="973.3" x2="1438" y2="1131.7" stroke="#dadada" stroke-width="1.7" /><line x1="1434.4" y1="976.5" x2="1440" y2="976.5" stroke="#dadada" stroke-width="1.5" /><path d="M1436.3,978.2 L1439.7,974.8" stroke="#dadada" stroke-width="1.3"/><line x1="1434.4" y1="1128.5" x2="1440" y2="1128.5" stroke="#dadada" stroke-width="1.5" /><path d="M1436.3,1130.2 L1439.7,1126.8" stroke="#dadada" stroke-width="1.3"/><line x1="1400" y1="976.5" x2="1441.5" y2="976.5" stroke="#dadada" stroke-width="1.2" /><line x1="1400" y1="1128.5" x2="1441.5" y2="1128.5" stroke="#dadada" stroke-width="1.2" /><line x1="1316" y1="1052" x2="1404.5" y2="1052" stroke="#dadada" stroke-width="1.2" /><rect x="1394.75" y="1008.75" width="5.5" height="9.9" fill="#00ff00"/><rect x="1394.75" y="1085.55" width="5.5" height="7.9" fill="#00ff00"/><rect x="1430.95" y="1045.05" width="5.5" height="11.9" fill="#00ff00"/><text x="1271" y="1170.7" font-size="7.5" fill="#e6e6e6" textLength="99" lengthAdjust="spacingAndGlyphs" font-weight="bold">BRACING  CONNECTION  DETAIL.</text><line x1="1271" y1="1172.9" x2="1370" y2="1172.9" stroke="#e6e6e6" stroke-width="1" /><path d="M302.5,1122 V1176.3 H351" fill="none" stroke="#e6e6e6" stroke-width="1.1"/><rect x="298" y="1171.3" width="9.6" height="10" fill="none" stroke="#e6e6e6" stroke-width="1.1"/><path d="M304,1104 L310.5,1111.5 L317,1104 M310.5,1111.5 V1117.7" fill="none" stroke="#e6e6e6" stroke-width="1.1"/><path d="M355,1161 L368,1175 M368,1161 L355,1175" fill="none" stroke="#e6e6e6" stroke-width="1.1"/></g></g><g id="nav"><line x1="2060" y1="270.8" x2="2070" y2="270.8" stroke="#f0f0f0" stroke-width="2.2" /><rect x="2079.5" y="266" width="6" height="6.5" fill="none" stroke="#f0f0f0" stroke-width="1.5"/><path d="M2081.5,265.5 v-2 h6 v6.5 h-2" fill="none" stroke="#f0f0f0" stroke-width="1.3"/><path d="M2098.5,263.5 l8,8.5 M2106.5,263.5 l-8,8.5" stroke="#f0f0f0" stroke-width="1.9"/><path d="M1971.5,295 L1978,288 L1984.5,295 H1982.7 V301.5 H1973.3 V295 Z" fill="#4a4a4a"/><ellipse cx="2038.5" cy="366" rx="50.8" ry="57.8" fill="none" stroke="#3b3b3b" stroke-width="13.4"/><path d="M2081,291.5 A28,28 0 0 1 2106,316" fill="none" stroke="#3b3b3b" stroke-width="5"/><path d="M2075.5,292.5 l8,-6.5 l1,10.5z M2107.5,325 l-6,-9 h10.5z" fill="#3b3b3b"/><text x="2038.6" y="313.8" font-size="22" fill="#d8d8d8" text-anchor="middle" font-weight="bold">N</text><text x="2038.5" y="435.3" font-size="22" fill="#d8d8d8" text-anchor="middle" font-weight="bold">S</text><text x="1984.7" y="374.3" font-size="22" fill="#d8d8d8" text-anchor="middle" font-weight="bold">W</text><text x="2093" y="374.3" font-size="22" fill="#d8d8d8" text-anchor="middle" font-weight="bold">E</text><path d="M2032.5,324 h12 l-6,6z M2032.5,408 h12 l-6,-6z M2001.2,358.8 v14 l6.6,-7z M2075.8,358.8 v14 l-6.6,-7z" fill="#f4f4f4"/><rect x="2014" y="338" width="49.5" height="56" fill="#d6d6d6" /><rect x="2023" y="348.7" width="31.5" height="34.5" fill="#bfc4cd" /><text x="2038.9" y="371.3" font-size="14.5" fill="#2e3138" text-anchor="middle" textLength="21.2" lengthAdjust="spacingAndGlyphs" font-weight="bold">TOP</text><path d="M2097,431 h10.5 M2097.5,433.2 h9.5 l-4.7,5z" stroke="#4a4a4a" stroke-width="1.2" fill="#4a4a4a"/><rect x="2016" y="460.4" width="45.6" height="18" rx="3.5" fill="#b4b4c4" stroke="#8a8a9e" stroke-width="1"/><text x="2019.5" y="472.4" font-size="11" fill="#3a3a42" textLength="23.5" lengthAdjust="spacingAndGlyphs">WCS</text><path d="M2049,467 h7.2 l-3.6,4.2z" fill="#d8d8e2" stroke="#77778a" stroke-width="0.7"/><rect x="2084.5" y="506.5" width="30.5" height="227" rx="3" fill="#3c3c3c" stroke="#4c4c4c" stroke-width="1.2"/><circle cx="2109.5" cy="511.5" r="2.6" fill="none" stroke="#2a2a2a" stroke-width="0.9"/><path d="M2108,510 l3,3 M2111,510 l-3,3" stroke="#2a2a2a" stroke-width="0.7"/><circle cx="2109.5" cy="727.5" r="2.6" fill="none" stroke="#2a2a2a" stroke-width="0.9"/><path d="M2108,727 h3" stroke="#2a2a2a" stroke-width="0.9"/><path d="M2089,538 a10.5,10.5 0 1 0 6,-9.5 h14.5 v10" fill="none" stroke="#2a2a2a" stroke-width="1.9"/><circle cx="2099.5" cy="538" r="5.8" fill="none" stroke="#2a2a2a" stroke-width="1.9"/><path d="M2097,558.5 h5 l-2.5,3z M2097,634.5 h5 l-2.5,3z M2097,675.5 h5 l-2.5,3z" fill="#2a2a2a"/><line x1="2087" y1="566.3" x2="2112.5" y2="566.3" stroke="#4e4e4e" stroke-width="1" /><line x1="2087" y1="682.3" x2="2112.5" y2="682.3" stroke="#4c4c4c" stroke-width="1" /><path d="M2093,588 l-3.5,-6 q0,-2.5 2.5,-1 l2,3 v-9 q1.3,-2 2.6,0 v-2.5 q1.4,-2 2.8,0 v2.5 q1.4,-2 2.8,0 v3 q1.4,-1.6 2.6,0.4 v9 q0,5 -3.5,8.5 h-8 z M2097,575 v6 M2100,572.5 v8 M2103,575 v6" fill="none" stroke="#2a2a2a" stroke-width="1.8"/><path d="M2088.5,602 l13,14 M2102,602 l-13.5,14 M2088.5,602 h4 M2088.5,602 v4 M2102,602 h-4 M2102,602 v4 M2088.5,616 h4 M2088.5,616 v-4" stroke="#2a2a2a" stroke-width="1.9" fill="none"/><circle cx="2103.5" cy="617" r="4.2" fill="#3a3a3a" stroke="#2a2a2a" stroke-width="1.9"/><path d="M2106.5,620.5 l4,4.5" stroke="#2a2a2a" stroke-width="2.2"/><ellipse cx="2099.5" cy="658.5" rx="10" ry="4.2" fill="none" stroke="#2a2a2a" stroke-width="1.9"/><path d="M2097.5,667 v-15 h-2.5 l4.5,-7 l4.5,7 h-2.5 v15 z" fill="#3a3a3a" stroke="#2a2a2a" stroke-width="1.8"/><path d="M2090,662.5 l-1.5,-4.5 l4.5,1z" fill="#2a2a2a"/><rect x="2088.3" y="688.5" width="5.6" height="5.6" fill="none" stroke="#2a2a2a" stroke-width="1.5"/><rect x="2095.8" y="688.5" width="5.6" height="5.6" fill="none" stroke="#2a2a2a" stroke-width="1.5"/><rect x="2103.3" y="688.5" width="5.6" height="5.6" fill="none" stroke="#2a2a2a" stroke-width="1.5"/><rect x="2088.5" y="698" width="14.5" height="13.5" fill="none" stroke="#2a2a2a" stroke-width="1.8"/><path d="M2092.5,700.5 v8.5 l7.5,-4.2z" fill="#2a2a2a"/></g>
</svg>
</body></html>
